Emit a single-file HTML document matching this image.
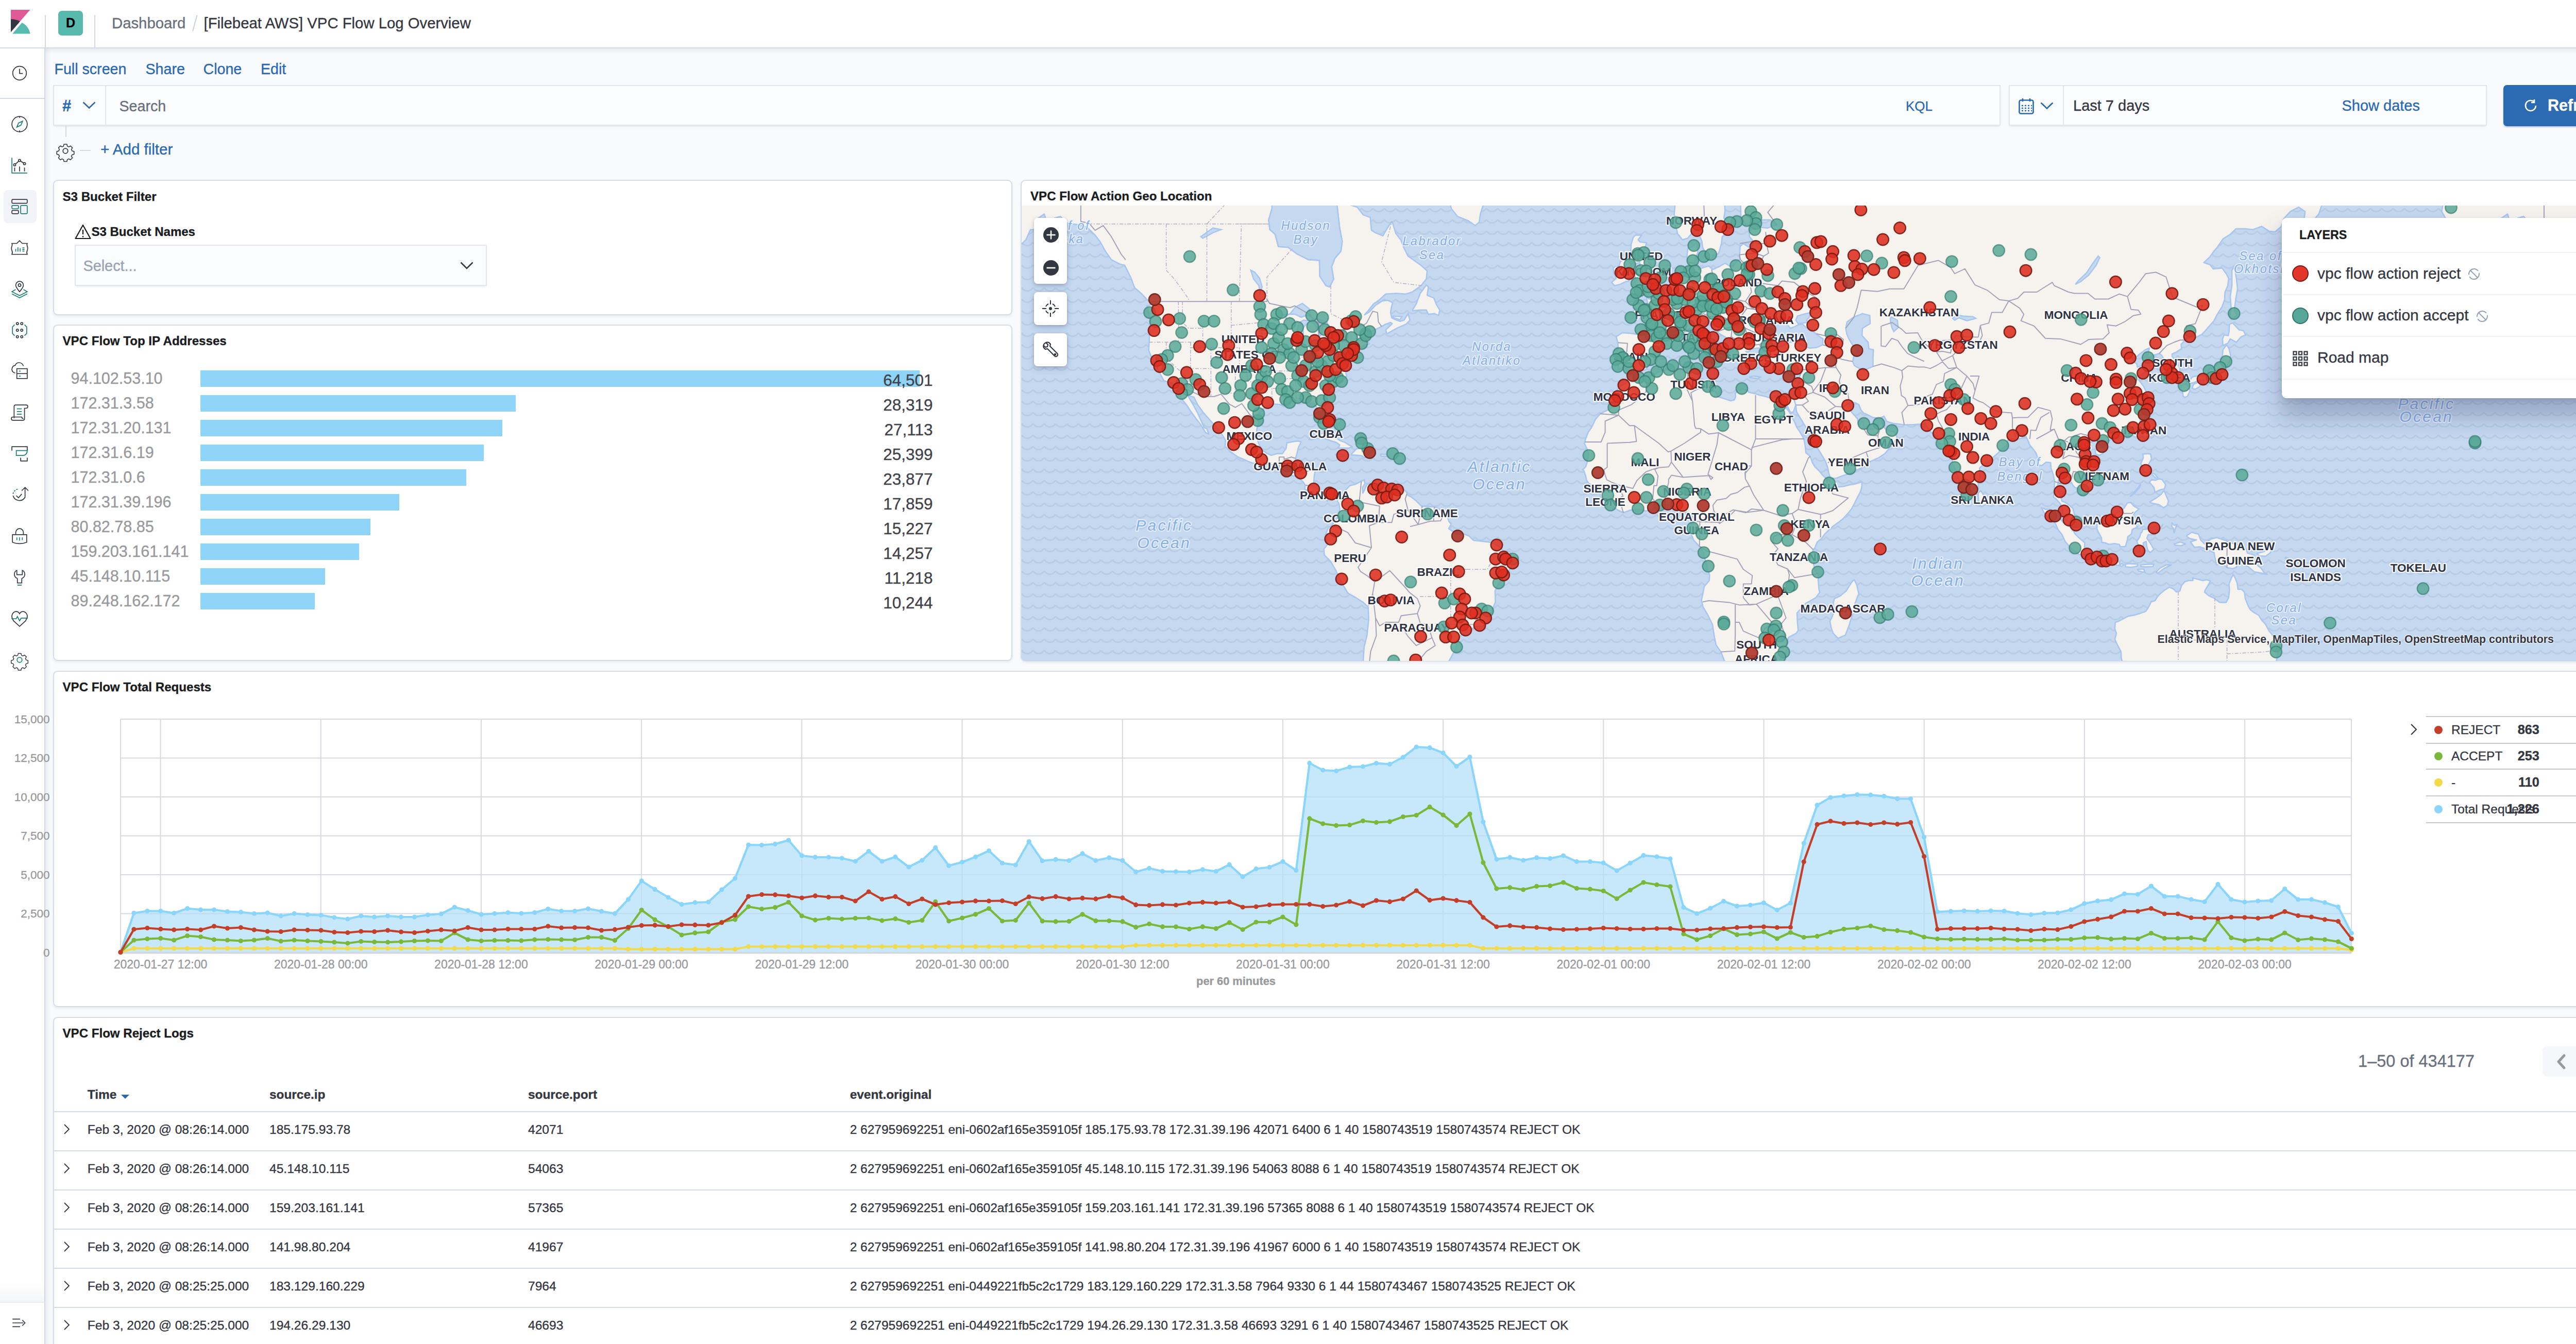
<!DOCTYPE html>
<html><head><meta charset="utf-8"><title>Kibana</title><style>
*{margin:0;padding:0;box-sizing:border-box}
html,body{width:5111px;height:2609px;overflow:hidden;background:#f9fafc;font-family:"Liberation Sans",sans-serif}
.t{position:absolute;line-height:1;white-space:nowrap;-webkit-text-stroke:0.35px currentColor}
.a{position:absolute}
svg{position:absolute;overflow:visible}
</style></head>
<body>
<div class="a" style="left:0px;top:0px;width:5111px;height:93px;background:#fff;"></div>
<div class="a" style="left:0px;top:92px;width:5111px;height:2px;background:#d3dae6;"></div>
<div class="a" style="left:0px;top:94px;width:5111px;height:10px;background:linear-gradient(rgba(152,162,179,.18),rgba(152,162,179,0));"></div>
<svg style="left:15px;top:19px" width="48" height="48" viewBox="0 0 32 32"><path fill="#e05a97" d="M4 0v28.789L28.935.017z"/><path fill="#343741" d="M4 12v16.789l11.906-13.738A24.721 24.721 0 004 12"/><path fill="#58bbb2" d="M18.479 16.664L6.268 30.754l-.267.306H29.14c-1.223-6.288-5.025-11.636-10.661-14.396"/></svg>
<div class="a" style="left:87px;top:29px;width:2px;height:64px;background:#d3dae6;"></div>
<div class="a" style="left:183px;top:29px;width:2px;height:64px;background:#d3dae6;"></div>
<div class="a" style="left:5015px;top:29px;width:2px;height:64px;background:#d3dae6;"></div>
<div class="a" style="left:113px;top:21px;width:48px;height:48px;background:#58b9ad;border-radius:7px;"></div>
<div class="t" style="left:137.0px;transform:translateX(-50%);top:32.3px;font-size:25px;color:#000;font-weight:bold;">D</div>
<div class="t" style="left:217.0px;top:30.2px;font-size:29.3px;color:#69707d;">Dashboard</div>
<svg style="left:370px;top:28px" width="16" height="34" viewBox="0 0 16 34"><path d="M12.5 1.5L4 32.5" stroke="#c9d0dc" stroke-width="2"/></svg>
<div class="t" style="left:395.5px;top:30.2px;font-size:29.3px;color:#343741;">[Filebeat AWS] VPC Flow Log Overview</div>
<svg style="left:5045px;top:27px" width="36" height="36" viewBox="0 0 36 36"><circle cx="18" cy="18" r="15.2" fill="none" stroke="#343741" stroke-width="2.3"/><circle cx="18" cy="18" r="8.8" fill="none" stroke="#343741" stroke-width="2.3"/><path d="M7.5 7.5L12 12M28.5 7.5L24 12M7.5 28.5L12 24M28.5 28.5L24 24" stroke="#343741" stroke-width="4.2"/></svg>
<div class="a" style="left:0px;top:94px;width:87px;height:2515px;background:#fff;"></div>
<div class="a" style="left:86px;top:94px;width:2px;height:2515px;background:#d3dae6;"></div>
<div class="a" style="left:88px;top:94px;width:10px;height:2515px;background:linear-gradient(90deg,rgba(152,162,179,.15),rgba(152,162,179,0));"></div>
<div class="a" style="left:0px;top:190px;width:87px;height:2px;background:#d3dae6;"></div>
<div class="a" style="left:7px;top:369px;width:64px;height:64px;background:#f1f3f8;border-radius:8px;"></div>
<svg style="left:21.0px;top:125.0px" width="34" height="34" viewBox="0 0 32 32" fill="none" stroke-width="1.6"><circle cx="16" cy="16" r="12.5" stroke="#343741"/><path d="M16 8v8.5h6" stroke="#343741"/></svg>
<svg style="left:21.0px;top:224.0px" width="34" height="34" viewBox="0 0 32 32" fill="none" stroke-width="1.6"><circle cx="16" cy="16" r="14" stroke="#343741"/><path d="M16 1.5v3M16 27.5v3" stroke="#343741"/><path d="M21.5 10.5l-3 7.5-7.5 3.5 3-7.5z" stroke="#1c7f74"/></svg>
<svg style="left:21.0px;top:304.0px" width="34" height="34" viewBox="0 0 32 32" fill="none" stroke-width="1.6"><path d="M2 2v28h28" stroke="#1c7f74"/><path d="M7 27v-7M16 27v-9M25 27v-7" stroke="#343741"/><path d="M7 15l9-8 9 6" stroke="#343741"/><circle cx="7" cy="15" r="2" stroke="#343741" fill="#fff"/><circle cx="16" cy="7" r="2" stroke="#343741" fill="#fff"/><circle cx="25" cy="13" r="2" stroke="#343741" fill="#fff"/></svg>
<svg style="left:21.0px;top:384.0px" width="34" height="34" viewBox="0 0 32 32" fill="none" stroke-width="1.6"><rect x="2" y="3" width="28" height="7" rx="1.5" stroke="#343741"/><rect x="2" y="14" width="12" height="6" rx="1.5" stroke="#1c7f74"/><rect x="2" y="23" width="12" height="6" rx="1.5" stroke="#343741"/><rect x="18" y="14" width="12" height="15" rx="1.5" stroke="#1c7f74"/></svg>
<svg style="left:21.0px;top:464.0px" width="34" height="34" viewBox="0 0 32 32" fill="none" stroke-width="1.6"><path d="M2 8h9l5-5 5 5h9c-1 2-1 3 0 5s1 6 0 8-1 5 0 7H2c1-2 1-5 0-7s-1-6 0-8 1-3 0-5z" stroke="#343741"/><path d="M9 23v-5M13 23v-8M17 23v-6M21 16h4M21 19h4M21 22h4" stroke="#1c7f74"/></svg>
<svg style="left:21.0px;top:544.0px" width="34" height="34" viewBox="0 0 32 32" fill="none" stroke-width="1.6"><path d="M16 21c-4-5-7-8-7-12a7 7 0 0114 0c0 4-3 7-7 12z" stroke="#343741"/><circle cx="16" cy="9" r="2.5" stroke="#343741"/><path d="M9 17l-7 4 14 7 14-7-7-4" stroke="#1c7f74"/><path d="M2 25l14 7 14-7" stroke="#1c7f74"/></svg>
<svg style="left:21.0px;top:624.0px" width="34" height="34" viewBox="0 0 32 32" fill="none" stroke-width="1.6"><circle cx="12" cy="4" r="2" stroke="#343741"/><circle cx="20" cy="4" r="2" stroke="#343741"/><circle cx="12" cy="16" r="2" stroke="#343741"/><circle cx="20" cy="16" r="2" stroke="#343741"/><circle cx="12" cy="28" r="2" stroke="#343741"/><circle cx="20" cy="28" r="2" stroke="#343741"/><path d="M7 6l-4 4v12l4 4M25 6l4 4v12l-4 4" stroke="#1c7f74"/></svg>
<svg style="left:21.0px;top:704.0px" width="34" height="34" viewBox="0 0 32 32" fill="none" stroke-width="1.6"><path d="M8 19c-4-1-6-3-6-7 0-4 3-7 6-7 1-3 4-5 7-5 4 0 7 3 8 6" stroke="#343741"/><rect x="11" y="11" width="19" height="18" stroke="#343741"/><path d="M11 20h19" stroke="#343741"/><path d="M15 15.5h3M15 24.5h3" stroke="#1c7f74"/></svg>
<svg style="left:21.0px;top:784.0px" width="34" height="34" viewBox="0 0 32 32" fill="none" stroke-width="1.6"><path d="M6 26V5a3 3 0 013-3h19a3 3 0 010 6h-3v19a3 3 0 01-3 3H4a3 3 0 010-6h16a3 3 0 003 3" stroke="#343741"/><path d="M11 9h9M11 14h9M11 19h9" stroke="#1c7f74"/></svg>
<svg style="left:21.0px;top:864.0px" width="34" height="34" viewBox="0 0 32 32" fill="none" stroke-width="1.6"><path d="M2 10V3h28v7" stroke="#343741"/><path d="M10 10h20c0 6-4 9-8 9h-12z" stroke="#1c7f74"/><path d="M18 23v6h12v-6" stroke="#343741"/></svg>
<svg style="left:21.0px;top:944.0px" width="34" height="34" viewBox="0 0 32 32" fill="none" stroke-width="1.6"><path d="M4 14a11 11 0 0110-9" stroke="#1c7f74" stroke-dasharray="3 2"/><path d="M4 17a12 12 0 0022 3v-18M20 8l6-6 6 6" stroke="#343741"/><path d="M10 17l4 4 6-7" stroke="#343741"/></svg>
<svg style="left:21.0px;top:1024.0px" width="34" height="34" viewBox="0 0 32 32" fill="none" stroke-width="1.6"><path d="M9 13V9a7 7 0 0114 0v4" stroke="#343741"/><path d="M3 13h26v14c-8 3-18 3-26 0z" stroke="#343741"/><path d="M11 18v5M16 18v6M21 18v5" stroke="#1c7f74"/></svg>
<svg style="left:21.0px;top:1104.0px" width="34" height="34" viewBox="0 0 32 32" fill="none" stroke-width="1.6"><path d="M11 3c-5 2-6 9-2 13l3 2v8h8v-8l3-2c4-4 3-11-2-13v8h-10z" stroke="#343741"/><path d="M12 30h8" stroke="#1c7f74"/></svg>
<svg style="left:21.0px;top:1184.0px" width="34" height="34" viewBox="0 0 32 32" fill="none" stroke-width="1.6"><path d="M5 20l-2-4c-3-6 1-13 7-13 3 0 5 2 6 4 1-2 3-4 6-4 6 0 10 7 7 13l-2 4-11 10z" stroke="#343741"/><path d="M1 16h9l2-4 4 8 3-5h12" stroke="#1c7f74" fill="#fff"/></svg>
<svg style="left:21.0px;top:1264.0px" width="34" height="34" viewBox="0 0 32 32" fill="none" stroke-width="1.6"><path d="M13 2h6l1 4 3 1.5 3.5-2 4 4-2 3.5 1.5 3 4 1v6l-4 1-1.5 3 2 3.5-4 4-3.5-2-3 1.5-1 4h-6l-1-4-3-1.5-3.5 2-4-4 2-3.5-1.5-3-4-1v-6l4-1 1.5-3-2-3.5 4-4 3.5 2 3-1.5z" stroke="#343741" transform="translate(2.5 2.5) scale(.85)"/><circle cx="16" cy="16" r="4.5" stroke="#1c7f74"/></svg>
<div class="a" style="left:0px;top:2490px;width:87px;height:37px;background:linear-gradient(rgba(152,162,179,0),rgba(152,162,179,.10));"></div>
<div class="a" style="left:0px;top:2527px;width:87px;height:2px;background:#e6e9f0;"></div>
<svg style="left:21.0px;top:2551.0px" width="34" height="34" viewBox="0 0 32 32" fill="none" stroke-width="1.6"><path d="M3 9h14M3 16h20M3 23h14" stroke="#343741"/><path d="M21 11l5 5-5 5" stroke="#343741"/></svg>
<div class="t" style="left:105.5px;top:119.8px;font-size:28.6px;color:#2a69b0;">Full screen</div>
<div class="t" style="left:282.5px;top:119.8px;font-size:28.6px;color:#2a69b0;">Share</div>
<div class="t" style="left:394.5px;top:119.8px;font-size:28.6px;color:#2a69b0;">Clone</div>
<div class="t" style="left:506.0px;top:119.8px;font-size:28.6px;color:#2a69b0;">Edit</div>
<div class="a" style="left:103px;top:165px;width:3780px;height:79px;background:#fbfcfd;border:2px solid #e3e6eb;box-shadow:0 3px 4px -2px rgba(152,162,179,.35);"></div>
<div class="a" style="left:204px;top:167px;width:2px;height:75px;background:#e3e6eb;"></div>
<div class="t" style="left:121.0px;top:189.8px;font-size:31px;color:#2a69b0;font-weight:600;">#</div>
<svg style="left:160px;top:197px" width="26" height="14" viewBox="0 0 26 14"><path d="M1.5 1.5l11.5 11 11.5-11" fill="none" stroke="#2a69b0" stroke-width="2.6"/></svg>
<div class="t" style="left:231.5px;top:191.8px;font-size:28.6px;color:#69707d;">Search</div>
<div class="t" style="right:1249.0px;top:193.0px;font-size:26px;color:#2a69b0;">KQL</div>
<div class="a" style="left:3899px;top:165px;width:928px;height:79px;background:#fbfcfd;border:2px solid #e3e6eb;box-shadow:0 3px 4px -2px rgba(152,162,179,.35);"></div>
<div class="a" style="left:4004px;top:167px;width:2px;height:75px;background:#e3e6eb;"></div>
<svg style="left:3918px;top:190px" width="30" height="32" viewBox="0 0 30 32" fill="none" stroke="#2a69b0"><rect x="1.5" y="4.5" width="27" height="26" rx="3" stroke-width="2.6"/><path d="M8 1v6M22 1v6" stroke-width="2.6"/><path d="M6 15h3M12 15h3M18 15h3M24 15h2M6 20h3M12 20h3M18 20h3M24 20h2M6 25h3M12 25h3M18 25h3M24 25h2" stroke-width="2.4"/></svg>
<svg style="left:3960px;top:198px" width="26" height="14" viewBox="0 0 26 14"><path d="M1.5 1.5l11.5 11 11.5-11" fill="none" stroke="#2a69b0" stroke-width="2.6"/></svg>
<div class="t" style="left:4024.0px;top:190.5px;font-size:29px;color:#343741;">Last 7 days</div>
<div class="t" style="right:303.0px;top:190.5px;font-size:29px;color:#2a69b0;">Show dates</div>
<div class="a" style="left:4859px;top:165px;width:236px;height:80px;background:#2c6bb1;border-radius:7px;box-shadow:0 2px 3px rgba(0,50,120,.25);"></div>
<svg style="left:4898px;top:191px" width="28" height="28" viewBox="0 0 28 28" fill="none" stroke="#fff" stroke-width="2.6"><path d="M24 14a10 10 0 1 1-4-8"/><path d="M21 2v6h-6"/></svg>
<div class="t" style="left:4945.0px;top:189.2px;font-size:30.5px;color:#fff;font-weight:bold;">Refresh</div>
<div class="a" style="left:127px;top:244px;width:2px;height:22px;background:#d3dae6;"></div>
<svg style="left:110px;top:276px" width="34" height="34" viewBox="0 0 32 32" fill="none" stroke="#343741" stroke-width="1.7"><path d="M13 2h6l1 4 3 1.5 3.5-2 4 4-2 3.5 1.5 3 4 1v6l-4 1-1.5 3 2 3.5-4 4-3.5-2-3 1.5-1 4h-6l-1-4-3-1.5-3.5 2-4-4 2-3.5-1.5-3-4-1v-6l4-1 1.5-3-2-3.5 4-4 3.5 2 3-1.5z" transform="translate(2 2) scale(.875)"/><circle cx="16" cy="16" r="4.5"/></svg>
<div class="a" style="left:155px;top:291px;width:21px;height:2px;background:#d3dae6;"></div>
<div class="t" style="left:195.0px;top:275.0px;font-size:29.5px;color:#2a69b0;">+ Add filter</div>
<div class="a" style="left:103px;top:349px;width:1862px;height:263px;background:#fff;border:2px solid #d6dce7;border-radius:9px;box-shadow:0 3px 5px -1px rgba(152,162,179,.22);"></div>
<div class="a" style="left:103px;top:630px;width:1862px;height:653px;background:#fff;border:2px solid #d6dce7;border-radius:9px;box-shadow:0 3px 5px -1px rgba(152,162,179,.22);"></div>
<div class="a" style="left:1981px;top:349px;width:3114px;height:935px;background:#fff;border:2px solid #d6dce7;border-radius:9px;box-shadow:0 3px 5px -1px rgba(152,162,179,.22);"></div>
<div class="a" style="left:103px;top:1302px;width:4992px;height:653px;background:#fff;border:2px solid #d6dce7;border-radius:9px;box-shadow:0 3px 5px -1px rgba(152,162,179,.22);"></div>
<div class="a" style="left:103px;top:1974px;width:4992px;height:726px;background:#fff;border:2px solid #d6dce7;border-radius:9px;box-shadow:0 3px 5px -1px rgba(152,162,179,.22);"></div>
<div class="t" style="left:121.5px;top:369.6px;font-size:24.1px;color:#1a1c21;font-weight:bold;">S3 Bucket Filter</div>
<div class="t" style="left:121.5px;top:649.6px;font-size:24.1px;color:#1a1c21;font-weight:bold;">VPC Flow Top IP Addresses</div>
<div class="t" style="left:2000.0px;top:368.6px;font-size:24.1px;color:#1a1c21;font-weight:bold;">VPC Flow Action Geo Location</div>
<div class="t" style="left:121.5px;top:1322.1px;font-size:24.1px;color:#1a1c21;font-weight:bold;">VPC Flow Total Requests</div>
<div class="t" style="left:121.5px;top:1993.6px;font-size:24.1px;color:#1a1c21;font-weight:bold;">VPC Flow Reject Logs</div>
<svg style="left:145px;top:435px" width="32" height="30" viewBox="0 0 32 30" fill="none" stroke="#1a1c21" stroke-width="2.2"><path d="M16 2L1.5 28h29z" stroke-linejoin="round"/><path d="M16 11v9M16 23v2.5"/></svg>
<div class="t" style="left:177.5px;top:437.7px;font-size:24px;color:#1a1c21;font-weight:bold;">S3 Bucket Names</div>
<div class="a" style="left:145px;top:475px;width:800px;height:80px;background:#fbfcfd;border:2px solid #e3e6eb;box-shadow:0 3px 4px -2px rgba(152,162,179,.3);"></div>
<div class="t" style="left:161.5px;top:501.6px;font-size:28.8px;color:#98a2b3;">Select...</div>
<svg style="left:893px;top:508px" width="26" height="15" viewBox="0 0 26 15"><path d="M1.5 1.5l11.5 11.5 11.5-11.5" fill="none" stroke="#343741" stroke-width="2.6"/></svg>
<div class="a" style="left:389px;top:719px;width:1396px;height:32px;background:#8ed4f8;"></div>
<div class="t" style="left:137.5px;top:719.2px;font-size:30.5px;color:#98999c;">94.102.53.10</div>
<div class="t" style="right:3189.5px;top:723.3px;font-size:31.5px;color:#3f4249;">64,501</div>
<div class="a" style="left:389px;top:767px;width:612px;height:32px;background:#8ed4f8;"></div>
<div class="t" style="left:137.5px;top:767.2px;font-size:30.5px;color:#98999c;">172.31.3.58</div>
<div class="t" style="right:3189.5px;top:771.3px;font-size:31.5px;color:#3f4249;">28,319</div>
<div class="a" style="left:389px;top:815px;width:586px;height:32px;background:#8ed4f8;"></div>
<div class="t" style="left:137.5px;top:815.2px;font-size:30.5px;color:#98999c;">172.31.20.131</div>
<div class="t" style="right:3189.5px;top:819.3px;font-size:31.5px;color:#3f4249;">27,113</div>
<div class="a" style="left:389px;top:863px;width:550px;height:32px;background:#8ed4f8;"></div>
<div class="t" style="left:137.5px;top:863.2px;font-size:30.5px;color:#98999c;">172.31.6.19</div>
<div class="t" style="right:3189.5px;top:867.3px;font-size:31.5px;color:#3f4249;">25,399</div>
<div class="a" style="left:389px;top:911px;width:516px;height:32px;background:#8ed4f8;"></div>
<div class="t" style="left:137.5px;top:911.2px;font-size:30.5px;color:#98999c;">172.31.0.6</div>
<div class="t" style="right:3189.5px;top:915.3px;font-size:31.5px;color:#3f4249;">23,877</div>
<div class="a" style="left:389px;top:959px;width:386px;height:32px;background:#8ed4f8;"></div>
<div class="t" style="left:137.5px;top:959.2px;font-size:30.5px;color:#98999c;">172.31.39.196</div>
<div class="t" style="right:3189.5px;top:963.3px;font-size:31.5px;color:#3f4249;">17,859</div>
<div class="a" style="left:389px;top:1007px;width:330px;height:32px;background:#8ed4f8;"></div>
<div class="t" style="left:137.5px;top:1007.2px;font-size:30.5px;color:#98999c;">80.82.78.85</div>
<div class="t" style="right:3189.5px;top:1011.3px;font-size:31.5px;color:#3f4249;">15,227</div>
<div class="a" style="left:389px;top:1055px;width:308px;height:32px;background:#8ed4f8;"></div>
<div class="t" style="left:137.5px;top:1055.2px;font-size:30.5px;color:#98999c;">159.203.161.141</div>
<div class="t" style="right:3189.5px;top:1059.3px;font-size:31.5px;color:#3f4249;">14,257</div>
<div class="a" style="left:389px;top:1103px;width:242px;height:32px;background:#8ed4f8;"></div>
<div class="t" style="left:137.5px;top:1103.2px;font-size:30.5px;color:#98999c;">45.148.10.115</div>
<div class="t" style="right:3189.5px;top:1107.3px;font-size:31.5px;color:#3f4249;">11,218</div>
<div class="a" style="left:389px;top:1151px;width:222px;height:32px;background:#8ed4f8;"></div>
<div class="t" style="left:137.5px;top:1151.2px;font-size:30.5px;color:#98999c;">89.248.162.172</div>
<div class="t" style="right:3189.5px;top:1155.3px;font-size:31.5px;color:#3f4249;">10,244</div>
<svg style="left:0;top:0" width="5111" height="2609" viewBox="0 0 5111 2609"><path d="M234 1396.0H4564M234 1471.5H4564M234 1547.0H4564M234 1622.5H4564M234 1698.0H4564M234 1773.5H4564M234 1849.0H4564M311.5 1396V1849M622.7 1396V1849M933.9 1396V1849M1245.1 1396V1849M1556.3 1396V1849M1867.5 1396V1849M2178.7 1396V1849M2489.9 1396V1849M2801.1 1396V1849M3112.3 1396V1849M3423.5 1396V1849M3734.7 1396V1849M4045.9 1396V1849M4357.1 1396V1849M234 1396V1849M4564 1396V1849" stroke="#e3e4e8" stroke-width="2" fill="none"/><polygon points="234,1849 234.0,1848.5 259.9,1772.5 285.9,1768.5 311.8,1768.5 337.7,1772.5 363.6,1763.5 389.6,1766.0 415.5,1766.0 441.4,1769.5 467.4,1770.5 493.3,1773.5 519.2,1772.0 545.2,1778.0 571.1,1773.5 597.0,1775.5 623.0,1776.5 648.9,1781.0 674.8,1784.0 700.7,1778.0 726.7,1780.0 752.6,1778.0 778.5,1780.0 804.5,1780.0 830.4,1776.0 856.3,1774.0 882.2,1761.0 908.2,1767.5 934.1,1775.0 960.0,1773.5 986.0,1771.5 1011.9,1773.0 1037.8,1771.5 1063.8,1764.5 1089.7,1768.5 1115.6,1768.5 1141.5,1764.0 1167.5,1769.0 1193.4,1773.5 1219.3,1746.0 1245.3,1710.0 1271.2,1726.5 1297.1,1742.0 1323.1,1755.5 1349.0,1752.0 1374.9,1751.0 1400.8,1727.0 1426.8,1705.0 1452.7,1640.0 1478.6,1640.5 1504.6,1638.5 1530.5,1631.0 1556.4,1661.0 1582.4,1664.0 1608.3,1664.0 1634.2,1666.0 1660.2,1672.0 1686.1,1652.5 1712.0,1672.0 1737.9,1663.5 1763.9,1683.0 1789.8,1670.0 1815.7,1645.5 1841.7,1680.5 1867.6,1673.5 1893.5,1663.5 1919.5,1651.5 1945.4,1675.5 1971.3,1679.0 1997.2,1633.5 2023.2,1671.0 2049.1,1668.5 2075.0,1670.5 2101.0,1657.0 2126.9,1670.5 2152.8,1665.0 2178.8,1670.5 2204.7,1692.5 2230.6,1685.5 2256.5,1691.5 2282.5,1692.0 2308.4,1692.5 2334.3,1688.0 2360.3,1691.5 2386.2,1678.5 2412.1,1702.0 2438.1,1686.5 2464.0,1683.5 2489.9,1672.5 2515.8,1689.5 2541.8,1481.5 2567.7,1495.0 2593.6,1496.5 2619.6,1489.0 2645.5,1488.0 2671.4,1481.5 2697.3,1483.5 2723.3,1470.0 2749.2,1450.0 2775.1,1451.5 2801.1,1461.5 2827.0,1487.5 2852.9,1469.5 2878.9,1595.5 2904.8,1668.0 2930.7,1664.5 2956.7,1670.0 2982.6,1665.0 3008.5,1666.5 3034.4,1661.0 3060.4,1672.5 3086.3,1672.5 3112.2,1675.0 3138.2,1690.0 3164.1,1675.5 3190.0,1660.5 3215.9,1663.0 3241.9,1667.0 3267.8,1761.5 3293.7,1773.5 3319.7,1763.0 3345.6,1749.5 3371.5,1759.0 3397.5,1757.0 3423.4,1752.5 3449.3,1766.5 3475.2,1753.0 3501.2,1637.0 3527.1,1563.0 3553.0,1548.0 3579.0,1545.0 3604.9,1542.5 3630.8,1543.0 3656.8,1545.5 3682.7,1550.5 3708.6,1550.5 3734.6,1625.0 3760.5,1770.0 3786.4,1769.0 3812.3,1768.0 3838.3,1769.0 3864.2,1768.0 3890.1,1768.5 3916.1,1773.0 3942.0,1775.5 3967.9,1772.5 3993.8,1772.0 4019.8,1766.0 4045.7,1754.0 4071.6,1749.0 4097.6,1746.5 4123.5,1735.0 4149.4,1736.0 4175.4,1720.0 4201.3,1740.0 4227.2,1740.0 4253.1,1746.0 4279.1,1750.5 4305.0,1716.5 4330.9,1746.0 4356.9,1751.0 4382.8,1749.0 4408.7,1748.0 4434.7,1725.5 4460.6,1746.0 4486.5,1746.0 4512.4,1752.0 4538.4,1760.5 4564.3,1811.5 4564.3,1849" fill="#c6e8fa"/><path d="M234 1396.0H4564M234 1471.5H4564M234 1547.0H4564M234 1622.5H4564M234 1698.0H4564M234 1773.5H4564M234 1849.0H4564M311.5 1396V1849M622.7 1396V1849M933.9 1396V1849M1245.1 1396V1849M1556.3 1396V1849M1867.5 1396V1849M2178.7 1396V1849M2489.9 1396V1849M2801.1 1396V1849M3112.3 1396V1849M3423.5 1396V1849M3734.7 1396V1849M4045.9 1396V1849M4357.1 1396V1849M234 1396V1849M4564 1396V1849" stroke="rgba(160,170,190,.18)" stroke-width="2" fill="none"/><path d="M232 1850H4564" stroke="#d6d7da" stroke-width="3"/><polyline points="234.0,1848.5 259.9,1772.5 285.9,1768.5 311.8,1768.5 337.7,1772.5 363.6,1763.5 389.6,1766.0 415.5,1766.0 441.4,1769.5 467.4,1770.5 493.3,1773.5 519.2,1772.0 545.2,1778.0 571.1,1773.5 597.0,1775.5 623.0,1776.5 648.9,1781.0 674.8,1784.0 700.7,1778.0 726.7,1780.0 752.6,1778.0 778.5,1780.0 804.5,1780.0 830.4,1776.0 856.3,1774.0 882.2,1761.0 908.2,1767.5 934.1,1775.0 960.0,1773.5 986.0,1771.5 1011.9,1773.0 1037.8,1771.5 1063.8,1764.5 1089.7,1768.5 1115.6,1768.5 1141.5,1764.0 1167.5,1769.0 1193.4,1773.5 1219.3,1746.0 1245.3,1710.0 1271.2,1726.5 1297.1,1742.0 1323.1,1755.5 1349.0,1752.0 1374.9,1751.0 1400.8,1727.0 1426.8,1705.0 1452.7,1640.0 1478.6,1640.5 1504.6,1638.5 1530.5,1631.0 1556.4,1661.0 1582.4,1664.0 1608.3,1664.0 1634.2,1666.0 1660.2,1672.0 1686.1,1652.5 1712.0,1672.0 1737.9,1663.5 1763.9,1683.0 1789.8,1670.0 1815.7,1645.5 1841.7,1680.5 1867.6,1673.5 1893.5,1663.5 1919.5,1651.5 1945.4,1675.5 1971.3,1679.0 1997.2,1633.5 2023.2,1671.0 2049.1,1668.5 2075.0,1670.5 2101.0,1657.0 2126.9,1670.5 2152.8,1665.0 2178.8,1670.5 2204.7,1692.5 2230.6,1685.5 2256.5,1691.5 2282.5,1692.0 2308.4,1692.5 2334.3,1688.0 2360.3,1691.5 2386.2,1678.5 2412.1,1702.0 2438.1,1686.5 2464.0,1683.5 2489.9,1672.5 2515.8,1689.5 2541.8,1481.5 2567.7,1495.0 2593.6,1496.5 2619.6,1489.0 2645.5,1488.0 2671.4,1481.5 2697.3,1483.5 2723.3,1470.0 2749.2,1450.0 2775.1,1451.5 2801.1,1461.5 2827.0,1487.5 2852.9,1469.5 2878.9,1595.5 2904.8,1668.0 2930.7,1664.5 2956.7,1670.0 2982.6,1665.0 3008.5,1666.5 3034.4,1661.0 3060.4,1672.5 3086.3,1672.5 3112.2,1675.0 3138.2,1690.0 3164.1,1675.5 3190.0,1660.5 3215.9,1663.0 3241.9,1667.0 3267.8,1761.5 3293.7,1773.5 3319.7,1763.0 3345.6,1749.5 3371.5,1759.0 3397.5,1757.0 3423.4,1752.5 3449.3,1766.5 3475.2,1753.0 3501.2,1637.0 3527.1,1563.0 3553.0,1548.0 3579.0,1545.0 3604.9,1542.5 3630.8,1543.0 3656.8,1545.5 3682.7,1550.5 3708.6,1550.5 3734.6,1625.0 3760.5,1770.0 3786.4,1769.0 3812.3,1768.0 3838.3,1769.0 3864.2,1768.0 3890.1,1768.5 3916.1,1773.0 3942.0,1775.5 3967.9,1772.5 3993.8,1772.0 4019.8,1766.0 4045.7,1754.0 4071.6,1749.0 4097.6,1746.5 4123.5,1735.0 4149.4,1736.0 4175.4,1720.0 4201.3,1740.0 4227.2,1740.0 4253.1,1746.0 4279.1,1750.5 4305.0,1716.5 4330.9,1746.0 4356.9,1751.0 4382.8,1749.0 4408.7,1748.0 4434.7,1725.5 4460.6,1746.0 4486.5,1746.0 4512.4,1752.0 4538.4,1760.5 4564.3,1811.5" fill="none" stroke="#8ad5fb" stroke-width="4.2" stroke-linejoin="round"/><path d="M229.4 1848.5a4.6 4.6 0 1 0 9.2 0a4.6 4.6 0 1 0 -9.2 0M255.3 1772.5a4.6 4.6 0 1 0 9.2 0a4.6 4.6 0 1 0 -9.2 0M281.3 1768.5a4.6 4.6 0 1 0 9.2 0a4.6 4.6 0 1 0 -9.2 0M307.2 1768.5a4.6 4.6 0 1 0 9.2 0a4.6 4.6 0 1 0 -9.2 0M333.1 1772.5a4.6 4.6 0 1 0 9.2 0a4.6 4.6 0 1 0 -9.2 0M359.0 1763.5a4.6 4.6 0 1 0 9.2 0a4.6 4.6 0 1 0 -9.2 0M385.0 1766.0a4.6 4.6 0 1 0 9.2 0a4.6 4.6 0 1 0 -9.2 0M410.9 1766.0a4.6 4.6 0 1 0 9.2 0a4.6 4.6 0 1 0 -9.2 0M436.8 1769.5a4.6 4.6 0 1 0 9.2 0a4.6 4.6 0 1 0 -9.2 0M462.8 1770.5a4.6 4.6 0 1 0 9.2 0a4.6 4.6 0 1 0 -9.2 0M488.7 1773.5a4.6 4.6 0 1 0 9.2 0a4.6 4.6 0 1 0 -9.2 0M514.6 1772.0a4.6 4.6 0 1 0 9.2 0a4.6 4.6 0 1 0 -9.2 0M540.6 1778.0a4.6 4.6 0 1 0 9.2 0a4.6 4.6 0 1 0 -9.2 0M566.5 1773.5a4.6 4.6 0 1 0 9.2 0a4.6 4.6 0 1 0 -9.2 0M592.4 1775.5a4.6 4.6 0 1 0 9.2 0a4.6 4.6 0 1 0 -9.2 0M618.4 1776.5a4.6 4.6 0 1 0 9.2 0a4.6 4.6 0 1 0 -9.2 0M644.3 1781.0a4.6 4.6 0 1 0 9.2 0a4.6 4.6 0 1 0 -9.2 0M670.2 1784.0a4.6 4.6 0 1 0 9.2 0a4.6 4.6 0 1 0 -9.2 0M696.1 1778.0a4.6 4.6 0 1 0 9.2 0a4.6 4.6 0 1 0 -9.2 0M722.1 1780.0a4.6 4.6 0 1 0 9.2 0a4.6 4.6 0 1 0 -9.2 0M748.0 1778.0a4.6 4.6 0 1 0 9.2 0a4.6 4.6 0 1 0 -9.2 0M773.9 1780.0a4.6 4.6 0 1 0 9.2 0a4.6 4.6 0 1 0 -9.2 0M799.9 1780.0a4.6 4.6 0 1 0 9.2 0a4.6 4.6 0 1 0 -9.2 0M825.8 1776.0a4.6 4.6 0 1 0 9.2 0a4.6 4.6 0 1 0 -9.2 0M851.7 1774.0a4.6 4.6 0 1 0 9.2 0a4.6 4.6 0 1 0 -9.2 0M877.6 1761.0a4.6 4.6 0 1 0 9.2 0a4.6 4.6 0 1 0 -9.2 0M903.6 1767.5a4.6 4.6 0 1 0 9.2 0a4.6 4.6 0 1 0 -9.2 0M929.5 1775.0a4.6 4.6 0 1 0 9.2 0a4.6 4.6 0 1 0 -9.2 0M955.4 1773.5a4.6 4.6 0 1 0 9.2 0a4.6 4.6 0 1 0 -9.2 0M981.4 1771.5a4.6 4.6 0 1 0 9.2 0a4.6 4.6 0 1 0 -9.2 0M1007.3 1773.0a4.6 4.6 0 1 0 9.2 0a4.6 4.6 0 1 0 -9.2 0M1033.2 1771.5a4.6 4.6 0 1 0 9.2 0a4.6 4.6 0 1 0 -9.2 0M1059.2 1764.5a4.6 4.6 0 1 0 9.2 0a4.6 4.6 0 1 0 -9.2 0M1085.1 1768.5a4.6 4.6 0 1 0 9.2 0a4.6 4.6 0 1 0 -9.2 0M1111.0 1768.5a4.6 4.6 0 1 0 9.2 0a4.6 4.6 0 1 0 -9.2 0M1137.0 1764.0a4.6 4.6 0 1 0 9.2 0a4.6 4.6 0 1 0 -9.2 0M1162.9 1769.0a4.6 4.6 0 1 0 9.2 0a4.6 4.6 0 1 0 -9.2 0M1188.8 1773.5a4.6 4.6 0 1 0 9.2 0a4.6 4.6 0 1 0 -9.2 0M1214.7 1746.0a4.6 4.6 0 1 0 9.2 0a4.6 4.6 0 1 0 -9.2 0M1240.7 1710.0a4.6 4.6 0 1 0 9.2 0a4.6 4.6 0 1 0 -9.2 0M1266.6 1726.5a4.6 4.6 0 1 0 9.2 0a4.6 4.6 0 1 0 -9.2 0M1292.5 1742.0a4.6 4.6 0 1 0 9.2 0a4.6 4.6 0 1 0 -9.2 0M1318.5 1755.5a4.6 4.6 0 1 0 9.2 0a4.6 4.6 0 1 0 -9.2 0M1344.4 1752.0a4.6 4.6 0 1 0 9.2 0a4.6 4.6 0 1 0 -9.2 0M1370.3 1751.0a4.6 4.6 0 1 0 9.2 0a4.6 4.6 0 1 0 -9.2 0M1396.2 1727.0a4.6 4.6 0 1 0 9.2 0a4.6 4.6 0 1 0 -9.2 0M1422.2 1705.0a4.6 4.6 0 1 0 9.2 0a4.6 4.6 0 1 0 -9.2 0M1448.1 1640.0a4.6 4.6 0 1 0 9.2 0a4.6 4.6 0 1 0 -9.2 0M1474.0 1640.5a4.6 4.6 0 1 0 9.2 0a4.6 4.6 0 1 0 -9.2 0M1500.0 1638.5a4.6 4.6 0 1 0 9.2 0a4.6 4.6 0 1 0 -9.2 0M1525.9 1631.0a4.6 4.6 0 1 0 9.2 0a4.6 4.6 0 1 0 -9.2 0M1551.8 1661.0a4.6 4.6 0 1 0 9.2 0a4.6 4.6 0 1 0 -9.2 0M1577.8 1664.0a4.6 4.6 0 1 0 9.2 0a4.6 4.6 0 1 0 -9.2 0M1603.7 1664.0a4.6 4.6 0 1 0 9.2 0a4.6 4.6 0 1 0 -9.2 0M1629.6 1666.0a4.6 4.6 0 1 0 9.2 0a4.6 4.6 0 1 0 -9.2 0M1655.6 1672.0a4.6 4.6 0 1 0 9.2 0a4.6 4.6 0 1 0 -9.2 0M1681.5 1652.5a4.6 4.6 0 1 0 9.2 0a4.6 4.6 0 1 0 -9.2 0M1707.4 1672.0a4.6 4.6 0 1 0 9.2 0a4.6 4.6 0 1 0 -9.2 0M1733.3 1663.5a4.6 4.6 0 1 0 9.2 0a4.6 4.6 0 1 0 -9.2 0M1759.3 1683.0a4.6 4.6 0 1 0 9.2 0a4.6 4.6 0 1 0 -9.2 0M1785.2 1670.0a4.6 4.6 0 1 0 9.2 0a4.6 4.6 0 1 0 -9.2 0M1811.1 1645.5a4.6 4.6 0 1 0 9.2 0a4.6 4.6 0 1 0 -9.2 0M1837.1 1680.5a4.6 4.6 0 1 0 9.2 0a4.6 4.6 0 1 0 -9.2 0M1863.0 1673.5a4.6 4.6 0 1 0 9.2 0a4.6 4.6 0 1 0 -9.2 0M1888.9 1663.5a4.6 4.6 0 1 0 9.2 0a4.6 4.6 0 1 0 -9.2 0M1914.9 1651.5a4.6 4.6 0 1 0 9.2 0a4.6 4.6 0 1 0 -9.2 0M1940.8 1675.5a4.6 4.6 0 1 0 9.2 0a4.6 4.6 0 1 0 -9.2 0M1966.7 1679.0a4.6 4.6 0 1 0 9.2 0a4.6 4.6 0 1 0 -9.2 0M1992.6 1633.5a4.6 4.6 0 1 0 9.2 0a4.6 4.6 0 1 0 -9.2 0M2018.6 1671.0a4.6 4.6 0 1 0 9.2 0a4.6 4.6 0 1 0 -9.2 0M2044.5 1668.5a4.6 4.6 0 1 0 9.2 0a4.6 4.6 0 1 0 -9.2 0M2070.4 1670.5a4.6 4.6 0 1 0 9.2 0a4.6 4.6 0 1 0 -9.2 0M2096.4 1657.0a4.6 4.6 0 1 0 9.2 0a4.6 4.6 0 1 0 -9.2 0M2122.3 1670.5a4.6 4.6 0 1 0 9.2 0a4.6 4.6 0 1 0 -9.2 0M2148.2 1665.0a4.6 4.6 0 1 0 9.2 0a4.6 4.6 0 1 0 -9.2 0M2174.2 1670.5a4.6 4.6 0 1 0 9.2 0a4.6 4.6 0 1 0 -9.2 0M2200.1 1692.5a4.6 4.6 0 1 0 9.2 0a4.6 4.6 0 1 0 -9.2 0M2226.0 1685.5a4.6 4.6 0 1 0 9.2 0a4.6 4.6 0 1 0 -9.2 0M2251.9 1691.5a4.6 4.6 0 1 0 9.2 0a4.6 4.6 0 1 0 -9.2 0M2277.9 1692.0a4.6 4.6 0 1 0 9.2 0a4.6 4.6 0 1 0 -9.2 0M2303.8 1692.5a4.6 4.6 0 1 0 9.2 0a4.6 4.6 0 1 0 -9.2 0M2329.7 1688.0a4.6 4.6 0 1 0 9.2 0a4.6 4.6 0 1 0 -9.2 0M2355.7 1691.5a4.6 4.6 0 1 0 9.2 0a4.6 4.6 0 1 0 -9.2 0M2381.6 1678.5a4.6 4.6 0 1 0 9.2 0a4.6 4.6 0 1 0 -9.2 0M2407.5 1702.0a4.6 4.6 0 1 0 9.2 0a4.6 4.6 0 1 0 -9.2 0M2433.5 1686.5a4.6 4.6 0 1 0 9.2 0a4.6 4.6 0 1 0 -9.2 0M2459.4 1683.5a4.6 4.6 0 1 0 9.2 0a4.6 4.6 0 1 0 -9.2 0M2485.3 1672.5a4.6 4.6 0 1 0 9.2 0a4.6 4.6 0 1 0 -9.2 0M2511.2 1689.5a4.6 4.6 0 1 0 9.2 0a4.6 4.6 0 1 0 -9.2 0M2537.2 1481.5a4.6 4.6 0 1 0 9.2 0a4.6 4.6 0 1 0 -9.2 0M2563.1 1495.0a4.6 4.6 0 1 0 9.2 0a4.6 4.6 0 1 0 -9.2 0M2589.0 1496.5a4.6 4.6 0 1 0 9.2 0a4.6 4.6 0 1 0 -9.2 0M2615.0 1489.0a4.6 4.6 0 1 0 9.2 0a4.6 4.6 0 1 0 -9.2 0M2640.9 1488.0a4.6 4.6 0 1 0 9.2 0a4.6 4.6 0 1 0 -9.2 0M2666.8 1481.5a4.6 4.6 0 1 0 9.2 0a4.6 4.6 0 1 0 -9.2 0M2692.8 1483.5a4.6 4.6 0 1 0 9.2 0a4.6 4.6 0 1 0 -9.2 0M2718.7 1470.0a4.6 4.6 0 1 0 9.2 0a4.6 4.6 0 1 0 -9.2 0M2744.6 1450.0a4.6 4.6 0 1 0 9.2 0a4.6 4.6 0 1 0 -9.2 0M2770.5 1451.5a4.6 4.6 0 1 0 9.2 0a4.6 4.6 0 1 0 -9.2 0M2796.5 1461.5a4.6 4.6 0 1 0 9.2 0a4.6 4.6 0 1 0 -9.2 0M2822.4 1487.5a4.6 4.6 0 1 0 9.2 0a4.6 4.6 0 1 0 -9.2 0M2848.3 1469.5a4.6 4.6 0 1 0 9.2 0a4.6 4.6 0 1 0 -9.2 0M2874.3 1595.5a4.6 4.6 0 1 0 9.2 0a4.6 4.6 0 1 0 -9.2 0M2900.2 1668.0a4.6 4.6 0 1 0 9.2 0a4.6 4.6 0 1 0 -9.2 0M2926.1 1664.5a4.6 4.6 0 1 0 9.2 0a4.6 4.6 0 1 0 -9.2 0M2952.1 1670.0a4.6 4.6 0 1 0 9.2 0a4.6 4.6 0 1 0 -9.2 0M2978.0 1665.0a4.6 4.6 0 1 0 9.2 0a4.6 4.6 0 1 0 -9.2 0M3003.9 1666.5a4.6 4.6 0 1 0 9.2 0a4.6 4.6 0 1 0 -9.2 0M3029.8 1661.0a4.6 4.6 0 1 0 9.2 0a4.6 4.6 0 1 0 -9.2 0M3055.8 1672.5a4.6 4.6 0 1 0 9.2 0a4.6 4.6 0 1 0 -9.2 0M3081.7 1672.5a4.6 4.6 0 1 0 9.2 0a4.6 4.6 0 1 0 -9.2 0M3107.6 1675.0a4.6 4.6 0 1 0 9.2 0a4.6 4.6 0 1 0 -9.2 0M3133.6 1690.0a4.6 4.6 0 1 0 9.2 0a4.6 4.6 0 1 0 -9.2 0M3159.5 1675.5a4.6 4.6 0 1 0 9.2 0a4.6 4.6 0 1 0 -9.2 0M3185.4 1660.5a4.6 4.6 0 1 0 9.2 0a4.6 4.6 0 1 0 -9.2 0M3211.3 1663.0a4.6 4.6 0 1 0 9.2 0a4.6 4.6 0 1 0 -9.2 0M3237.3 1667.0a4.6 4.6 0 1 0 9.2 0a4.6 4.6 0 1 0 -9.2 0M3263.2 1761.5a4.6 4.6 0 1 0 9.2 0a4.6 4.6 0 1 0 -9.2 0M3289.1 1773.5a4.6 4.6 0 1 0 9.2 0a4.6 4.6 0 1 0 -9.2 0M3315.1 1763.0a4.6 4.6 0 1 0 9.2 0a4.6 4.6 0 1 0 -9.2 0M3341.0 1749.5a4.6 4.6 0 1 0 9.2 0a4.6 4.6 0 1 0 -9.2 0M3366.9 1759.0a4.6 4.6 0 1 0 9.2 0a4.6 4.6 0 1 0 -9.2 0M3392.9 1757.0a4.6 4.6 0 1 0 9.2 0a4.6 4.6 0 1 0 -9.2 0M3418.8 1752.5a4.6 4.6 0 1 0 9.2 0a4.6 4.6 0 1 0 -9.2 0M3444.7 1766.5a4.6 4.6 0 1 0 9.2 0a4.6 4.6 0 1 0 -9.2 0M3470.7 1753.0a4.6 4.6 0 1 0 9.2 0a4.6 4.6 0 1 0 -9.2 0M3496.6 1637.0a4.6 4.6 0 1 0 9.2 0a4.6 4.6 0 1 0 -9.2 0M3522.5 1563.0a4.6 4.6 0 1 0 9.2 0a4.6 4.6 0 1 0 -9.2 0M3548.4 1548.0a4.6 4.6 0 1 0 9.2 0a4.6 4.6 0 1 0 -9.2 0M3574.4 1545.0a4.6 4.6 0 1 0 9.2 0a4.6 4.6 0 1 0 -9.2 0M3600.3 1542.5a4.6 4.6 0 1 0 9.2 0a4.6 4.6 0 1 0 -9.2 0M3626.2 1543.0a4.6 4.6 0 1 0 9.2 0a4.6 4.6 0 1 0 -9.2 0M3652.2 1545.5a4.6 4.6 0 1 0 9.2 0a4.6 4.6 0 1 0 -9.2 0M3678.1 1550.5a4.6 4.6 0 1 0 9.2 0a4.6 4.6 0 1 0 -9.2 0M3704.0 1550.5a4.6 4.6 0 1 0 9.2 0a4.6 4.6 0 1 0 -9.2 0M3730.0 1625.0a4.6 4.6 0 1 0 9.2 0a4.6 4.6 0 1 0 -9.2 0M3755.9 1770.0a4.6 4.6 0 1 0 9.2 0a4.6 4.6 0 1 0 -9.2 0M3781.8 1769.0a4.6 4.6 0 1 0 9.2 0a4.6 4.6 0 1 0 -9.2 0M3807.7 1768.0a4.6 4.6 0 1 0 9.2 0a4.6 4.6 0 1 0 -9.2 0M3833.7 1769.0a4.6 4.6 0 1 0 9.2 0a4.6 4.6 0 1 0 -9.2 0M3859.6 1768.0a4.6 4.6 0 1 0 9.2 0a4.6 4.6 0 1 0 -9.2 0M3885.5 1768.5a4.6 4.6 0 1 0 9.2 0a4.6 4.6 0 1 0 -9.2 0M3911.5 1773.0a4.6 4.6 0 1 0 9.2 0a4.6 4.6 0 1 0 -9.2 0M3937.4 1775.5a4.6 4.6 0 1 0 9.2 0a4.6 4.6 0 1 0 -9.2 0M3963.3 1772.5a4.6 4.6 0 1 0 9.2 0a4.6 4.6 0 1 0 -9.2 0M3989.2 1772.0a4.6 4.6 0 1 0 9.2 0a4.6 4.6 0 1 0 -9.2 0M4015.2 1766.0a4.6 4.6 0 1 0 9.2 0a4.6 4.6 0 1 0 -9.2 0M4041.1 1754.0a4.6 4.6 0 1 0 9.2 0a4.6 4.6 0 1 0 -9.2 0M4067.0 1749.0a4.6 4.6 0 1 0 9.2 0a4.6 4.6 0 1 0 -9.2 0M4093.0 1746.5a4.6 4.6 0 1 0 9.2 0a4.6 4.6 0 1 0 -9.2 0M4118.9 1735.0a4.6 4.6 0 1 0 9.2 0a4.6 4.6 0 1 0 -9.2 0M4144.8 1736.0a4.6 4.6 0 1 0 9.2 0a4.6 4.6 0 1 0 -9.2 0M4170.8 1720.0a4.6 4.6 0 1 0 9.2 0a4.6 4.6 0 1 0 -9.2 0M4196.7 1740.0a4.6 4.6 0 1 0 9.2 0a4.6 4.6 0 1 0 -9.2 0M4222.6 1740.0a4.6 4.6 0 1 0 9.2 0a4.6 4.6 0 1 0 -9.2 0M4248.5 1746.0a4.6 4.6 0 1 0 9.2 0a4.6 4.6 0 1 0 -9.2 0M4274.5 1750.5a4.6 4.6 0 1 0 9.2 0a4.6 4.6 0 1 0 -9.2 0M4300.4 1716.5a4.6 4.6 0 1 0 9.2 0a4.6 4.6 0 1 0 -9.2 0M4326.3 1746.0a4.6 4.6 0 1 0 9.2 0a4.6 4.6 0 1 0 -9.2 0M4352.3 1751.0a4.6 4.6 0 1 0 9.2 0a4.6 4.6 0 1 0 -9.2 0M4378.2 1749.0a4.6 4.6 0 1 0 9.2 0a4.6 4.6 0 1 0 -9.2 0M4404.1 1748.0a4.6 4.6 0 1 0 9.2 0a4.6 4.6 0 1 0 -9.2 0M4430.1 1725.5a4.6 4.6 0 1 0 9.2 0a4.6 4.6 0 1 0 -9.2 0M4456.0 1746.0a4.6 4.6 0 1 0 9.2 0a4.6 4.6 0 1 0 -9.2 0M4481.9 1746.0a4.6 4.6 0 1 0 9.2 0a4.6 4.6 0 1 0 -9.2 0M4507.8 1752.0a4.6 4.6 0 1 0 9.2 0a4.6 4.6 0 1 0 -9.2 0M4533.8 1760.5a4.6 4.6 0 1 0 9.2 0a4.6 4.6 0 1 0 -9.2 0M4559.7 1811.5a4.6 4.6 0 1 0 9.2 0a4.6 4.6 0 1 0 -9.2 0" fill="#8ad5fb"/><polyline points="234.0,1848.5 259.9,1841.0 285.9,1841.0 311.8,1841.0 337.7,1841.0 363.6,1841.0 389.6,1841.0 415.5,1841.0 441.4,1841.0 467.4,1841.0 493.3,1841.0 519.2,1841.0 545.2,1841.0 571.1,1841.0 597.0,1841.0 623.0,1841.0 648.9,1841.0 674.8,1841.0 700.7,1841.0 726.7,1841.0 752.6,1841.0 778.5,1841.0 804.5,1841.0 830.4,1841.0 856.3,1841.0 882.2,1841.0 908.2,1841.0 934.1,1841.0 960.0,1841.0 986.0,1841.0 1011.9,1841.0 1037.8,1841.0 1063.8,1841.0 1089.7,1841.0 1115.6,1841.0 1141.5,1841.0 1167.5,1841.0 1193.4,1841.0 1219.3,1842.5 1245.3,1842.5 1271.2,1842.5 1297.1,1842.5 1323.1,1842.5 1349.0,1842.5 1374.9,1842.5 1400.8,1842.5 1426.8,1842.5 1452.7,1837.5 1478.6,1837.5 1504.6,1837.5 1530.5,1837.5 1556.4,1837.5 1582.4,1837.5 1608.3,1837.5 1634.2,1837.5 1660.2,1837.5 1686.1,1837.5 1712.0,1837.5 1737.9,1837.5 1763.9,1837.5 1789.8,1837.5 1815.7,1837.5 1841.7,1837.5 1867.6,1837.5 1893.5,1837.5 1919.5,1837.5 1945.4,1837.5 1971.3,1837.5 1997.2,1837.5 2023.2,1837.5 2049.1,1837.5 2075.0,1837.5 2101.0,1837.5 2126.9,1837.5 2152.8,1837.5 2178.8,1837.5 2204.7,1835.0 2230.6,1835.0 2256.5,1835.0 2282.5,1835.0 2308.4,1835.0 2334.3,1835.0 2360.3,1835.0 2386.2,1835.0 2412.1,1835.0 2438.1,1835.0 2464.0,1835.0 2489.9,1835.0 2515.8,1835.0 2541.8,1835.0 2567.7,1835.0 2593.6,1835.0 2619.6,1835.0 2645.5,1835.0 2671.4,1835.0 2697.3,1835.0 2723.3,1835.0 2749.2,1835.0 2775.1,1835.0 2801.1,1835.0 2827.0,1835.0 2852.9,1835.0 2878.9,1841.0 2904.8,1841.0 2930.7,1841.0 2956.7,1841.0 2982.6,1841.0 3008.5,1841.0 3034.4,1841.0 3060.4,1841.0 3086.3,1841.0 3112.2,1841.0 3138.2,1841.0 3164.1,1841.0 3190.0,1841.0 3215.9,1841.0 3241.9,1841.0 3267.8,1841.0 3293.7,1841.0 3319.7,1841.0 3345.6,1841.0 3371.5,1841.0 3397.5,1841.0 3423.4,1841.0 3449.3,1841.0 3475.2,1841.0 3501.2,1841.0 3527.1,1841.0 3553.0,1841.0 3579.0,1841.0 3604.9,1841.0 3630.8,1841.0 3656.8,1841.0 3682.7,1841.0 3708.6,1841.0 3734.6,1841.0 3760.5,1841.0 3786.4,1841.0 3812.3,1841.0 3838.3,1841.0 3864.2,1841.0 3890.1,1841.0 3916.1,1841.0 3942.0,1841.0 3967.9,1841.0 3993.8,1841.0 4019.8,1841.0 4045.7,1841.0 4071.6,1841.0 4097.6,1841.0 4123.5,1841.0 4149.4,1841.0 4175.4,1841.0 4201.3,1841.0 4227.2,1841.0 4253.1,1841.0 4279.1,1841.0 4305.0,1841.0 4330.9,1841.0 4356.9,1841.0 4382.8,1841.0 4408.7,1841.0 4434.7,1841.0 4460.6,1841.0 4486.5,1841.0 4512.4,1841.0 4538.4,1841.0 4564.3,1844.0" fill="none" stroke="#f2da4b" stroke-width="4.2" stroke-linejoin="round"/><path d="M229.4 1848.5a4.6 4.6 0 1 0 9.2 0a4.6 4.6 0 1 0 -9.2 0M255.3 1841.0a4.6 4.6 0 1 0 9.2 0a4.6 4.6 0 1 0 -9.2 0M281.3 1841.0a4.6 4.6 0 1 0 9.2 0a4.6 4.6 0 1 0 -9.2 0M307.2 1841.0a4.6 4.6 0 1 0 9.2 0a4.6 4.6 0 1 0 -9.2 0M333.1 1841.0a4.6 4.6 0 1 0 9.2 0a4.6 4.6 0 1 0 -9.2 0M359.0 1841.0a4.6 4.6 0 1 0 9.2 0a4.6 4.6 0 1 0 -9.2 0M385.0 1841.0a4.6 4.6 0 1 0 9.2 0a4.6 4.6 0 1 0 -9.2 0M410.9 1841.0a4.6 4.6 0 1 0 9.2 0a4.6 4.6 0 1 0 -9.2 0M436.8 1841.0a4.6 4.6 0 1 0 9.2 0a4.6 4.6 0 1 0 -9.2 0M462.8 1841.0a4.6 4.6 0 1 0 9.2 0a4.6 4.6 0 1 0 -9.2 0M488.7 1841.0a4.6 4.6 0 1 0 9.2 0a4.6 4.6 0 1 0 -9.2 0M514.6 1841.0a4.6 4.6 0 1 0 9.2 0a4.6 4.6 0 1 0 -9.2 0M540.6 1841.0a4.6 4.6 0 1 0 9.2 0a4.6 4.6 0 1 0 -9.2 0M566.5 1841.0a4.6 4.6 0 1 0 9.2 0a4.6 4.6 0 1 0 -9.2 0M592.4 1841.0a4.6 4.6 0 1 0 9.2 0a4.6 4.6 0 1 0 -9.2 0M618.4 1841.0a4.6 4.6 0 1 0 9.2 0a4.6 4.6 0 1 0 -9.2 0M644.3 1841.0a4.6 4.6 0 1 0 9.2 0a4.6 4.6 0 1 0 -9.2 0M670.2 1841.0a4.6 4.6 0 1 0 9.2 0a4.6 4.6 0 1 0 -9.2 0M696.1 1841.0a4.6 4.6 0 1 0 9.2 0a4.6 4.6 0 1 0 -9.2 0M722.1 1841.0a4.6 4.6 0 1 0 9.2 0a4.6 4.6 0 1 0 -9.2 0M748.0 1841.0a4.6 4.6 0 1 0 9.2 0a4.6 4.6 0 1 0 -9.2 0M773.9 1841.0a4.6 4.6 0 1 0 9.2 0a4.6 4.6 0 1 0 -9.2 0M799.9 1841.0a4.6 4.6 0 1 0 9.2 0a4.6 4.6 0 1 0 -9.2 0M825.8 1841.0a4.6 4.6 0 1 0 9.2 0a4.6 4.6 0 1 0 -9.2 0M851.7 1841.0a4.6 4.6 0 1 0 9.2 0a4.6 4.6 0 1 0 -9.2 0M877.6 1841.0a4.6 4.6 0 1 0 9.2 0a4.6 4.6 0 1 0 -9.2 0M903.6 1841.0a4.6 4.6 0 1 0 9.2 0a4.6 4.6 0 1 0 -9.2 0M929.5 1841.0a4.6 4.6 0 1 0 9.2 0a4.6 4.6 0 1 0 -9.2 0M955.4 1841.0a4.6 4.6 0 1 0 9.2 0a4.6 4.6 0 1 0 -9.2 0M981.4 1841.0a4.6 4.6 0 1 0 9.2 0a4.6 4.6 0 1 0 -9.2 0M1007.3 1841.0a4.6 4.6 0 1 0 9.2 0a4.6 4.6 0 1 0 -9.2 0M1033.2 1841.0a4.6 4.6 0 1 0 9.2 0a4.6 4.6 0 1 0 -9.2 0M1059.2 1841.0a4.6 4.6 0 1 0 9.2 0a4.6 4.6 0 1 0 -9.2 0M1085.1 1841.0a4.6 4.6 0 1 0 9.2 0a4.6 4.6 0 1 0 -9.2 0M1111.0 1841.0a4.6 4.6 0 1 0 9.2 0a4.6 4.6 0 1 0 -9.2 0M1137.0 1841.0a4.6 4.6 0 1 0 9.2 0a4.6 4.6 0 1 0 -9.2 0M1162.9 1841.0a4.6 4.6 0 1 0 9.2 0a4.6 4.6 0 1 0 -9.2 0M1188.8 1841.0a4.6 4.6 0 1 0 9.2 0a4.6 4.6 0 1 0 -9.2 0M1214.7 1842.5a4.6 4.6 0 1 0 9.2 0a4.6 4.6 0 1 0 -9.2 0M1240.7 1842.5a4.6 4.6 0 1 0 9.2 0a4.6 4.6 0 1 0 -9.2 0M1266.6 1842.5a4.6 4.6 0 1 0 9.2 0a4.6 4.6 0 1 0 -9.2 0M1292.5 1842.5a4.6 4.6 0 1 0 9.2 0a4.6 4.6 0 1 0 -9.2 0M1318.5 1842.5a4.6 4.6 0 1 0 9.2 0a4.6 4.6 0 1 0 -9.2 0M1344.4 1842.5a4.6 4.6 0 1 0 9.2 0a4.6 4.6 0 1 0 -9.2 0M1370.3 1842.5a4.6 4.6 0 1 0 9.2 0a4.6 4.6 0 1 0 -9.2 0M1396.2 1842.5a4.6 4.6 0 1 0 9.2 0a4.6 4.6 0 1 0 -9.2 0M1422.2 1842.5a4.6 4.6 0 1 0 9.2 0a4.6 4.6 0 1 0 -9.2 0M1448.1 1837.5a4.6 4.6 0 1 0 9.2 0a4.6 4.6 0 1 0 -9.2 0M1474.0 1837.5a4.6 4.6 0 1 0 9.2 0a4.6 4.6 0 1 0 -9.2 0M1500.0 1837.5a4.6 4.6 0 1 0 9.2 0a4.6 4.6 0 1 0 -9.2 0M1525.9 1837.5a4.6 4.6 0 1 0 9.2 0a4.6 4.6 0 1 0 -9.2 0M1551.8 1837.5a4.6 4.6 0 1 0 9.2 0a4.6 4.6 0 1 0 -9.2 0M1577.8 1837.5a4.6 4.6 0 1 0 9.2 0a4.6 4.6 0 1 0 -9.2 0M1603.7 1837.5a4.6 4.6 0 1 0 9.2 0a4.6 4.6 0 1 0 -9.2 0M1629.6 1837.5a4.6 4.6 0 1 0 9.2 0a4.6 4.6 0 1 0 -9.2 0M1655.6 1837.5a4.6 4.6 0 1 0 9.2 0a4.6 4.6 0 1 0 -9.2 0M1681.5 1837.5a4.6 4.6 0 1 0 9.2 0a4.6 4.6 0 1 0 -9.2 0M1707.4 1837.5a4.6 4.6 0 1 0 9.2 0a4.6 4.6 0 1 0 -9.2 0M1733.3 1837.5a4.6 4.6 0 1 0 9.2 0a4.6 4.6 0 1 0 -9.2 0M1759.3 1837.5a4.6 4.6 0 1 0 9.2 0a4.6 4.6 0 1 0 -9.2 0M1785.2 1837.5a4.6 4.6 0 1 0 9.2 0a4.6 4.6 0 1 0 -9.2 0M1811.1 1837.5a4.6 4.6 0 1 0 9.2 0a4.6 4.6 0 1 0 -9.2 0M1837.1 1837.5a4.6 4.6 0 1 0 9.2 0a4.6 4.6 0 1 0 -9.2 0M1863.0 1837.5a4.6 4.6 0 1 0 9.2 0a4.6 4.6 0 1 0 -9.2 0M1888.9 1837.5a4.6 4.6 0 1 0 9.2 0a4.6 4.6 0 1 0 -9.2 0M1914.9 1837.5a4.6 4.6 0 1 0 9.2 0a4.6 4.6 0 1 0 -9.2 0M1940.8 1837.5a4.6 4.6 0 1 0 9.2 0a4.6 4.6 0 1 0 -9.2 0M1966.7 1837.5a4.6 4.6 0 1 0 9.2 0a4.6 4.6 0 1 0 -9.2 0M1992.6 1837.5a4.6 4.6 0 1 0 9.2 0a4.6 4.6 0 1 0 -9.2 0M2018.6 1837.5a4.6 4.6 0 1 0 9.2 0a4.6 4.6 0 1 0 -9.2 0M2044.5 1837.5a4.6 4.6 0 1 0 9.2 0a4.6 4.6 0 1 0 -9.2 0M2070.4 1837.5a4.6 4.6 0 1 0 9.2 0a4.6 4.6 0 1 0 -9.2 0M2096.4 1837.5a4.6 4.6 0 1 0 9.2 0a4.6 4.6 0 1 0 -9.2 0M2122.3 1837.5a4.6 4.6 0 1 0 9.2 0a4.6 4.6 0 1 0 -9.2 0M2148.2 1837.5a4.6 4.6 0 1 0 9.2 0a4.6 4.6 0 1 0 -9.2 0M2174.2 1837.5a4.6 4.6 0 1 0 9.2 0a4.6 4.6 0 1 0 -9.2 0M2200.1 1835.0a4.6 4.6 0 1 0 9.2 0a4.6 4.6 0 1 0 -9.2 0M2226.0 1835.0a4.6 4.6 0 1 0 9.2 0a4.6 4.6 0 1 0 -9.2 0M2251.9 1835.0a4.6 4.6 0 1 0 9.2 0a4.6 4.6 0 1 0 -9.2 0M2277.9 1835.0a4.6 4.6 0 1 0 9.2 0a4.6 4.6 0 1 0 -9.2 0M2303.8 1835.0a4.6 4.6 0 1 0 9.2 0a4.6 4.6 0 1 0 -9.2 0M2329.7 1835.0a4.6 4.6 0 1 0 9.2 0a4.6 4.6 0 1 0 -9.2 0M2355.7 1835.0a4.6 4.6 0 1 0 9.2 0a4.6 4.6 0 1 0 -9.2 0M2381.6 1835.0a4.6 4.6 0 1 0 9.2 0a4.6 4.6 0 1 0 -9.2 0M2407.5 1835.0a4.6 4.6 0 1 0 9.2 0a4.6 4.6 0 1 0 -9.2 0M2433.5 1835.0a4.6 4.6 0 1 0 9.2 0a4.6 4.6 0 1 0 -9.2 0M2459.4 1835.0a4.6 4.6 0 1 0 9.2 0a4.6 4.6 0 1 0 -9.2 0M2485.3 1835.0a4.6 4.6 0 1 0 9.2 0a4.6 4.6 0 1 0 -9.2 0M2511.2 1835.0a4.6 4.6 0 1 0 9.2 0a4.6 4.6 0 1 0 -9.2 0M2537.2 1835.0a4.6 4.6 0 1 0 9.2 0a4.6 4.6 0 1 0 -9.2 0M2563.1 1835.0a4.6 4.6 0 1 0 9.2 0a4.6 4.6 0 1 0 -9.2 0M2589.0 1835.0a4.6 4.6 0 1 0 9.2 0a4.6 4.6 0 1 0 -9.2 0M2615.0 1835.0a4.6 4.6 0 1 0 9.2 0a4.6 4.6 0 1 0 -9.2 0M2640.9 1835.0a4.6 4.6 0 1 0 9.2 0a4.6 4.6 0 1 0 -9.2 0M2666.8 1835.0a4.6 4.6 0 1 0 9.2 0a4.6 4.6 0 1 0 -9.2 0M2692.8 1835.0a4.6 4.6 0 1 0 9.2 0a4.6 4.6 0 1 0 -9.2 0M2718.7 1835.0a4.6 4.6 0 1 0 9.2 0a4.6 4.6 0 1 0 -9.2 0M2744.6 1835.0a4.6 4.6 0 1 0 9.2 0a4.6 4.6 0 1 0 -9.2 0M2770.5 1835.0a4.6 4.6 0 1 0 9.2 0a4.6 4.6 0 1 0 -9.2 0M2796.5 1835.0a4.6 4.6 0 1 0 9.2 0a4.6 4.6 0 1 0 -9.2 0M2822.4 1835.0a4.6 4.6 0 1 0 9.2 0a4.6 4.6 0 1 0 -9.2 0M2848.3 1835.0a4.6 4.6 0 1 0 9.2 0a4.6 4.6 0 1 0 -9.2 0M2874.3 1841.0a4.6 4.6 0 1 0 9.2 0a4.6 4.6 0 1 0 -9.2 0M2900.2 1841.0a4.6 4.6 0 1 0 9.2 0a4.6 4.6 0 1 0 -9.2 0M2926.1 1841.0a4.6 4.6 0 1 0 9.2 0a4.6 4.6 0 1 0 -9.2 0M2952.1 1841.0a4.6 4.6 0 1 0 9.2 0a4.6 4.6 0 1 0 -9.2 0M2978.0 1841.0a4.6 4.6 0 1 0 9.2 0a4.6 4.6 0 1 0 -9.2 0M3003.9 1841.0a4.6 4.6 0 1 0 9.2 0a4.6 4.6 0 1 0 -9.2 0M3029.8 1841.0a4.6 4.6 0 1 0 9.2 0a4.6 4.6 0 1 0 -9.2 0M3055.8 1841.0a4.6 4.6 0 1 0 9.2 0a4.6 4.6 0 1 0 -9.2 0M3081.7 1841.0a4.6 4.6 0 1 0 9.2 0a4.6 4.6 0 1 0 -9.2 0M3107.6 1841.0a4.6 4.6 0 1 0 9.2 0a4.6 4.6 0 1 0 -9.2 0M3133.6 1841.0a4.6 4.6 0 1 0 9.2 0a4.6 4.6 0 1 0 -9.2 0M3159.5 1841.0a4.6 4.6 0 1 0 9.2 0a4.6 4.6 0 1 0 -9.2 0M3185.4 1841.0a4.6 4.6 0 1 0 9.2 0a4.6 4.6 0 1 0 -9.2 0M3211.3 1841.0a4.6 4.6 0 1 0 9.2 0a4.6 4.6 0 1 0 -9.2 0M3237.3 1841.0a4.6 4.6 0 1 0 9.2 0a4.6 4.6 0 1 0 -9.2 0M3263.2 1841.0a4.6 4.6 0 1 0 9.2 0a4.6 4.6 0 1 0 -9.2 0M3289.1 1841.0a4.6 4.6 0 1 0 9.2 0a4.6 4.6 0 1 0 -9.2 0M3315.1 1841.0a4.6 4.6 0 1 0 9.2 0a4.6 4.6 0 1 0 -9.2 0M3341.0 1841.0a4.6 4.6 0 1 0 9.2 0a4.6 4.6 0 1 0 -9.2 0M3366.9 1841.0a4.6 4.6 0 1 0 9.2 0a4.6 4.6 0 1 0 -9.2 0M3392.9 1841.0a4.6 4.6 0 1 0 9.2 0a4.6 4.6 0 1 0 -9.2 0M3418.8 1841.0a4.6 4.6 0 1 0 9.2 0a4.6 4.6 0 1 0 -9.2 0M3444.7 1841.0a4.6 4.6 0 1 0 9.2 0a4.6 4.6 0 1 0 -9.2 0M3470.7 1841.0a4.6 4.6 0 1 0 9.2 0a4.6 4.6 0 1 0 -9.2 0M3496.6 1841.0a4.6 4.6 0 1 0 9.2 0a4.6 4.6 0 1 0 -9.2 0M3522.5 1841.0a4.6 4.6 0 1 0 9.2 0a4.6 4.6 0 1 0 -9.2 0M3548.4 1841.0a4.6 4.6 0 1 0 9.2 0a4.6 4.6 0 1 0 -9.2 0M3574.4 1841.0a4.6 4.6 0 1 0 9.2 0a4.6 4.6 0 1 0 -9.2 0M3600.3 1841.0a4.6 4.6 0 1 0 9.2 0a4.6 4.6 0 1 0 -9.2 0M3626.2 1841.0a4.6 4.6 0 1 0 9.2 0a4.6 4.6 0 1 0 -9.2 0M3652.2 1841.0a4.6 4.6 0 1 0 9.2 0a4.6 4.6 0 1 0 -9.2 0M3678.1 1841.0a4.6 4.6 0 1 0 9.2 0a4.6 4.6 0 1 0 -9.2 0M3704.0 1841.0a4.6 4.6 0 1 0 9.2 0a4.6 4.6 0 1 0 -9.2 0M3730.0 1841.0a4.6 4.6 0 1 0 9.2 0a4.6 4.6 0 1 0 -9.2 0M3755.9 1841.0a4.6 4.6 0 1 0 9.2 0a4.6 4.6 0 1 0 -9.2 0M3781.8 1841.0a4.6 4.6 0 1 0 9.2 0a4.6 4.6 0 1 0 -9.2 0M3807.7 1841.0a4.6 4.6 0 1 0 9.2 0a4.6 4.6 0 1 0 -9.2 0M3833.7 1841.0a4.6 4.6 0 1 0 9.2 0a4.6 4.6 0 1 0 -9.2 0M3859.6 1841.0a4.6 4.6 0 1 0 9.2 0a4.6 4.6 0 1 0 -9.2 0M3885.5 1841.0a4.6 4.6 0 1 0 9.2 0a4.6 4.6 0 1 0 -9.2 0M3911.5 1841.0a4.6 4.6 0 1 0 9.2 0a4.6 4.6 0 1 0 -9.2 0M3937.4 1841.0a4.6 4.6 0 1 0 9.2 0a4.6 4.6 0 1 0 -9.2 0M3963.3 1841.0a4.6 4.6 0 1 0 9.2 0a4.6 4.6 0 1 0 -9.2 0M3989.2 1841.0a4.6 4.6 0 1 0 9.2 0a4.6 4.6 0 1 0 -9.2 0M4015.2 1841.0a4.6 4.6 0 1 0 9.2 0a4.6 4.6 0 1 0 -9.2 0M4041.1 1841.0a4.6 4.6 0 1 0 9.2 0a4.6 4.6 0 1 0 -9.2 0M4067.0 1841.0a4.6 4.6 0 1 0 9.2 0a4.6 4.6 0 1 0 -9.2 0M4093.0 1841.0a4.6 4.6 0 1 0 9.2 0a4.6 4.6 0 1 0 -9.2 0M4118.9 1841.0a4.6 4.6 0 1 0 9.2 0a4.6 4.6 0 1 0 -9.2 0M4144.8 1841.0a4.6 4.6 0 1 0 9.2 0a4.6 4.6 0 1 0 -9.2 0M4170.8 1841.0a4.6 4.6 0 1 0 9.2 0a4.6 4.6 0 1 0 -9.2 0M4196.7 1841.0a4.6 4.6 0 1 0 9.2 0a4.6 4.6 0 1 0 -9.2 0M4222.6 1841.0a4.6 4.6 0 1 0 9.2 0a4.6 4.6 0 1 0 -9.2 0M4248.5 1841.0a4.6 4.6 0 1 0 9.2 0a4.6 4.6 0 1 0 -9.2 0M4274.5 1841.0a4.6 4.6 0 1 0 9.2 0a4.6 4.6 0 1 0 -9.2 0M4300.4 1841.0a4.6 4.6 0 1 0 9.2 0a4.6 4.6 0 1 0 -9.2 0M4326.3 1841.0a4.6 4.6 0 1 0 9.2 0a4.6 4.6 0 1 0 -9.2 0M4352.3 1841.0a4.6 4.6 0 1 0 9.2 0a4.6 4.6 0 1 0 -9.2 0M4378.2 1841.0a4.6 4.6 0 1 0 9.2 0a4.6 4.6 0 1 0 -9.2 0M4404.1 1841.0a4.6 4.6 0 1 0 9.2 0a4.6 4.6 0 1 0 -9.2 0M4430.1 1841.0a4.6 4.6 0 1 0 9.2 0a4.6 4.6 0 1 0 -9.2 0M4456.0 1841.0a4.6 4.6 0 1 0 9.2 0a4.6 4.6 0 1 0 -9.2 0M4481.9 1841.0a4.6 4.6 0 1 0 9.2 0a4.6 4.6 0 1 0 -9.2 0M4507.8 1841.0a4.6 4.6 0 1 0 9.2 0a4.6 4.6 0 1 0 -9.2 0M4533.8 1841.0a4.6 4.6 0 1 0 9.2 0a4.6 4.6 0 1 0 -9.2 0M4559.7 1844.0a4.6 4.6 0 1 0 9.2 0a4.6 4.6 0 1 0 -9.2 0" fill="#f2da4b"/><polyline points="234.0,1848.5 259.9,1825.0 285.9,1822.5 311.8,1821.5 337.7,1825.0 363.6,1816.5 389.6,1818.5 415.5,1824.0 441.4,1825.0 467.4,1826.5 493.3,1825.0 519.2,1821.5 545.2,1827.0 571.1,1825.0 597.0,1826.5 623.0,1827.5 648.9,1829.0 674.8,1831.0 700.7,1827.5 726.7,1828.5 752.6,1829.0 778.5,1828.0 804.5,1826.5 830.4,1826.0 856.3,1826.5 882.2,1811.0 908.2,1824.0 934.1,1826.5 960.0,1825.5 986.0,1825.5 1011.9,1826.0 1037.8,1824.0 1063.8,1823.5 1089.7,1824.0 1115.6,1824.5 1141.5,1819.5 1167.5,1819.5 1193.4,1825.5 1219.3,1802.5 1245.3,1766.5 1271.2,1785.5 1297.1,1799.0 1323.1,1815.0 1349.0,1811.0 1374.9,1809.0 1400.8,1790.0 1426.8,1785.0 1452.7,1760.0 1478.6,1764.5 1504.6,1761.5 1530.5,1751.5 1556.4,1778.0 1582.4,1786.0 1608.3,1782.5 1634.2,1784.0 1660.2,1782.5 1686.1,1782.0 1712.0,1787.0 1737.9,1783.5 1763.9,1790.5 1789.8,1786.5 1815.7,1750.5 1841.7,1788.0 1867.6,1782.0 1893.5,1775.0 1919.5,1763.5 1945.4,1788.0 1971.3,1786.5 1997.2,1753.0 2023.2,1788.0 2049.1,1789.0 2075.0,1788.5 2101.0,1775.0 2126.9,1787.5 2152.8,1787.5 2178.8,1789.0 2204.7,1800.0 2230.6,1793.5 2256.5,1799.0 2282.5,1799.0 2308.4,1803.5 2334.3,1799.0 2360.3,1802.5 2386.2,1791.0 2412.1,1804.5 2438.1,1790.0 2464.0,1790.0 2489.9,1780.0 2515.8,1795.0 2541.8,1589.0 2567.7,1599.0 2593.6,1602.5 2619.6,1601.5 2645.5,1593.5 2671.4,1596.5 2697.3,1595.0 2723.3,1585.5 2749.2,1582.5 2775.1,1566.5 2801.1,1582.0 2827.0,1602.5 2852.9,1580.0 2878.9,1674.5 2904.8,1725.0 2930.7,1723.0 2956.7,1727.0 2982.6,1720.5 3008.5,1719.5 3034.4,1713.0 3060.4,1724.5 3086.3,1726.0 3112.2,1729.5 3138.2,1744.5 3164.1,1728.0 3190.0,1713.0 3215.9,1717.5 3241.9,1721.0 3267.8,1813.0 3293.7,1824.0 3319.7,1816.5 3345.6,1803.0 3371.5,1814.5 3397.5,1813.0 3423.4,1809.0 3449.3,1822.0 3475.2,1810.0 3501.2,1819.5 3527.1,1817.5 3553.0,1809.5 3579.0,1803.5 3604.9,1801.5 3630.8,1797.5 3656.8,1804.5 3682.7,1806.5 3708.6,1810.0 3734.6,1819.0 3760.5,1822.5 3786.4,1823.5 3812.3,1823.0 3838.3,1823.5 3864.2,1823.5 3890.1,1822.5 3916.1,1825.0 3942.0,1825.0 3967.9,1825.0 3993.8,1823.5 4019.8,1823.5 4045.7,1820.5 4071.6,1820.0 4097.6,1823.0 4123.5,1821.5 4149.4,1822.5 4175.4,1811.5 4201.3,1821.5 4227.2,1821.5 4253.1,1820.5 4279.1,1824.0 4305.0,1789.0 4330.9,1820.5 4356.9,1826.0 4382.8,1823.0 4408.7,1824.0 4434.7,1811.0 4460.6,1824.5 4486.5,1822.0 4512.4,1824.0 4538.4,1828.0 4564.3,1841.0" fill="none" stroke="#7bb738" stroke-width="4.2" stroke-linejoin="round"/><path d="M229.4 1848.5a4.6 4.6 0 1 0 9.2 0a4.6 4.6 0 1 0 -9.2 0M255.3 1825.0a4.6 4.6 0 1 0 9.2 0a4.6 4.6 0 1 0 -9.2 0M281.3 1822.5a4.6 4.6 0 1 0 9.2 0a4.6 4.6 0 1 0 -9.2 0M307.2 1821.5a4.6 4.6 0 1 0 9.2 0a4.6 4.6 0 1 0 -9.2 0M333.1 1825.0a4.6 4.6 0 1 0 9.2 0a4.6 4.6 0 1 0 -9.2 0M359.0 1816.5a4.6 4.6 0 1 0 9.2 0a4.6 4.6 0 1 0 -9.2 0M385.0 1818.5a4.6 4.6 0 1 0 9.2 0a4.6 4.6 0 1 0 -9.2 0M410.9 1824.0a4.6 4.6 0 1 0 9.2 0a4.6 4.6 0 1 0 -9.2 0M436.8 1825.0a4.6 4.6 0 1 0 9.2 0a4.6 4.6 0 1 0 -9.2 0M462.8 1826.5a4.6 4.6 0 1 0 9.2 0a4.6 4.6 0 1 0 -9.2 0M488.7 1825.0a4.6 4.6 0 1 0 9.2 0a4.6 4.6 0 1 0 -9.2 0M514.6 1821.5a4.6 4.6 0 1 0 9.2 0a4.6 4.6 0 1 0 -9.2 0M540.6 1827.0a4.6 4.6 0 1 0 9.2 0a4.6 4.6 0 1 0 -9.2 0M566.5 1825.0a4.6 4.6 0 1 0 9.2 0a4.6 4.6 0 1 0 -9.2 0M592.4 1826.5a4.6 4.6 0 1 0 9.2 0a4.6 4.6 0 1 0 -9.2 0M618.4 1827.5a4.6 4.6 0 1 0 9.2 0a4.6 4.6 0 1 0 -9.2 0M644.3 1829.0a4.6 4.6 0 1 0 9.2 0a4.6 4.6 0 1 0 -9.2 0M670.2 1831.0a4.6 4.6 0 1 0 9.2 0a4.6 4.6 0 1 0 -9.2 0M696.1 1827.5a4.6 4.6 0 1 0 9.2 0a4.6 4.6 0 1 0 -9.2 0M722.1 1828.5a4.6 4.6 0 1 0 9.2 0a4.6 4.6 0 1 0 -9.2 0M748.0 1829.0a4.6 4.6 0 1 0 9.2 0a4.6 4.6 0 1 0 -9.2 0M773.9 1828.0a4.6 4.6 0 1 0 9.2 0a4.6 4.6 0 1 0 -9.2 0M799.9 1826.5a4.6 4.6 0 1 0 9.2 0a4.6 4.6 0 1 0 -9.2 0M825.8 1826.0a4.6 4.6 0 1 0 9.2 0a4.6 4.6 0 1 0 -9.2 0M851.7 1826.5a4.6 4.6 0 1 0 9.2 0a4.6 4.6 0 1 0 -9.2 0M877.6 1811.0a4.6 4.6 0 1 0 9.2 0a4.6 4.6 0 1 0 -9.2 0M903.6 1824.0a4.6 4.6 0 1 0 9.2 0a4.6 4.6 0 1 0 -9.2 0M929.5 1826.5a4.6 4.6 0 1 0 9.2 0a4.6 4.6 0 1 0 -9.2 0M955.4 1825.5a4.6 4.6 0 1 0 9.2 0a4.6 4.6 0 1 0 -9.2 0M981.4 1825.5a4.6 4.6 0 1 0 9.2 0a4.6 4.6 0 1 0 -9.2 0M1007.3 1826.0a4.6 4.6 0 1 0 9.2 0a4.6 4.6 0 1 0 -9.2 0M1033.2 1824.0a4.6 4.6 0 1 0 9.2 0a4.6 4.6 0 1 0 -9.2 0M1059.2 1823.5a4.6 4.6 0 1 0 9.2 0a4.6 4.6 0 1 0 -9.2 0M1085.1 1824.0a4.6 4.6 0 1 0 9.2 0a4.6 4.6 0 1 0 -9.2 0M1111.0 1824.5a4.6 4.6 0 1 0 9.2 0a4.6 4.6 0 1 0 -9.2 0M1137.0 1819.5a4.6 4.6 0 1 0 9.2 0a4.6 4.6 0 1 0 -9.2 0M1162.9 1819.5a4.6 4.6 0 1 0 9.2 0a4.6 4.6 0 1 0 -9.2 0M1188.8 1825.5a4.6 4.6 0 1 0 9.2 0a4.6 4.6 0 1 0 -9.2 0M1214.7 1802.5a4.6 4.6 0 1 0 9.2 0a4.6 4.6 0 1 0 -9.2 0M1240.7 1766.5a4.6 4.6 0 1 0 9.2 0a4.6 4.6 0 1 0 -9.2 0M1266.6 1785.5a4.6 4.6 0 1 0 9.2 0a4.6 4.6 0 1 0 -9.2 0M1292.5 1799.0a4.6 4.6 0 1 0 9.2 0a4.6 4.6 0 1 0 -9.2 0M1318.5 1815.0a4.6 4.6 0 1 0 9.2 0a4.6 4.6 0 1 0 -9.2 0M1344.4 1811.0a4.6 4.6 0 1 0 9.2 0a4.6 4.6 0 1 0 -9.2 0M1370.3 1809.0a4.6 4.6 0 1 0 9.2 0a4.6 4.6 0 1 0 -9.2 0M1396.2 1790.0a4.6 4.6 0 1 0 9.2 0a4.6 4.6 0 1 0 -9.2 0M1422.2 1785.0a4.6 4.6 0 1 0 9.2 0a4.6 4.6 0 1 0 -9.2 0M1448.1 1760.0a4.6 4.6 0 1 0 9.2 0a4.6 4.6 0 1 0 -9.2 0M1474.0 1764.5a4.6 4.6 0 1 0 9.2 0a4.6 4.6 0 1 0 -9.2 0M1500.0 1761.5a4.6 4.6 0 1 0 9.2 0a4.6 4.6 0 1 0 -9.2 0M1525.9 1751.5a4.6 4.6 0 1 0 9.2 0a4.6 4.6 0 1 0 -9.2 0M1551.8 1778.0a4.6 4.6 0 1 0 9.2 0a4.6 4.6 0 1 0 -9.2 0M1577.8 1786.0a4.6 4.6 0 1 0 9.2 0a4.6 4.6 0 1 0 -9.2 0M1603.7 1782.5a4.6 4.6 0 1 0 9.2 0a4.6 4.6 0 1 0 -9.2 0M1629.6 1784.0a4.6 4.6 0 1 0 9.2 0a4.6 4.6 0 1 0 -9.2 0M1655.6 1782.5a4.6 4.6 0 1 0 9.2 0a4.6 4.6 0 1 0 -9.2 0M1681.5 1782.0a4.6 4.6 0 1 0 9.2 0a4.6 4.6 0 1 0 -9.2 0M1707.4 1787.0a4.6 4.6 0 1 0 9.2 0a4.6 4.6 0 1 0 -9.2 0M1733.3 1783.5a4.6 4.6 0 1 0 9.2 0a4.6 4.6 0 1 0 -9.2 0M1759.3 1790.5a4.6 4.6 0 1 0 9.2 0a4.6 4.6 0 1 0 -9.2 0M1785.2 1786.5a4.6 4.6 0 1 0 9.2 0a4.6 4.6 0 1 0 -9.2 0M1811.1 1750.5a4.6 4.6 0 1 0 9.2 0a4.6 4.6 0 1 0 -9.2 0M1837.1 1788.0a4.6 4.6 0 1 0 9.2 0a4.6 4.6 0 1 0 -9.2 0M1863.0 1782.0a4.6 4.6 0 1 0 9.2 0a4.6 4.6 0 1 0 -9.2 0M1888.9 1775.0a4.6 4.6 0 1 0 9.2 0a4.6 4.6 0 1 0 -9.2 0M1914.9 1763.5a4.6 4.6 0 1 0 9.2 0a4.6 4.6 0 1 0 -9.2 0M1940.8 1788.0a4.6 4.6 0 1 0 9.2 0a4.6 4.6 0 1 0 -9.2 0M1966.7 1786.5a4.6 4.6 0 1 0 9.2 0a4.6 4.6 0 1 0 -9.2 0M1992.6 1753.0a4.6 4.6 0 1 0 9.2 0a4.6 4.6 0 1 0 -9.2 0M2018.6 1788.0a4.6 4.6 0 1 0 9.2 0a4.6 4.6 0 1 0 -9.2 0M2044.5 1789.0a4.6 4.6 0 1 0 9.2 0a4.6 4.6 0 1 0 -9.2 0M2070.4 1788.5a4.6 4.6 0 1 0 9.2 0a4.6 4.6 0 1 0 -9.2 0M2096.4 1775.0a4.6 4.6 0 1 0 9.2 0a4.6 4.6 0 1 0 -9.2 0M2122.3 1787.5a4.6 4.6 0 1 0 9.2 0a4.6 4.6 0 1 0 -9.2 0M2148.2 1787.5a4.6 4.6 0 1 0 9.2 0a4.6 4.6 0 1 0 -9.2 0M2174.2 1789.0a4.6 4.6 0 1 0 9.2 0a4.6 4.6 0 1 0 -9.2 0M2200.1 1800.0a4.6 4.6 0 1 0 9.2 0a4.6 4.6 0 1 0 -9.2 0M2226.0 1793.5a4.6 4.6 0 1 0 9.2 0a4.6 4.6 0 1 0 -9.2 0M2251.9 1799.0a4.6 4.6 0 1 0 9.2 0a4.6 4.6 0 1 0 -9.2 0M2277.9 1799.0a4.6 4.6 0 1 0 9.2 0a4.6 4.6 0 1 0 -9.2 0M2303.8 1803.5a4.6 4.6 0 1 0 9.2 0a4.6 4.6 0 1 0 -9.2 0M2329.7 1799.0a4.6 4.6 0 1 0 9.2 0a4.6 4.6 0 1 0 -9.2 0M2355.7 1802.5a4.6 4.6 0 1 0 9.2 0a4.6 4.6 0 1 0 -9.2 0M2381.6 1791.0a4.6 4.6 0 1 0 9.2 0a4.6 4.6 0 1 0 -9.2 0M2407.5 1804.5a4.6 4.6 0 1 0 9.2 0a4.6 4.6 0 1 0 -9.2 0M2433.5 1790.0a4.6 4.6 0 1 0 9.2 0a4.6 4.6 0 1 0 -9.2 0M2459.4 1790.0a4.6 4.6 0 1 0 9.2 0a4.6 4.6 0 1 0 -9.2 0M2485.3 1780.0a4.6 4.6 0 1 0 9.2 0a4.6 4.6 0 1 0 -9.2 0M2511.2 1795.0a4.6 4.6 0 1 0 9.2 0a4.6 4.6 0 1 0 -9.2 0M2537.2 1589.0a4.6 4.6 0 1 0 9.2 0a4.6 4.6 0 1 0 -9.2 0M2563.1 1599.0a4.6 4.6 0 1 0 9.2 0a4.6 4.6 0 1 0 -9.2 0M2589.0 1602.5a4.6 4.6 0 1 0 9.2 0a4.6 4.6 0 1 0 -9.2 0M2615.0 1601.5a4.6 4.6 0 1 0 9.2 0a4.6 4.6 0 1 0 -9.2 0M2640.9 1593.5a4.6 4.6 0 1 0 9.2 0a4.6 4.6 0 1 0 -9.2 0M2666.8 1596.5a4.6 4.6 0 1 0 9.2 0a4.6 4.6 0 1 0 -9.2 0M2692.8 1595.0a4.6 4.6 0 1 0 9.2 0a4.6 4.6 0 1 0 -9.2 0M2718.7 1585.5a4.6 4.6 0 1 0 9.2 0a4.6 4.6 0 1 0 -9.2 0M2744.6 1582.5a4.6 4.6 0 1 0 9.2 0a4.6 4.6 0 1 0 -9.2 0M2770.5 1566.5a4.6 4.6 0 1 0 9.2 0a4.6 4.6 0 1 0 -9.2 0M2796.5 1582.0a4.6 4.6 0 1 0 9.2 0a4.6 4.6 0 1 0 -9.2 0M2822.4 1602.5a4.6 4.6 0 1 0 9.2 0a4.6 4.6 0 1 0 -9.2 0M2848.3 1580.0a4.6 4.6 0 1 0 9.2 0a4.6 4.6 0 1 0 -9.2 0M2874.3 1674.5a4.6 4.6 0 1 0 9.2 0a4.6 4.6 0 1 0 -9.2 0M2900.2 1725.0a4.6 4.6 0 1 0 9.2 0a4.6 4.6 0 1 0 -9.2 0M2926.1 1723.0a4.6 4.6 0 1 0 9.2 0a4.6 4.6 0 1 0 -9.2 0M2952.1 1727.0a4.6 4.6 0 1 0 9.2 0a4.6 4.6 0 1 0 -9.2 0M2978.0 1720.5a4.6 4.6 0 1 0 9.2 0a4.6 4.6 0 1 0 -9.2 0M3003.9 1719.5a4.6 4.6 0 1 0 9.2 0a4.6 4.6 0 1 0 -9.2 0M3029.8 1713.0a4.6 4.6 0 1 0 9.2 0a4.6 4.6 0 1 0 -9.2 0M3055.8 1724.5a4.6 4.6 0 1 0 9.2 0a4.6 4.6 0 1 0 -9.2 0M3081.7 1726.0a4.6 4.6 0 1 0 9.2 0a4.6 4.6 0 1 0 -9.2 0M3107.6 1729.5a4.6 4.6 0 1 0 9.2 0a4.6 4.6 0 1 0 -9.2 0M3133.6 1744.5a4.6 4.6 0 1 0 9.2 0a4.6 4.6 0 1 0 -9.2 0M3159.5 1728.0a4.6 4.6 0 1 0 9.2 0a4.6 4.6 0 1 0 -9.2 0M3185.4 1713.0a4.6 4.6 0 1 0 9.2 0a4.6 4.6 0 1 0 -9.2 0M3211.3 1717.5a4.6 4.6 0 1 0 9.2 0a4.6 4.6 0 1 0 -9.2 0M3237.3 1721.0a4.6 4.6 0 1 0 9.2 0a4.6 4.6 0 1 0 -9.2 0M3263.2 1813.0a4.6 4.6 0 1 0 9.2 0a4.6 4.6 0 1 0 -9.2 0M3289.1 1824.0a4.6 4.6 0 1 0 9.2 0a4.6 4.6 0 1 0 -9.2 0M3315.1 1816.5a4.6 4.6 0 1 0 9.2 0a4.6 4.6 0 1 0 -9.2 0M3341.0 1803.0a4.6 4.6 0 1 0 9.2 0a4.6 4.6 0 1 0 -9.2 0M3366.9 1814.5a4.6 4.6 0 1 0 9.2 0a4.6 4.6 0 1 0 -9.2 0M3392.9 1813.0a4.6 4.6 0 1 0 9.2 0a4.6 4.6 0 1 0 -9.2 0M3418.8 1809.0a4.6 4.6 0 1 0 9.2 0a4.6 4.6 0 1 0 -9.2 0M3444.7 1822.0a4.6 4.6 0 1 0 9.2 0a4.6 4.6 0 1 0 -9.2 0M3470.7 1810.0a4.6 4.6 0 1 0 9.2 0a4.6 4.6 0 1 0 -9.2 0M3496.6 1819.5a4.6 4.6 0 1 0 9.2 0a4.6 4.6 0 1 0 -9.2 0M3522.5 1817.5a4.6 4.6 0 1 0 9.2 0a4.6 4.6 0 1 0 -9.2 0M3548.4 1809.5a4.6 4.6 0 1 0 9.2 0a4.6 4.6 0 1 0 -9.2 0M3574.4 1803.5a4.6 4.6 0 1 0 9.2 0a4.6 4.6 0 1 0 -9.2 0M3600.3 1801.5a4.6 4.6 0 1 0 9.2 0a4.6 4.6 0 1 0 -9.2 0M3626.2 1797.5a4.6 4.6 0 1 0 9.2 0a4.6 4.6 0 1 0 -9.2 0M3652.2 1804.5a4.6 4.6 0 1 0 9.2 0a4.6 4.6 0 1 0 -9.2 0M3678.1 1806.5a4.6 4.6 0 1 0 9.2 0a4.6 4.6 0 1 0 -9.2 0M3704.0 1810.0a4.6 4.6 0 1 0 9.2 0a4.6 4.6 0 1 0 -9.2 0M3730.0 1819.0a4.6 4.6 0 1 0 9.2 0a4.6 4.6 0 1 0 -9.2 0M3755.9 1822.5a4.6 4.6 0 1 0 9.2 0a4.6 4.6 0 1 0 -9.2 0M3781.8 1823.5a4.6 4.6 0 1 0 9.2 0a4.6 4.6 0 1 0 -9.2 0M3807.7 1823.0a4.6 4.6 0 1 0 9.2 0a4.6 4.6 0 1 0 -9.2 0M3833.7 1823.5a4.6 4.6 0 1 0 9.2 0a4.6 4.6 0 1 0 -9.2 0M3859.6 1823.5a4.6 4.6 0 1 0 9.2 0a4.6 4.6 0 1 0 -9.2 0M3885.5 1822.5a4.6 4.6 0 1 0 9.2 0a4.6 4.6 0 1 0 -9.2 0M3911.5 1825.0a4.6 4.6 0 1 0 9.2 0a4.6 4.6 0 1 0 -9.2 0M3937.4 1825.0a4.6 4.6 0 1 0 9.2 0a4.6 4.6 0 1 0 -9.2 0M3963.3 1825.0a4.6 4.6 0 1 0 9.2 0a4.6 4.6 0 1 0 -9.2 0M3989.2 1823.5a4.6 4.6 0 1 0 9.2 0a4.6 4.6 0 1 0 -9.2 0M4015.2 1823.5a4.6 4.6 0 1 0 9.2 0a4.6 4.6 0 1 0 -9.2 0M4041.1 1820.5a4.6 4.6 0 1 0 9.2 0a4.6 4.6 0 1 0 -9.2 0M4067.0 1820.0a4.6 4.6 0 1 0 9.2 0a4.6 4.6 0 1 0 -9.2 0M4093.0 1823.0a4.6 4.6 0 1 0 9.2 0a4.6 4.6 0 1 0 -9.2 0M4118.9 1821.5a4.6 4.6 0 1 0 9.2 0a4.6 4.6 0 1 0 -9.2 0M4144.8 1822.5a4.6 4.6 0 1 0 9.2 0a4.6 4.6 0 1 0 -9.2 0M4170.8 1811.5a4.6 4.6 0 1 0 9.2 0a4.6 4.6 0 1 0 -9.2 0M4196.7 1821.5a4.6 4.6 0 1 0 9.2 0a4.6 4.6 0 1 0 -9.2 0M4222.6 1821.5a4.6 4.6 0 1 0 9.2 0a4.6 4.6 0 1 0 -9.2 0M4248.5 1820.5a4.6 4.6 0 1 0 9.2 0a4.6 4.6 0 1 0 -9.2 0M4274.5 1824.0a4.6 4.6 0 1 0 9.2 0a4.6 4.6 0 1 0 -9.2 0M4300.4 1789.0a4.6 4.6 0 1 0 9.2 0a4.6 4.6 0 1 0 -9.2 0M4326.3 1820.5a4.6 4.6 0 1 0 9.2 0a4.6 4.6 0 1 0 -9.2 0M4352.3 1826.0a4.6 4.6 0 1 0 9.2 0a4.6 4.6 0 1 0 -9.2 0M4378.2 1823.0a4.6 4.6 0 1 0 9.2 0a4.6 4.6 0 1 0 -9.2 0M4404.1 1824.0a4.6 4.6 0 1 0 9.2 0a4.6 4.6 0 1 0 -9.2 0M4430.1 1811.0a4.6 4.6 0 1 0 9.2 0a4.6 4.6 0 1 0 -9.2 0M4456.0 1824.5a4.6 4.6 0 1 0 9.2 0a4.6 4.6 0 1 0 -9.2 0M4481.9 1822.0a4.6 4.6 0 1 0 9.2 0a4.6 4.6 0 1 0 -9.2 0M4507.8 1824.0a4.6 4.6 0 1 0 9.2 0a4.6 4.6 0 1 0 -9.2 0M4533.8 1828.0a4.6 4.6 0 1 0 9.2 0a4.6 4.6 0 1 0 -9.2 0M4559.7 1841.0a4.6 4.6 0 1 0 9.2 0a4.6 4.6 0 1 0 -9.2 0" fill="#7bb738"/><polyline points="234.0,1848.5 259.9,1804.0 285.9,1801.5 311.8,1803.5 337.7,1805.0 363.6,1803.5 389.6,1805.0 415.5,1798.0 441.4,1802.0 467.4,1800.5 493.3,1805.0 519.2,1808.0 545.2,1808.5 571.1,1805.0 597.0,1805.5 623.0,1806.0 648.9,1809.5 674.8,1810.5 700.7,1808.0 726.7,1808.5 752.6,1806.0 778.5,1809.0 804.5,1810.5 830.4,1807.5 856.3,1805.0 882.2,1807.0 908.2,1800.5 934.1,1805.0 960.0,1805.0 986.0,1803.5 1011.9,1803.5 1037.8,1803.5 1063.8,1798.0 1089.7,1801.0 1115.6,1800.5 1141.5,1801.0 1167.5,1806.0 1193.4,1804.5 1219.3,1800.0 1245.3,1796.5 1271.2,1796.0 1297.1,1798.5 1323.1,1795.0 1349.0,1795.5 1374.9,1796.0 1400.8,1791.0 1426.8,1776.5 1452.7,1740.0 1478.6,1736.5 1504.6,1737.0 1530.5,1739.0 1556.4,1743.0 1582.4,1739.0 1608.3,1741.5 1634.2,1741.5 1660.2,1749.0 1686.1,1731.0 1712.0,1745.5 1737.9,1740.5 1763.9,1754.5 1789.8,1745.0 1815.7,1756.0 1841.7,1752.5 1867.6,1751.0 1893.5,1749.0 1919.5,1749.0 1945.4,1748.5 1971.3,1754.5 1997.2,1741.0 2023.2,1744.5 2049.1,1740.5 2075.0,1745.0 2101.0,1743.5 2126.9,1745.0 2152.8,1739.5 2178.8,1743.0 2204.7,1756.5 2230.6,1757.5 2256.5,1756.0 2282.5,1757.0 2308.4,1753.0 2334.3,1751.5 2360.3,1753.0 2386.2,1751.0 2412.1,1761.0 2438.1,1760.0 2464.0,1756.5 2489.9,1755.5 2515.8,1755.5 2541.8,1755.5 2567.7,1759.5 2593.6,1757.0 2619.6,1750.0 2645.5,1758.0 2671.4,1748.0 2697.3,1750.5 2723.3,1745.0 2749.2,1729.0 2775.1,1747.5 2801.1,1744.0 2827.0,1748.0 2852.9,1751.5 2878.9,1781.0 2904.8,1799.0 2930.7,1797.0 2956.7,1799.5 2982.6,1800.5 3008.5,1803.0 3034.4,1804.5 3060.4,1804.0 3086.3,1803.0 3112.2,1801.5 3138.2,1802.5 3164.1,1803.5 3190.0,1803.5 3215.9,1802.5 3241.9,1802.5 3267.8,1805.5 3293.7,1805.5 3319.7,1803.0 3345.6,1802.5 3371.5,1800.5 3397.5,1799.5 3423.4,1799.0 3449.3,1800.5 3475.2,1800.0 3501.2,1673.0 3527.1,1600.5 3553.0,1594.0 3579.0,1598.5 3604.9,1597.0 3630.8,1600.5 3656.8,1597.0 3682.7,1600.0 3708.6,1596.5 3734.6,1662.5 3760.5,1804.0 3786.4,1802.5 3812.3,1802.5 3838.3,1802.5 3864.2,1801.5 3890.1,1803.5 3916.1,1804.0 3942.0,1806.5 3967.9,1803.5 3993.8,1804.5 4019.8,1798.5 4045.7,1789.0 4071.6,1784.5 4097.6,1780.0 4123.5,1769.0 4149.4,1769.0 4175.4,1763.5 4201.3,1774.0 4227.2,1774.0 4253.1,1781.5 4279.1,1782.0 4305.0,1783.0 4330.9,1780.5 4356.9,1781.0 4382.8,1782.5 4408.7,1780.0 4434.7,1769.5 4460.6,1777.5 4486.5,1780.0 4512.4,1785.0 4538.4,1788.5 4564.3,1822.5" fill="none" stroke="#c43f2a" stroke-width="4.2" stroke-linejoin="round"/><path d="M229.4 1848.5a4.6 4.6 0 1 0 9.2 0a4.6 4.6 0 1 0 -9.2 0M255.3 1804.0a4.6 4.6 0 1 0 9.2 0a4.6 4.6 0 1 0 -9.2 0M281.3 1801.5a4.6 4.6 0 1 0 9.2 0a4.6 4.6 0 1 0 -9.2 0M307.2 1803.5a4.6 4.6 0 1 0 9.2 0a4.6 4.6 0 1 0 -9.2 0M333.1 1805.0a4.6 4.6 0 1 0 9.2 0a4.6 4.6 0 1 0 -9.2 0M359.0 1803.5a4.6 4.6 0 1 0 9.2 0a4.6 4.6 0 1 0 -9.2 0M385.0 1805.0a4.6 4.6 0 1 0 9.2 0a4.6 4.6 0 1 0 -9.2 0M410.9 1798.0a4.6 4.6 0 1 0 9.2 0a4.6 4.6 0 1 0 -9.2 0M436.8 1802.0a4.6 4.6 0 1 0 9.2 0a4.6 4.6 0 1 0 -9.2 0M462.8 1800.5a4.6 4.6 0 1 0 9.2 0a4.6 4.6 0 1 0 -9.2 0M488.7 1805.0a4.6 4.6 0 1 0 9.2 0a4.6 4.6 0 1 0 -9.2 0M514.6 1808.0a4.6 4.6 0 1 0 9.2 0a4.6 4.6 0 1 0 -9.2 0M540.6 1808.5a4.6 4.6 0 1 0 9.2 0a4.6 4.6 0 1 0 -9.2 0M566.5 1805.0a4.6 4.6 0 1 0 9.2 0a4.6 4.6 0 1 0 -9.2 0M592.4 1805.5a4.6 4.6 0 1 0 9.2 0a4.6 4.6 0 1 0 -9.2 0M618.4 1806.0a4.6 4.6 0 1 0 9.2 0a4.6 4.6 0 1 0 -9.2 0M644.3 1809.5a4.6 4.6 0 1 0 9.2 0a4.6 4.6 0 1 0 -9.2 0M670.2 1810.5a4.6 4.6 0 1 0 9.2 0a4.6 4.6 0 1 0 -9.2 0M696.1 1808.0a4.6 4.6 0 1 0 9.2 0a4.6 4.6 0 1 0 -9.2 0M722.1 1808.5a4.6 4.6 0 1 0 9.2 0a4.6 4.6 0 1 0 -9.2 0M748.0 1806.0a4.6 4.6 0 1 0 9.2 0a4.6 4.6 0 1 0 -9.2 0M773.9 1809.0a4.6 4.6 0 1 0 9.2 0a4.6 4.6 0 1 0 -9.2 0M799.9 1810.5a4.6 4.6 0 1 0 9.2 0a4.6 4.6 0 1 0 -9.2 0M825.8 1807.5a4.6 4.6 0 1 0 9.2 0a4.6 4.6 0 1 0 -9.2 0M851.7 1805.0a4.6 4.6 0 1 0 9.2 0a4.6 4.6 0 1 0 -9.2 0M877.6 1807.0a4.6 4.6 0 1 0 9.2 0a4.6 4.6 0 1 0 -9.2 0M903.6 1800.5a4.6 4.6 0 1 0 9.2 0a4.6 4.6 0 1 0 -9.2 0M929.5 1805.0a4.6 4.6 0 1 0 9.2 0a4.6 4.6 0 1 0 -9.2 0M955.4 1805.0a4.6 4.6 0 1 0 9.2 0a4.6 4.6 0 1 0 -9.2 0M981.4 1803.5a4.6 4.6 0 1 0 9.2 0a4.6 4.6 0 1 0 -9.2 0M1007.3 1803.5a4.6 4.6 0 1 0 9.2 0a4.6 4.6 0 1 0 -9.2 0M1033.2 1803.5a4.6 4.6 0 1 0 9.2 0a4.6 4.6 0 1 0 -9.2 0M1059.2 1798.0a4.6 4.6 0 1 0 9.2 0a4.6 4.6 0 1 0 -9.2 0M1085.1 1801.0a4.6 4.6 0 1 0 9.2 0a4.6 4.6 0 1 0 -9.2 0M1111.0 1800.5a4.6 4.6 0 1 0 9.2 0a4.6 4.6 0 1 0 -9.2 0M1137.0 1801.0a4.6 4.6 0 1 0 9.2 0a4.6 4.6 0 1 0 -9.2 0M1162.9 1806.0a4.6 4.6 0 1 0 9.2 0a4.6 4.6 0 1 0 -9.2 0M1188.8 1804.5a4.6 4.6 0 1 0 9.2 0a4.6 4.6 0 1 0 -9.2 0M1214.7 1800.0a4.6 4.6 0 1 0 9.2 0a4.6 4.6 0 1 0 -9.2 0M1240.7 1796.5a4.6 4.6 0 1 0 9.2 0a4.6 4.6 0 1 0 -9.2 0M1266.6 1796.0a4.6 4.6 0 1 0 9.2 0a4.6 4.6 0 1 0 -9.2 0M1292.5 1798.5a4.6 4.6 0 1 0 9.2 0a4.6 4.6 0 1 0 -9.2 0M1318.5 1795.0a4.6 4.6 0 1 0 9.2 0a4.6 4.6 0 1 0 -9.2 0M1344.4 1795.5a4.6 4.6 0 1 0 9.2 0a4.6 4.6 0 1 0 -9.2 0M1370.3 1796.0a4.6 4.6 0 1 0 9.2 0a4.6 4.6 0 1 0 -9.2 0M1396.2 1791.0a4.6 4.6 0 1 0 9.2 0a4.6 4.6 0 1 0 -9.2 0M1422.2 1776.5a4.6 4.6 0 1 0 9.2 0a4.6 4.6 0 1 0 -9.2 0M1448.1 1740.0a4.6 4.6 0 1 0 9.2 0a4.6 4.6 0 1 0 -9.2 0M1474.0 1736.5a4.6 4.6 0 1 0 9.2 0a4.6 4.6 0 1 0 -9.2 0M1500.0 1737.0a4.6 4.6 0 1 0 9.2 0a4.6 4.6 0 1 0 -9.2 0M1525.9 1739.0a4.6 4.6 0 1 0 9.2 0a4.6 4.6 0 1 0 -9.2 0M1551.8 1743.0a4.6 4.6 0 1 0 9.2 0a4.6 4.6 0 1 0 -9.2 0M1577.8 1739.0a4.6 4.6 0 1 0 9.2 0a4.6 4.6 0 1 0 -9.2 0M1603.7 1741.5a4.6 4.6 0 1 0 9.2 0a4.6 4.6 0 1 0 -9.2 0M1629.6 1741.5a4.6 4.6 0 1 0 9.2 0a4.6 4.6 0 1 0 -9.2 0M1655.6 1749.0a4.6 4.6 0 1 0 9.2 0a4.6 4.6 0 1 0 -9.2 0M1681.5 1731.0a4.6 4.6 0 1 0 9.2 0a4.6 4.6 0 1 0 -9.2 0M1707.4 1745.5a4.6 4.6 0 1 0 9.2 0a4.6 4.6 0 1 0 -9.2 0M1733.3 1740.5a4.6 4.6 0 1 0 9.2 0a4.6 4.6 0 1 0 -9.2 0M1759.3 1754.5a4.6 4.6 0 1 0 9.2 0a4.6 4.6 0 1 0 -9.2 0M1785.2 1745.0a4.6 4.6 0 1 0 9.2 0a4.6 4.6 0 1 0 -9.2 0M1811.1 1756.0a4.6 4.6 0 1 0 9.2 0a4.6 4.6 0 1 0 -9.2 0M1837.1 1752.5a4.6 4.6 0 1 0 9.2 0a4.6 4.6 0 1 0 -9.2 0M1863.0 1751.0a4.6 4.6 0 1 0 9.2 0a4.6 4.6 0 1 0 -9.2 0M1888.9 1749.0a4.6 4.6 0 1 0 9.2 0a4.6 4.6 0 1 0 -9.2 0M1914.9 1749.0a4.6 4.6 0 1 0 9.2 0a4.6 4.6 0 1 0 -9.2 0M1940.8 1748.5a4.6 4.6 0 1 0 9.2 0a4.6 4.6 0 1 0 -9.2 0M1966.7 1754.5a4.6 4.6 0 1 0 9.2 0a4.6 4.6 0 1 0 -9.2 0M1992.6 1741.0a4.6 4.6 0 1 0 9.2 0a4.6 4.6 0 1 0 -9.2 0M2018.6 1744.5a4.6 4.6 0 1 0 9.2 0a4.6 4.6 0 1 0 -9.2 0M2044.5 1740.5a4.6 4.6 0 1 0 9.2 0a4.6 4.6 0 1 0 -9.2 0M2070.4 1745.0a4.6 4.6 0 1 0 9.2 0a4.6 4.6 0 1 0 -9.2 0M2096.4 1743.5a4.6 4.6 0 1 0 9.2 0a4.6 4.6 0 1 0 -9.2 0M2122.3 1745.0a4.6 4.6 0 1 0 9.2 0a4.6 4.6 0 1 0 -9.2 0M2148.2 1739.5a4.6 4.6 0 1 0 9.2 0a4.6 4.6 0 1 0 -9.2 0M2174.2 1743.0a4.6 4.6 0 1 0 9.2 0a4.6 4.6 0 1 0 -9.2 0M2200.1 1756.5a4.6 4.6 0 1 0 9.2 0a4.6 4.6 0 1 0 -9.2 0M2226.0 1757.5a4.6 4.6 0 1 0 9.2 0a4.6 4.6 0 1 0 -9.2 0M2251.9 1756.0a4.6 4.6 0 1 0 9.2 0a4.6 4.6 0 1 0 -9.2 0M2277.9 1757.0a4.6 4.6 0 1 0 9.2 0a4.6 4.6 0 1 0 -9.2 0M2303.8 1753.0a4.6 4.6 0 1 0 9.2 0a4.6 4.6 0 1 0 -9.2 0M2329.7 1751.5a4.6 4.6 0 1 0 9.2 0a4.6 4.6 0 1 0 -9.2 0M2355.7 1753.0a4.6 4.6 0 1 0 9.2 0a4.6 4.6 0 1 0 -9.2 0M2381.6 1751.0a4.6 4.6 0 1 0 9.2 0a4.6 4.6 0 1 0 -9.2 0M2407.5 1761.0a4.6 4.6 0 1 0 9.2 0a4.6 4.6 0 1 0 -9.2 0M2433.5 1760.0a4.6 4.6 0 1 0 9.2 0a4.6 4.6 0 1 0 -9.2 0M2459.4 1756.5a4.6 4.6 0 1 0 9.2 0a4.6 4.6 0 1 0 -9.2 0M2485.3 1755.5a4.6 4.6 0 1 0 9.2 0a4.6 4.6 0 1 0 -9.2 0M2511.2 1755.5a4.6 4.6 0 1 0 9.2 0a4.6 4.6 0 1 0 -9.2 0M2537.2 1755.5a4.6 4.6 0 1 0 9.2 0a4.6 4.6 0 1 0 -9.2 0M2563.1 1759.5a4.6 4.6 0 1 0 9.2 0a4.6 4.6 0 1 0 -9.2 0M2589.0 1757.0a4.6 4.6 0 1 0 9.2 0a4.6 4.6 0 1 0 -9.2 0M2615.0 1750.0a4.6 4.6 0 1 0 9.2 0a4.6 4.6 0 1 0 -9.2 0M2640.9 1758.0a4.6 4.6 0 1 0 9.2 0a4.6 4.6 0 1 0 -9.2 0M2666.8 1748.0a4.6 4.6 0 1 0 9.2 0a4.6 4.6 0 1 0 -9.2 0M2692.8 1750.5a4.6 4.6 0 1 0 9.2 0a4.6 4.6 0 1 0 -9.2 0M2718.7 1745.0a4.6 4.6 0 1 0 9.2 0a4.6 4.6 0 1 0 -9.2 0M2744.6 1729.0a4.6 4.6 0 1 0 9.2 0a4.6 4.6 0 1 0 -9.2 0M2770.5 1747.5a4.6 4.6 0 1 0 9.2 0a4.6 4.6 0 1 0 -9.2 0M2796.5 1744.0a4.6 4.6 0 1 0 9.2 0a4.6 4.6 0 1 0 -9.2 0M2822.4 1748.0a4.6 4.6 0 1 0 9.2 0a4.6 4.6 0 1 0 -9.2 0M2848.3 1751.5a4.6 4.6 0 1 0 9.2 0a4.6 4.6 0 1 0 -9.2 0M2874.3 1781.0a4.6 4.6 0 1 0 9.2 0a4.6 4.6 0 1 0 -9.2 0M2900.2 1799.0a4.6 4.6 0 1 0 9.2 0a4.6 4.6 0 1 0 -9.2 0M2926.1 1797.0a4.6 4.6 0 1 0 9.2 0a4.6 4.6 0 1 0 -9.2 0M2952.1 1799.5a4.6 4.6 0 1 0 9.2 0a4.6 4.6 0 1 0 -9.2 0M2978.0 1800.5a4.6 4.6 0 1 0 9.2 0a4.6 4.6 0 1 0 -9.2 0M3003.9 1803.0a4.6 4.6 0 1 0 9.2 0a4.6 4.6 0 1 0 -9.2 0M3029.8 1804.5a4.6 4.6 0 1 0 9.2 0a4.6 4.6 0 1 0 -9.2 0M3055.8 1804.0a4.6 4.6 0 1 0 9.2 0a4.6 4.6 0 1 0 -9.2 0M3081.7 1803.0a4.6 4.6 0 1 0 9.2 0a4.6 4.6 0 1 0 -9.2 0M3107.6 1801.5a4.6 4.6 0 1 0 9.2 0a4.6 4.6 0 1 0 -9.2 0M3133.6 1802.5a4.6 4.6 0 1 0 9.2 0a4.6 4.6 0 1 0 -9.2 0M3159.5 1803.5a4.6 4.6 0 1 0 9.2 0a4.6 4.6 0 1 0 -9.2 0M3185.4 1803.5a4.6 4.6 0 1 0 9.2 0a4.6 4.6 0 1 0 -9.2 0M3211.3 1802.5a4.6 4.6 0 1 0 9.2 0a4.6 4.6 0 1 0 -9.2 0M3237.3 1802.5a4.6 4.6 0 1 0 9.2 0a4.6 4.6 0 1 0 -9.2 0M3263.2 1805.5a4.6 4.6 0 1 0 9.2 0a4.6 4.6 0 1 0 -9.2 0M3289.1 1805.5a4.6 4.6 0 1 0 9.2 0a4.6 4.6 0 1 0 -9.2 0M3315.1 1803.0a4.6 4.6 0 1 0 9.2 0a4.6 4.6 0 1 0 -9.2 0M3341.0 1802.5a4.6 4.6 0 1 0 9.2 0a4.6 4.6 0 1 0 -9.2 0M3366.9 1800.5a4.6 4.6 0 1 0 9.2 0a4.6 4.6 0 1 0 -9.2 0M3392.9 1799.5a4.6 4.6 0 1 0 9.2 0a4.6 4.6 0 1 0 -9.2 0M3418.8 1799.0a4.6 4.6 0 1 0 9.2 0a4.6 4.6 0 1 0 -9.2 0M3444.7 1800.5a4.6 4.6 0 1 0 9.2 0a4.6 4.6 0 1 0 -9.2 0M3470.7 1800.0a4.6 4.6 0 1 0 9.2 0a4.6 4.6 0 1 0 -9.2 0M3496.6 1673.0a4.6 4.6 0 1 0 9.2 0a4.6 4.6 0 1 0 -9.2 0M3522.5 1600.5a4.6 4.6 0 1 0 9.2 0a4.6 4.6 0 1 0 -9.2 0M3548.4 1594.0a4.6 4.6 0 1 0 9.2 0a4.6 4.6 0 1 0 -9.2 0M3574.4 1598.5a4.6 4.6 0 1 0 9.2 0a4.6 4.6 0 1 0 -9.2 0M3600.3 1597.0a4.6 4.6 0 1 0 9.2 0a4.6 4.6 0 1 0 -9.2 0M3626.2 1600.5a4.6 4.6 0 1 0 9.2 0a4.6 4.6 0 1 0 -9.2 0M3652.2 1597.0a4.6 4.6 0 1 0 9.2 0a4.6 4.6 0 1 0 -9.2 0M3678.1 1600.0a4.6 4.6 0 1 0 9.2 0a4.6 4.6 0 1 0 -9.2 0M3704.0 1596.5a4.6 4.6 0 1 0 9.2 0a4.6 4.6 0 1 0 -9.2 0M3730.0 1662.5a4.6 4.6 0 1 0 9.2 0a4.6 4.6 0 1 0 -9.2 0M3755.9 1804.0a4.6 4.6 0 1 0 9.2 0a4.6 4.6 0 1 0 -9.2 0M3781.8 1802.5a4.6 4.6 0 1 0 9.2 0a4.6 4.6 0 1 0 -9.2 0M3807.7 1802.5a4.6 4.6 0 1 0 9.2 0a4.6 4.6 0 1 0 -9.2 0M3833.7 1802.5a4.6 4.6 0 1 0 9.2 0a4.6 4.6 0 1 0 -9.2 0M3859.6 1801.5a4.6 4.6 0 1 0 9.2 0a4.6 4.6 0 1 0 -9.2 0M3885.5 1803.5a4.6 4.6 0 1 0 9.2 0a4.6 4.6 0 1 0 -9.2 0M3911.5 1804.0a4.6 4.6 0 1 0 9.2 0a4.6 4.6 0 1 0 -9.2 0M3937.4 1806.5a4.6 4.6 0 1 0 9.2 0a4.6 4.6 0 1 0 -9.2 0M3963.3 1803.5a4.6 4.6 0 1 0 9.2 0a4.6 4.6 0 1 0 -9.2 0M3989.2 1804.5a4.6 4.6 0 1 0 9.2 0a4.6 4.6 0 1 0 -9.2 0M4015.2 1798.5a4.6 4.6 0 1 0 9.2 0a4.6 4.6 0 1 0 -9.2 0M4041.1 1789.0a4.6 4.6 0 1 0 9.2 0a4.6 4.6 0 1 0 -9.2 0M4067.0 1784.5a4.6 4.6 0 1 0 9.2 0a4.6 4.6 0 1 0 -9.2 0M4093.0 1780.0a4.6 4.6 0 1 0 9.2 0a4.6 4.6 0 1 0 -9.2 0M4118.9 1769.0a4.6 4.6 0 1 0 9.2 0a4.6 4.6 0 1 0 -9.2 0M4144.8 1769.0a4.6 4.6 0 1 0 9.2 0a4.6 4.6 0 1 0 -9.2 0M4170.8 1763.5a4.6 4.6 0 1 0 9.2 0a4.6 4.6 0 1 0 -9.2 0M4196.7 1774.0a4.6 4.6 0 1 0 9.2 0a4.6 4.6 0 1 0 -9.2 0M4222.6 1774.0a4.6 4.6 0 1 0 9.2 0a4.6 4.6 0 1 0 -9.2 0M4248.5 1781.5a4.6 4.6 0 1 0 9.2 0a4.6 4.6 0 1 0 -9.2 0M4274.5 1782.0a4.6 4.6 0 1 0 9.2 0a4.6 4.6 0 1 0 -9.2 0M4300.4 1783.0a4.6 4.6 0 1 0 9.2 0a4.6 4.6 0 1 0 -9.2 0M4326.3 1780.5a4.6 4.6 0 1 0 9.2 0a4.6 4.6 0 1 0 -9.2 0M4352.3 1781.0a4.6 4.6 0 1 0 9.2 0a4.6 4.6 0 1 0 -9.2 0M4378.2 1782.5a4.6 4.6 0 1 0 9.2 0a4.6 4.6 0 1 0 -9.2 0M4404.1 1780.0a4.6 4.6 0 1 0 9.2 0a4.6 4.6 0 1 0 -9.2 0M4430.1 1769.5a4.6 4.6 0 1 0 9.2 0a4.6 4.6 0 1 0 -9.2 0M4456.0 1777.5a4.6 4.6 0 1 0 9.2 0a4.6 4.6 0 1 0 -9.2 0M4481.9 1780.0a4.6 4.6 0 1 0 9.2 0a4.6 4.6 0 1 0 -9.2 0M4507.8 1785.0a4.6 4.6 0 1 0 9.2 0a4.6 4.6 0 1 0 -9.2 0M4533.8 1788.5a4.6 4.6 0 1 0 9.2 0a4.6 4.6 0 1 0 -9.2 0M4559.7 1822.5a4.6 4.6 0 1 0 9.2 0a4.6 4.6 0 1 0 -9.2 0" fill="#c43f2a"/></svg>
<div class="t" style="right:4903.5px;top:1385.5px;font-size:22.5px;color:#98999c;">15,000</div>
<div class="t" style="right:4903.5px;top:1461.0px;font-size:22.5px;color:#98999c;">12,500</div>
<div class="t" style="right:4903.5px;top:1536.5px;font-size:22.5px;color:#98999c;">10,000</div>
<div class="t" style="right:4903.5px;top:1612.0px;font-size:22.5px;color:#98999c;">7,500</div>
<div class="t" style="right:4903.5px;top:1687.5px;font-size:22.5px;color:#98999c;">5,000</div>
<div class="t" style="right:4903.5px;top:1763.0px;font-size:22.5px;color:#98999c;">2,500</div>
<div class="t" style="right:4903.5px;top:1838.5px;font-size:22.5px;color:#98999c;">0</div>
<div class="t" style="left:311.5px;transform:translateX(-50%);top:1860.5px;font-size:23px;color:#98999c;">2020-01-27 12:00</div>
<div class="t" style="left:622.7px;transform:translateX(-50%);top:1860.5px;font-size:23px;color:#98999c;">2020-01-28 00:00</div>
<div class="t" style="left:933.9px;transform:translateX(-50%);top:1860.5px;font-size:23px;color:#98999c;">2020-01-28 12:00</div>
<div class="t" style="left:1245.1px;transform:translateX(-50%);top:1860.5px;font-size:23px;color:#98999c;">2020-01-29 00:00</div>
<div class="t" style="left:1556.3px;transform:translateX(-50%);top:1860.5px;font-size:23px;color:#98999c;">2020-01-29 12:00</div>
<div class="t" style="left:1867.5px;transform:translateX(-50%);top:1860.5px;font-size:23px;color:#98999c;">2020-01-30 00:00</div>
<div class="t" style="left:2178.7px;transform:translateX(-50%);top:1860.5px;font-size:23px;color:#98999c;">2020-01-30 12:00</div>
<div class="t" style="left:2489.9px;transform:translateX(-50%);top:1860.5px;font-size:23px;color:#98999c;">2020-01-31 00:00</div>
<div class="t" style="left:2801.1px;transform:translateX(-50%);top:1860.5px;font-size:23px;color:#98999c;">2020-01-31 12:00</div>
<div class="t" style="left:3112.3px;transform:translateX(-50%);top:1860.5px;font-size:23px;color:#98999c;">2020-02-01 00:00</div>
<div class="t" style="left:3423.5px;transform:translateX(-50%);top:1860.5px;font-size:23px;color:#98999c;">2020-02-01 12:00</div>
<div class="t" style="left:3734.7px;transform:translateX(-50%);top:1860.5px;font-size:23px;color:#98999c;">2020-02-02 00:00</div>
<div class="t" style="left:4045.9px;transform:translateX(-50%);top:1860.5px;font-size:23px;color:#98999c;">2020-02-02 12:00</div>
<div class="t" style="left:4357.1px;transform:translateX(-50%);top:1860.5px;font-size:23px;color:#98999c;">2020-02-03 00:00</div>
<div class="t" style="left:2399.0px;transform:translateX(-50%);top:1893.5px;font-size:21.8px;color:#999a9d;font-weight:bold;">per 60 minutes</div>
<svg style="left:4678px;top:1404px" width="14" height="24" viewBox="0 0 14 24"><path d="M2 2l10 10-10 10" fill="none" stroke="#343741" stroke-width="2.2"/></svg>
<div class="a" style="left:4709px;top:1390px;width:340px;height:2px;background:#c8c9cc;"></div>
<div class="a" style="left:4709px;top:1442px;width:340px;height:2px;background:#c8c9cc;"></div>
<div class="a" style="left:4709px;top:1492px;width:340px;height:2px;background:#c8c9cc;"></div>
<div class="a" style="left:4709px;top:1544px;width:340px;height:2px;background:#c8c9cc;"></div>
<div class="a" style="left:4709px;top:1596px;width:340px;height:2px;background:#c8c9cc;"></div>
<div class="a" style="left:4725px;top:1409px;width:16px;height:16px;background:#c43f2a;border-radius:50%;"></div>
<div class="t" style="left:4758.0px;top:1404.8px;font-size:24.5px;color:#343741;">REJECT</div>
<div class="t" style="right:71.0px;top:1404.0px;font-size:25.4px;color:#343741;font-weight:bold;">863</div>
<div class="a" style="left:4725px;top:1460px;width:16px;height:16px;background:#7bb738;border-radius:50%;"></div>
<div class="t" style="left:4758.0px;top:1455.8px;font-size:24.5px;color:#343741;">ACCEPT</div>
<div class="t" style="right:71.0px;top:1455.0px;font-size:25.4px;color:#343741;font-weight:bold;">253</div>
<div class="a" style="left:4725px;top:1511px;width:16px;height:16px;background:#f2da4b;border-radius:50%;"></div>
<div class="t" style="left:4758.0px;top:1506.8px;font-size:24.5px;color:#343741;">-</div>
<div class="t" style="right:71.0px;top:1506.0px;font-size:25.4px;color:#343741;font-weight:bold;">110</div>
<div class="a" style="left:4725px;top:1563px;width:16px;height:16px;background:#8ad5fb;border-radius:50%;"></div>
<div class="t" style="left:4758.0px;top:1558.8px;font-size:24.5px;color:#343741;">Total Requests</div>
<div class="t" style="right:71.0px;top:1558.0px;font-size:25.4px;color:#343741;font-weight:bold;">1,226</div>
<div class="t" style="right:197.0px;top:2043.5px;font-size:32.5px;color:#69707d;">1–50 of 434177</div>
<div class="a" style="left:4935px;top:2031px;width:72px;height:59px;background:#f5f7fa;border-radius:9px;"></div>
<div class="a" style="left:5015px;top:2031px;width:70px;height:59px;background:#f5f7fa;border-radius:9px;"></div>
<svg style="left:4960px;top:2046px" width="22" height="30" viewBox="0 0 22 30"><path d="M17 3L6 15l11 12" fill="none" stroke="#98999c" stroke-width="5" stroke-linecap="round" stroke-linejoin="round"/></svg>
<svg style="left:5038px;top:2046px" width="22" height="30" viewBox="0 0 22 30"><path d="M5 3l11 12L5 27" fill="none" stroke="#343741" stroke-width="5" stroke-linecap="round" stroke-linejoin="round"/></svg>
<div class="t" style="left:169.8px;top:2113.3px;font-size:24.4px;color:#343741;font-weight:bold;">Time</div>
<svg style="left:234px;top:2124px" width="18" height="10" viewBox="0 0 18 10"><path d="M1 1h16L9 9z" fill="#2a69b0"/></svg>
<div class="t" style="left:523.0px;top:2113.3px;font-size:24.4px;color:#343741;font-weight:bold;">source.ip</div>
<div class="t" style="left:1025.0px;top:2113.3px;font-size:24.4px;color:#343741;font-weight:bold;">source.port</div>
<div class="t" style="left:1649.7px;top:2113.3px;font-size:24.4px;color:#343741;font-weight:bold;">event.original</div>
<div class="a" style="left:105px;top:2157px;width:4988px;height:2px;background:#d3dae6;"></div>
<svg style="left:123px;top:2181px" width="14" height="22" viewBox="0 0 14 22"><path d="M2 2l9 9-9 9" fill="none" stroke="#343741" stroke-width="1.8"/></svg>
<div class="t" style="left:169.8px;top:2181.2px;font-size:24.6px;color:#343741;">Feb 3, 2020 @ 08:26:14.000</div>
<div class="t" style="left:523.0px;top:2181.2px;font-size:24.6px;color:#343741;">185.175.93.78</div>
<div class="t" style="left:1025.0px;top:2181.2px;font-size:24.6px;color:#343741;">42071</div>
<div class="t" style="left:1649.7px;top:2181.3px;font-size:24.5px;color:#343741;">2 627959692251 eni-0602af165e359105f 185.175.93.78 172.31.39.196 42071 6400 6 1 40 1580743519 1580743574 REJECT OK</div>
<div class="a" style="left:105px;top:2233px;width:4988px;height:2px;background:#d3dae6;"></div>
<svg style="left:123px;top:2257px" width="14" height="22" viewBox="0 0 14 22"><path d="M2 2l9 9-9 9" fill="none" stroke="#343741" stroke-width="1.8"/></svg>
<div class="t" style="left:169.8px;top:2257.2px;font-size:24.6px;color:#343741;">Feb 3, 2020 @ 08:26:14.000</div>
<div class="t" style="left:523.0px;top:2257.2px;font-size:24.6px;color:#343741;">45.148.10.115</div>
<div class="t" style="left:1025.0px;top:2257.2px;font-size:24.6px;color:#343741;">54063</div>
<div class="t" style="left:1649.7px;top:2257.3px;font-size:24.5px;color:#343741;">2 627959692251 eni-0602af165e359105f 45.148.10.115 172.31.39.196 54063 8088 6 1 40 1580743519 1580743574 REJECT OK</div>
<div class="a" style="left:105px;top:2309px;width:4988px;height:2px;background:#d3dae6;"></div>
<svg style="left:123px;top:2333px" width="14" height="22" viewBox="0 0 14 22"><path d="M2 2l9 9-9 9" fill="none" stroke="#343741" stroke-width="1.8"/></svg>
<div class="t" style="left:169.8px;top:2333.2px;font-size:24.6px;color:#343741;">Feb 3, 2020 @ 08:26:14.000</div>
<div class="t" style="left:523.0px;top:2333.2px;font-size:24.6px;color:#343741;">159.203.161.141</div>
<div class="t" style="left:1025.0px;top:2333.2px;font-size:24.6px;color:#343741;">57365</div>
<div class="t" style="left:1649.7px;top:2333.3px;font-size:24.5px;color:#343741;">2 627959692251 eni-0602af165e359105f 159.203.161.141 172.31.39.196 57365 8088 6 1 40 1580743519 1580743574 REJECT OK</div>
<div class="a" style="left:105px;top:2385px;width:4988px;height:2px;background:#d3dae6;"></div>
<svg style="left:123px;top:2409px" width="14" height="22" viewBox="0 0 14 22"><path d="M2 2l9 9-9 9" fill="none" stroke="#343741" stroke-width="1.8"/></svg>
<div class="t" style="left:169.8px;top:2409.2px;font-size:24.6px;color:#343741;">Feb 3, 2020 @ 08:26:14.000</div>
<div class="t" style="left:523.0px;top:2409.2px;font-size:24.6px;color:#343741;">141.98.80.204</div>
<div class="t" style="left:1025.0px;top:2409.2px;font-size:24.6px;color:#343741;">41967</div>
<div class="t" style="left:1649.7px;top:2409.3px;font-size:24.5px;color:#343741;">2 627959692251 eni-0602af165e359105f 141.98.80.204 172.31.39.196 41967 6000 6 1 40 1580743519 1580743574 REJECT OK</div>
<div class="a" style="left:105px;top:2461px;width:4988px;height:2px;background:#d3dae6;"></div>
<svg style="left:123px;top:2485px" width="14" height="22" viewBox="0 0 14 22"><path d="M2 2l9 9-9 9" fill="none" stroke="#343741" stroke-width="1.8"/></svg>
<div class="t" style="left:169.8px;top:2485.2px;font-size:24.6px;color:#343741;">Feb 3, 2020 @ 08:25:25.000</div>
<div class="t" style="left:523.0px;top:2485.2px;font-size:24.6px;color:#343741;">183.129.160.229</div>
<div class="t" style="left:1025.0px;top:2485.2px;font-size:24.6px;color:#343741;">7964</div>
<div class="t" style="left:1649.7px;top:2485.3px;font-size:24.5px;color:#343741;">2 627959692251 eni-0449221fb5c2c1729 183.129.160.229 172.31.3.58 7964 9330 6 1 44 1580743467 1580743525 REJECT OK</div>
<div class="a" style="left:105px;top:2537px;width:4988px;height:2px;background:#d3dae6;"></div>
<svg style="left:123px;top:2561px" width="14" height="22" viewBox="0 0 14 22"><path d="M2 2l9 9-9 9" fill="none" stroke="#343741" stroke-width="1.8"/></svg>
<div class="t" style="left:169.8px;top:2561.2px;font-size:24.6px;color:#343741;">Feb 3, 2020 @ 08:25:25.000</div>
<div class="t" style="left:523.0px;top:2561.2px;font-size:24.6px;color:#343741;">194.26.29.130</div>
<div class="t" style="left:1025.0px;top:2561.2px;font-size:24.6px;color:#343741;">46693</div>
<div class="t" style="left:1649.7px;top:2561.3px;font-size:24.5px;color:#343741;">2 627959692251 eni-0449221fb5c2c1729 194.26.29.130 172.31.3.58 46693 3291 6 1 40 1580743467 1580743525 REJECT OK</div>
<svg style="left:1983px;top:399px" width="3110" height="884" viewBox="1983 399 3110 884" font-family="Liberation Sans, sans-serif"><defs><clipPath id="mc"><path d="M1983 399H5093V1276a7 7 0 0 1-7 7H1990a7 7 0 0 1-7-7z"/></clipPath><pattern id="wv" width="22" height="22" patternUnits="userSpaceOnUse" x="14" y="8"><path d="M-11 0a12.5 12.5 0 0 0 22 0a12.5 12.5 0 0 0 22 0a12.5 12.5 0 0 0 22 0" fill="none" stroke="#b9cce6" stroke-width="3"/></pattern><filter id="sh" x="-20%" y="-20%" width="140%" height="160%"><feGaussianBlur stdDeviation="22"/></filter></defs><g clip-path="url(#mc)"><rect x="1983" y="399" width="3110" height="884" fill="#c4d8f0"/><rect x="1983" y="399" width="3110" height="884" fill="url(#wv)"/><path d="M1884.9 -71.2L1884.9 330.1L1912.5 381.6L1902.3 393.7L1899.1 410.5L1908.6 426.8L1928.3 436.3L1932.3 454.9L1955.9 457.9L1970.1 453.3L1967.8 475.7L1952.0 491.5L1936.2 497.2L1910.2 515.1L1928.3 506.9L1952.0 500.0L1971.7 484.4L1991.4 465.4L2000.1 445.7L2013.5 445.7L2015.1 423.6L2026.9 415.4L2032.4 433.2L2046.6 423.6L2058.5 420.3L2070.3 433.2L2094.0 436.3L2109.8 441.0L2125.5 456.4L2135.8 469.8L2145.3 487.3L2157.1 504.1L2172.9 512.4L2183.1 515.1L2195.0 539.1L2202.1 558.3L2216.3 570.7L2226.5 581.7L2238.4 590.1L2226.5 593.7L2232.0 616.9L2231.3 648.1L2229.7 680.0L2233.6 690.3L2243.1 707.5L2248.6 719.4L2258.9 738.8L2275.4 744.5L2285.7 756.8L2290.4 767.0L2295.9 777.1L2304.6 788.1L2310.9 798.0L2321.2 812.2L2330.7 824.5L2340.1 840.0L2346.4 842.6L2342.5 832.3L2337.0 829.7L2331.4 816.6L2323.6 799.8L2315.7 785.3L2305.4 767.9L2317.2 770.7L2325.1 786.3L2335.4 800.6L2346.4 813.1L2356.7 824.5L2369.3 839.2L2378.8 854.6L2378.0 866.4L2387.5 876.4L2401.7 886.4L2422.2 895.5L2441.1 902.9L2450.6 904.6L2462.4 899.6L2476.6 905.4L2487.6 916.8L2502.6 922.5L2517.6 924.9L2522.4 929.8L2529.5 935.4L2533.4 941.9L2532.6 949.9L2538.1 952.3L2542.9 955.5L2550.8 963.5L2561.0 965.9L2570.5 968.3L2576.0 972.3L2579.2 969.9L2576.0 964.3L2583.1 959.5L2591.0 961.9L2596.5 970.7L2600.5 966.7L2601.2 961.1L2593.4 956.3L2583.1 953.9L2573.6 959.5L2566.5 958.7L2561.0 954.7L2553.1 946.7L2550.0 938.7L2550.8 924.9L2553.1 911.1L2543.7 902.9L2531.8 902.1L2519.2 902.9L2513.7 899.6L2515.3 887.3L2517.6 879.8L2520.0 868.9L2525.5 858.0L2520.0 856.3L2510.5 857.1L2497.9 859.6L2496.3 870.6L2489.2 880.6L2479.0 880.6L2467.1 883.9L2458.5 879.8L2449.8 873.1L2443.5 862.2L2438.7 848.6L2439.5 833.1L2443.5 818.3L2441.9 804.2L2448.2 796.2L2460.8 788.1L2471.9 784.4L2484.5 785.3L2492.4 789.0L2503.4 788.1L2505.0 780.8L2514.5 778.1L2527.9 778.1L2538.1 784.4L2547.6 781.7L2555.5 789.9L2557.9 799.8L2561.8 811.3L2565.7 818.3L2572.1 824.5L2576.0 823.6L2578.4 812.2L2574.4 797.1L2568.9 782.6L2568.1 770.7L2572.8 761.4L2585.5 751.1L2595.7 744.5L2606.8 737.8L2613.9 730.1L2610.7 716.4L2612.3 707.5L2617.8 699.4L2619.4 693.4L2626.5 686.2L2626.5 679.0L2634.4 676.9L2643.1 672.7L2651.7 669.5L2658.0 667.4L2652.5 660.0L2651.7 652.5L2658.0 644.9L2669.9 639.4L2681.7 633.8L2688.8 629.4L2699.1 626.0L2702.2 628.3L2689.6 640.5L2692.0 648.1L2701.4 642.7L2713.3 636.1L2729.0 629.4L2736.9 621.5L2733.0 608.9L2725.1 621.5L2717.2 623.8L2707.7 620.4L2701.4 616.9L2699.1 606.6L2700.6 597.2L2703.0 587.7L2693.5 582.9L2683.3 584.1L2669.9 592.5L2658.0 605.4L2648.6 611.2L2655.7 603.1L2665.9 590.1L2677.8 581.7L2689.6 570.7L2709.3 569.5L2729.0 570.7L2740.9 567.0L2758.2 554.5L2768.5 541.6L2770.1 525.9L2758.2 515.1L2744.8 505.5L2733.0 497.2L2725.1 481.5L2718.8 465.4L2709.3 453.3L2702.2 430.0L2695.9 437.9L2684.1 457.9L2669.9 451.8L2662.0 447.2L2659.6 422.0L2646.2 417.1L2634.4 402.2L2618.6 397.1L2594.9 395.4L2598.1 423.6L2600.5 444.1L2605.2 468.3L2602.8 487.3L2591.0 501.4L2584.7 517.8L2588.6 541.6L2580.7 557.0L2573.6 554.5L2561.8 536.4L2561.0 505.5L2539.7 504.1L2517.6 492.9L2500.3 480.1L2481.3 478.6L2475.0 454.9L2464.8 445.7L2462.4 426.8L2468.7 405.5L2480.5 393.7L2500.3 367.4L2721.2 -71.2ZM4725.0 -71.2L4725.0 330.1L4752.6 381.6L4742.3 393.7L4739.2 410.5L4748.6 426.8L4768.4 436.3L4772.3 454.9L4796.0 457.9L4810.2 453.3L4807.8 475.7L4792.0 491.5L4776.2 497.2L4750.2 515.1L4768.4 506.9L4792.0 500.0L4811.7 484.4L4831.5 465.4L4840.1 445.7L4853.6 445.7L4855.1 423.6L4867.0 415.4L4872.5 433.2L4886.7 423.6L4898.5 420.3L4910.4 433.2L4934.0 436.3L4949.8 441.0L4965.6 456.4L4975.8 469.8L4985.3 487.3L4997.1 504.1L5012.9 512.4L5023.2 515.1L5035.0 539.1L5042.1 558.3L5056.3 570.7L5066.6 581.7L5078.4 590.1L5066.6 593.7L5072.1 616.9L5071.3 648.1L5069.7 680.0L5073.7 690.3L5083.1 707.5L5088.6 719.4L5098.9 738.8L5115.5 744.5L5125.7 756.8L5130.5 767.0L5136.0 777.1L5144.7 788.1L5151.0 798.0L5161.2 812.2L5170.7 824.5L5180.2 840.0L5186.5 842.6L5182.5 832.3L5177.0 829.7L5171.5 816.6L5163.6 799.8L5155.7 785.3L5145.4 767.9L5157.3 770.7L5165.2 786.3L5175.4 800.6L5186.5 813.1L5196.7 824.5L5209.3 839.2L5218.8 854.6L5218.0 866.4L5227.5 876.4L5241.7 886.4L5262.2 895.5L5281.1 902.9L5290.6 904.6L5302.4 899.6L5316.6 905.4L5327.7 916.8L5342.7 922.5L5357.7 924.9L5362.4 929.8L5369.5 935.4L5373.4 941.9L5372.6 949.9L5378.2 952.3L5382.9 955.5L5390.8 963.5L5401.1 965.9L5410.5 968.3L5416.0 972.3L5419.2 969.9L5416.0 964.3L5423.1 959.5L5431.0 961.9L5436.6 970.7L5440.5 966.7L5441.3 961.1L5433.4 956.3L5423.1 953.9L5413.7 959.5L5406.6 958.7L5401.1 954.7L5393.2 946.7L5390.0 938.7L5390.8 924.9L5393.2 911.1L5383.7 902.9L5371.9 902.1L5359.2 902.9L5353.7 899.6L5355.3 887.3L5357.7 879.8L5360.0 868.9L5365.5 858.0L5360.0 856.3L5350.6 857.1L5337.9 859.6L5336.4 870.6L5329.3 880.6L5319.0 880.6L5307.2 883.9L5298.5 879.8L5289.8 873.1L5283.5 862.2L5278.8 848.6L5279.6 833.1L5283.5 818.3L5281.9 804.2L5288.2 796.2L5300.9 788.1L5311.9 784.4L5324.5 785.3L5332.4 789.0L5343.5 788.1L5345.0 780.8L5354.5 778.1L5367.9 778.1L5378.2 784.4L5387.6 781.7L5395.5 789.9L5397.9 799.8L5401.8 811.3L5405.8 818.3L5412.1 824.5L5416.0 823.6L5418.4 812.2L5414.5 797.1L5408.9 782.6L5408.2 770.7L5412.9 761.4L5425.5 751.1L5435.8 744.5L5446.8 737.8L5453.9 730.1L5450.8 716.4L5452.3 707.5L5457.9 699.4L5459.4 693.4L5466.5 686.2L5466.5 679.0L5474.4 676.9L5483.1 672.7L5491.8 669.5L5498.1 667.4L5492.6 660.0L5491.8 652.5L5498.1 644.9L5509.9 639.4L5521.8 633.8L5528.9 629.4L5539.1 626.0L5542.3 628.3L5529.6 640.5L5532.0 648.1L5541.5 642.7L5553.3 636.1L5569.1 629.4L5577.0 621.5L5573.0 608.9L5565.1 621.5L5557.3 623.8L5547.8 620.4L5541.5 616.9L5539.1 606.6L5540.7 597.2L5543.1 587.7L5533.6 582.9L5523.3 584.1L5509.9 592.5L5498.1 605.4L5488.6 611.2L5495.7 603.1L5506.0 590.1L5517.8 581.7L5529.6 570.7L5549.4 569.5L5569.1 570.7L5580.9 567.0L5598.3 554.5L5608.5 541.6L5610.1 525.9L5598.3 515.1L5584.9 505.5L5573.0 497.2L5565.1 481.5L5558.8 465.4L5549.4 453.3L5542.3 430.0L5536.0 437.9L5524.1 457.9L5509.9 451.8L5502.0 447.2L5499.7 422.0L5486.3 417.1L5474.4 402.2L5458.6 397.1L5435.0 395.4L5438.1 423.6L5440.5 444.1L5445.2 468.3L5442.9 487.3L5431.0 501.4L5424.7 517.8L5428.7 541.6L5420.8 557.0L5413.7 554.5L5401.8 536.4L5401.1 505.5L5379.8 504.1L5357.7 492.9L5340.3 480.1L5321.4 478.6L5315.1 454.9L5304.8 445.7L5302.4 426.8L5308.7 405.5L5320.6 393.7L5340.3 367.4L5561.2 -71.2ZM2768.5 113.5L2792.2 330.1L2807.9 376.3L2817.4 405.5L2829.2 420.3L2849.7 428.4L2863.2 437.9L2871.0 431.6L2873.4 415.4L2882.9 385.1L2894.7 349.1L2926.3 330.1L2973.6 245.6L3052.5 11.7L2768.5 11.7ZM5608.5 113.5L5632.2 330.1L5648.0 376.3L5657.4 405.5L5669.3 420.3L5689.8 428.4L5703.2 437.9L5711.1 431.6L5713.5 415.4L5722.9 385.1L5734.8 349.1L5766.3 330.1L5813.6 245.6L5892.5 11.7L5608.5 11.7ZM2741.7 601.9L2748.8 590.1L2756.7 569.5L2768.5 553.2L2772.4 557.0L2770.1 573.2L2782.7 578.1L2788.2 591.3L2794.5 601.9L2792.2 612.4L2784.3 608.9L2772.4 610.1L2768.5 601.9L2756.7 601.9L2742.5 603.1ZM5581.7 601.9L5588.8 590.1L5596.7 569.5L5608.5 553.2L5612.5 557.0L5610.1 573.2L5622.7 578.1L5628.3 591.3L5634.6 601.9L5632.2 612.4L5624.3 608.9L5612.5 610.1L5608.5 601.9L5596.7 601.9L5582.5 603.1ZM2702.2 613.5L2721.2 614.7L2717.2 620.4L2705.4 616.9ZM5542.3 613.5L5561.2 614.7L5557.3 620.4L5545.4 616.9ZM2540.5 852.9L2545.2 846.9L2555.5 843.5L2567.3 841.8L2579.2 841.8L2591.0 848.6L2601.2 855.4L2610.7 858.8L2617.0 863.0L2624.9 867.2L2618.6 869.8L2606.8 869.8L2597.3 869.8L2600.5 863.9L2593.4 858.8L2583.1 855.4L2572.8 852.0L2563.4 849.5L2553.1 851.2L2546.0 853.7ZM5380.5 852.9L5385.3 846.9L5395.5 843.5L5407.4 841.8L5419.2 841.8L5431.0 848.6L5441.3 855.4L5450.8 858.8L5457.1 863.0L5465.0 867.2L5458.6 869.8L5446.8 869.8L5437.3 869.8L5440.5 863.9L5433.4 858.8L5423.1 855.4L5412.9 852.0L5403.4 849.5L5393.2 851.2L5386.1 853.7ZM2623.3 881.4L2632.8 871.4L2642.3 869.8L2658.0 871.4L2664.4 875.6L2670.7 880.6L2668.3 883.9L2658.0 883.9L2647.8 888.9L2643.8 884.8L2634.4 883.9L2623.3 883.1ZM5463.4 881.4L5472.8 871.4L5482.3 869.8L5498.1 871.4L5504.4 875.6L5510.7 880.6L5508.3 883.9L5498.1 883.9L5487.8 888.9L5483.9 884.8L5474.4 883.9L5463.4 883.1ZM2592.6 882.3L2602.8 881.4L2608.3 884.8L2603.6 886.4L2595.7 885.6ZM5432.6 882.3L5442.9 881.4L5448.4 884.8L5443.7 886.4L5435.8 885.6ZM2680.1 881.4L2692.8 882.3L2691.2 885.6L2680.1 885.6ZM5520.2 881.4L5532.8 882.3L5531.2 885.6L5520.2 885.6ZM2593.4 810.4L2602.8 812.2L2601.2 819.2L2594.9 824.5L2592.6 831.4L2596.5 834.9ZM5433.4 810.4L5442.9 812.2L5441.3 819.2L5435.0 824.5L5432.6 831.4L5436.6 834.9ZM2599.7 961.9L2604.4 963.5L2613.9 949.1L2620.2 942.7L2630.4 940.3L2639.9 935.4L2647.8 931.4L2649.4 938.7L2644.6 945.9L2645.4 957.1L2653.3 940.3L2659.6 938.7L2671.5 945.9L2685.7 945.9L2697.5 949.9L2705.4 945.9L2717.2 945.1L2722.7 949.1L2729.0 953.9L2733.0 961.9L2738.5 964.3L2748.8 972.3L2759.0 982.6L2772.4 983.4L2784.3 984.2L2793.7 988.1L2802.4 996.0L2807.9 1000.0L2812.7 1012.6L2816.6 1017.4L2811.9 1026.1L2827.7 1037.1L2837.9 1035.5L2851.3 1040.3L2860.0 1048.9L2875.0 1050.5L2894.7 1052.9L2907.3 1059.2L2917.6 1068.7L2930.2 1071.1L2934.9 1084.6L2933.4 1101.3L2927.1 1109.3L2917.6 1119.7L2908.9 1132.6L2901.8 1147.3L2902.6 1168.6L2897.9 1180.2L2892.3 1192.8L2886.8 1207.1L2878.1 1215.7L2864.7 1216.5L2851.3 1223.4L2837.1 1232.1L2828.4 1240.8L2826.9 1254.9L2822.1 1265.6L2814.2 1280.1L2806.4 1294.8L2795.3 1310.8L2787.4 1320.3L2776.4 1324.1L2764.5 1323.2L2753.5 1318.4L2748.8 1321.2L2757.4 1335.7L2756.7 1354.5L2740.9 1361.6L2720.4 1364.6L2718.8 1382.1L2697.5 1385.2L2697.5 1406.4L2679.3 1434.0L2689.6 1460.4L2673.8 1486.8L2667.5 1509.3L2662.0 1551.7L2638.3 1538.1L2626.5 1486.8L2616.2 1451.1L2628.9 1411.9L2628.1 1385.2L2630.4 1354.5L2637.5 1329.9L2644.6 1306.0L2646.2 1278.3L2647.8 1255.8L2653.3 1233.8L2656.5 1203.7L2655.7 1178.5L2646.2 1169.4L2630.4 1159.5L2616.2 1151.3L2608.3 1138.3L2601.2 1125.4L2592.6 1106.9L2583.1 1090.1L2570.5 1077.4L2569.7 1065.5L2576.8 1056.8L2574.4 1047.4L2572.8 1037.9L2578.4 1024.5L2584.7 1019.7L2589.4 1013.4L2598.1 1001.6L2600.5 988.1L2598.9 977.8L2595.7 972.3ZM5439.7 961.9L5444.4 963.5L5453.9 949.1L5460.2 942.7L5470.5 940.3L5479.9 935.4L5487.8 931.4L5489.4 938.7L5484.7 945.9L5485.5 957.1L5493.4 940.3L5499.7 938.7L5511.5 945.9L5525.7 945.9L5537.5 949.9L5545.4 945.9L5557.3 945.1L5562.8 949.1L5569.1 953.9L5573.0 961.9L5578.6 964.3L5588.8 972.3L5599.1 982.6L5612.5 983.4L5624.3 984.2L5633.8 988.1L5642.5 996.0L5648.0 1000.0L5652.7 1012.6L5656.7 1017.4L5651.9 1026.1L5667.7 1037.1L5678.0 1035.5L5691.4 1040.3L5700.0 1048.9L5715.0 1050.5L5734.8 1052.9L5747.4 1059.2L5757.6 1068.7L5770.3 1071.1L5775.0 1084.6L5773.4 1101.3L5767.1 1109.3L5757.6 1119.7L5749.0 1132.6L5741.9 1147.3L5742.6 1168.6L5737.9 1180.2L5732.4 1192.8L5726.9 1207.1L5718.2 1215.7L5704.8 1216.5L5691.4 1223.4L5677.2 1232.1L5668.5 1240.8L5666.9 1254.9L5662.2 1265.6L5654.3 1280.1L5646.4 1294.8L5635.4 1310.8L5627.5 1320.3L5616.4 1324.1L5604.6 1323.2L5593.5 1318.4L5588.8 1321.2L5597.5 1335.7L5596.7 1354.5L5580.9 1361.6L5560.4 1364.6L5558.8 1382.1L5537.5 1385.2L5537.5 1406.4L5519.4 1434.0L5529.6 1460.4L5513.9 1486.8L5507.6 1509.3L5502.0 1551.7L5478.4 1538.1L5466.5 1486.8L5456.3 1451.1L5468.9 1411.9L5468.1 1385.2L5470.5 1354.5L5477.6 1329.9L5484.7 1306.0L5486.3 1278.3L5487.8 1255.8L5493.4 1233.8L5496.5 1203.7L5495.7 1178.5L5486.3 1169.4L5470.5 1159.5L5456.3 1151.3L5448.4 1138.3L5441.3 1125.4L5432.6 1106.9L5423.1 1090.1L5410.5 1077.4L5409.7 1065.5L5416.8 1056.8L5414.5 1047.4L5412.9 1037.9L5418.4 1024.5L5424.7 1019.7L5429.5 1013.4L5438.1 1001.6L5440.5 988.1L5438.9 977.8L5435.8 972.3ZM3378.3 -71.2L3378.3 393.7L3379.1 420.3L3387.8 434.7L3395.7 436.3L3411.4 428.4L3423.3 426.8L3435.9 426.8L3448.5 436.3L3431.2 442.6L3411.4 441.0L3395.7 447.2L3395.7 459.4L3402.0 466.9L3402.0 477.2L3394.9 480.1L3383.8 472.8L3377.5 478.6L3376.7 494.4L3376.7 504.1L3368.1 509.7L3364.9 516.5L3357.0 516.5L3348.3 511.0L3338.9 516.5L3324.7 523.2L3316.8 516.5L3306.5 519.2L3297.1 523.2L3296.3 515.1L3289.2 511.0L3291.5 500.0L3295.5 490.1L3293.1 469.8L3285.2 478.6L3275.8 482.9L3274.2 500.0L3278.1 509.7L3280.5 520.5L3273.4 527.2L3265.5 529.9L3255.2 529.9L3248.1 536.4L3244.2 546.8L3238.7 555.7L3230.0 559.5L3222.9 562.0L3222.1 570.7L3211.9 576.8L3200.8 580.5L3195.3 576.8L3198.4 588.9L3185.0 587.7L3173.2 592.5L3176.4 599.6L3189.0 604.3L3193.7 608.9L3200.8 618.1L3200.8 626.0L3200.0 638.3L3197.7 649.2L3190.6 650.3L3178.7 649.2L3164.5 647.0L3148.7 646.0L3136.9 653.6L3140.1 664.3L3140.9 674.8L3139.3 685.2L3135.3 697.4L3140.9 702.5L3140.9 715.4L3151.9 713.4L3159.8 717.4L3166.1 725.2L3174.0 719.4L3184.2 718.4L3193.7 718.4L3199.2 710.5L3204.8 709.5L3211.9 698.4L3207.9 691.3L3214.2 680.0L3219.7 673.7L3235.5 665.3L3235.5 654.6L3241.8 648.1L3252.1 650.3L3262.3 651.4L3269.4 644.9L3278.9 638.3L3287.6 642.7L3293.1 653.6L3298.6 660.0L3307.3 667.4L3319.1 672.7L3326.2 679.0L3333.3 684.1L3334.9 692.3L3334.1 705.5L3337.3 705.5L3341.2 697.4L3345.2 695.4L3346.0 691.3L3340.4 687.2L3343.6 681.0L3351.5 682.1L3356.2 684.1L3353.1 679.0L3344.4 673.7L3335.7 668.5L3337.3 665.3L3326.2 662.1L3319.9 654.6L3316.8 647.0L3307.3 638.3L3307.3 628.3L3313.6 623.8L3319.1 624.9L3317.6 631.6L3323.1 629.4L3327.8 636.1L3332.6 643.8L3339.7 649.2L3349.1 654.6L3357.0 660.0L3363.3 665.3L3364.1 671.6L3363.3 681.0L3368.1 689.3L3372.8 696.4L3376.7 702.5L3380.7 709.5L3382.3 717.4L3387.8 721.3L3392.5 720.3L3390.1 709.5L3397.2 708.5L3399.6 703.5L3391.7 697.4L3390.9 691.3L3394.1 686.2L3388.6 682.1L3394.1 683.1L3399.6 677.9L3409.9 675.8L3417.8 675.8L3417.8 682.1L3420.1 681.0L3427.2 680.0L3438.3 674.8L3439.8 672.7L3431.2 670.6L3439.1 672.7L3427.2 682.1L3420.9 684.1L3417.0 690.3L3422.5 692.3L3419.3 700.4L3424.9 706.5L3425.6 715.4L3431.2 717.4L3435.9 718.4L3444.6 723.3L3451.7 718.4L3461.1 719.4L3469.0 724.2L3478.5 722.3L3484.8 717.4L3494.3 717.4L3495.1 725.2L3492.7 732.0L3493.5 738.8L3488.8 749.2L3485.6 757.7L3482.4 767.0L3480.5 769.8L3485.6 786.3L3487.2 799.8L3495.9 813.9L3505.3 829.7L3513.2 839.2L3519.5 853.7L3525.8 866.4L3534.5 880.6L3543.2 895.5L3547.9 908.7L3549.5 918.4L3553.4 929.0L3564.5 928.2L3577.1 923.3L3592.9 918.4L3604.7 911.9L3620.5 905.4L3626.0 898.0L3647.3 888.1L3658.4 880.6L3665.5 872.3L3671.8 863.9L3678.1 856.3L3682.0 847.8L3675.7 837.5L3669.4 837.5L3659.9 833.1L3655.2 827.1L3654.4 814.8L3650.5 822.7L3644.2 826.2L3636.3 833.1L3625.2 833.1L3617.3 832.3L3616.6 821.0L3614.2 816.6L3611.0 824.5L3609.5 827.9L3606.3 821.0L3605.5 813.1L3599.2 806.0L3593.7 799.8L3592.1 792.6L3588.2 782.6L3593.7 781.7L3600.8 781.7L3607.9 785.3L3611.8 795.3L3616.6 801.5L3625.2 805.1L3634.7 810.4L3648.1 812.2L3656.8 807.8L3662.3 818.3L3674.1 821.8L3696.2 824.5L3711.2 824.5L3723.1 823.6L3735.7 822.7L3742.0 830.5L3745.1 836.6L3751.5 841.8L3760.9 847.8L3755.4 850.3L3764.9 861.3L3772.0 862.2L3783.0 858.0L3785.4 867.2L3784.6 877.3L3788.5 889.7L3790.9 902.1L3796.4 913.6L3800.4 926.6L3805.9 937.9L3812.2 952.3L3817.7 962.7L3822.5 965.9L3828.0 959.5L3835.1 956.3L3839.8 948.3L3839.8 936.2L3843.8 924.1L3842.2 908.7L3849.3 902.1L3859.5 897.2L3867.4 888.9L3876.9 880.6L3884.8 872.3L3895.8 863.0L3896.6 855.4L3904.5 852.0L3912.4 853.7L3924.2 850.3L3932.1 846.9L3937.6 858.0L3939.2 863.0L3944.7 869.8L3951.8 879.0L3955.8 890.6L3954.2 902.1L3962.9 903.7L3971.6 897.2L3980.2 898.0L3981.0 908.7L3985.0 920.1L3988.1 934.6L3987.3 950.7L3985.8 965.1L3990.5 968.3L3999.2 977.8L4002.3 986.5L4005.5 1001.6L4009.4 1007.9L4020.5 1015.0L4026.8 1019.7L4032.3 1019.0L4028.4 1009.5L4026.0 996.8L4023.6 987.3L4016.5 981.0L4009.4 975.4L4002.3 973.0L3998.4 958.7L3992.9 951.5L3993.7 942.7L3996.0 929.8L4000.8 922.5L4006.3 922.5L4006.3 929.8L4015.0 933.0L4020.5 936.2L4022.8 941.1L4027.6 946.7L4034.7 947.5L4037.0 954.7L4038.6 961.9L4048.1 955.5L4052.8 947.5L4061.5 943.5L4068.6 940.3L4071.8 934.6L4072.5 924.9L4071.0 911.9L4066.2 905.4L4059.1 898.0L4052.0 889.7L4044.9 879.0L4044.9 870.6L4052.0 863.9L4061.5 856.3L4070.2 855.4L4076.5 857.1L4079.6 863.9L4082.0 858.8L4092.3 855.4L4103.3 851.2L4111.2 849.5L4121.5 846.0L4130.1 841.8L4139.6 833.1L4146.7 829.7L4153.8 821.0L4154.6 812.2L4160.1 806.0L4165.6 795.3L4171.9 784.4L4168.0 775.3L4171.9 769.8L4164.8 758.6L4160.9 750.2L4151.4 737.8L4153.8 729.1L4161.7 723.3L4170.4 717.4L4176.7 712.4L4168.8 710.5L4159.3 709.5L4148.3 712.4L4147.5 706.5L4141.2 701.5L4138.0 695.4L4145.1 694.4L4153.0 687.2L4164.1 679.0L4171.9 675.8L4169.6 686.2L4166.4 695.4L4172.7 693.4L4180.6 689.3L4190.9 686.2L4195.6 689.3L4199.6 696.4L4196.4 704.5L4201.9 707.5L4209.0 709.5L4207.4 717.4L4208.2 726.2L4206.7 734.9L4209.8 739.7L4216.9 737.8L4224.8 735.9L4230.3 732.0L4231.1 724.2L4231.1 715.4L4227.2 707.5L4222.4 699.4L4216.1 692.3L4216.1 687.2L4224.8 683.1L4234.3 676.9L4233.5 668.5L4240.6 661.1L4245.3 657.9L4254.0 651.4L4261.1 655.7L4273.7 649.2L4280.0 642.7L4289.5 631.6L4297.4 622.6L4303.7 610.1L4313.2 594.9L4317.9 581.7L4318.7 567.0L4324.2 554.5L4325.8 540.4L4321.0 531.2L4313.2 520.5L4295.8 521.9L4289.5 513.8L4277.7 509.7L4289.5 498.6L4297.4 487.3L4303.7 480.1L4314.7 463.9L4328.9 454.9L4340.0 444.1L4358.1 444.1L4373.1 445.7L4389.7 439.4L4403.9 448.7L4415.7 450.3L4428.3 439.4L4432.3 425.2L4445.7 410.5L4461.5 402.2L4474.1 410.5L4472.5 425.2L4486.7 431.6L4500.9 415.4L4508.0 393.7L4630.3 385.1L4630.3 -71.2ZM6218.4 -71.2L6218.4 393.7L6219.1 420.3L6227.8 434.7L6235.7 436.3L6251.5 428.4L6263.3 426.8L6275.9 426.8L6288.6 436.3L6271.2 442.6L6251.5 441.0L6235.7 447.2L6235.7 459.4L6242.0 466.9L6242.0 477.2L6234.9 480.1L6223.9 472.8L6217.6 478.6L6216.8 494.4L6216.8 504.1L6208.1 509.7L6204.9 516.5L6197.1 516.5L6188.4 511.0L6178.9 516.5L6164.7 523.2L6156.8 516.5L6146.6 519.2L6137.1 523.2L6136.3 515.1L6129.2 511.0L6131.6 500.0L6135.5 490.1L6133.1 469.8L6125.3 478.6L6115.8 482.9L6114.2 500.0L6118.2 509.7L6120.5 520.5L6113.4 527.2L6105.5 529.9L6095.3 529.9L6088.2 536.4L6084.2 546.8L6078.7 555.7L6070.0 559.5L6062.9 562.0L6062.1 570.7L6051.9 576.8L6040.8 580.5L6035.3 576.8L6038.5 588.9L6025.1 587.7L6013.2 592.5L6016.4 599.6L6029.0 604.3L6033.7 608.9L6040.8 618.1L6040.8 626.0L6040.1 638.3L6037.7 649.2L6030.6 650.3L6018.8 649.2L6004.6 647.0L5988.8 646.0L5976.9 653.6L5980.1 664.3L5980.9 674.8L5979.3 685.2L5975.4 697.4L5980.9 702.5L5980.9 715.4L5991.9 713.4L5999.8 717.4L6006.1 725.2L6014.0 719.4L6024.3 718.4L6033.7 718.4L6039.3 710.5L6044.8 709.5L6051.9 698.4L6047.9 691.3L6054.3 680.0L6059.8 673.7L6075.6 665.3L6075.6 654.6L6081.9 648.1L6092.1 650.3L6102.4 651.4L6109.5 644.9L6118.9 638.3L6127.6 642.7L6133.1 653.6L6138.7 660.0L6147.3 667.4L6159.2 672.7L6166.3 679.0L6173.4 684.1L6175.0 692.3L6174.2 705.5L6177.3 705.5L6181.3 697.4L6185.2 695.4L6186.0 691.3L6180.5 687.2L6183.6 681.0L6191.5 682.1L6196.3 684.1L6193.1 679.0L6184.4 673.7L6175.8 668.5L6177.3 665.3L6166.3 662.1L6160.0 654.6L6156.8 647.0L6147.3 638.3L6147.3 628.3L6153.7 623.8L6159.2 624.9L6157.6 631.6L6163.1 629.4L6167.9 636.1L6172.6 643.8L6179.7 649.2L6189.2 654.6L6197.1 660.0L6203.4 665.3L6204.2 671.6L6203.4 681.0L6208.1 689.3L6212.8 696.4L6216.8 702.5L6220.7 709.5L6222.3 717.4L6227.8 721.3L6232.6 720.3L6230.2 709.5L6237.3 708.5L6239.7 703.5L6231.8 697.4L6231.0 691.3L6234.1 686.2L6228.6 682.1L6234.1 683.1L6239.7 677.9L6249.9 675.8L6257.8 675.8L6257.8 682.1L6260.2 681.0L6267.3 680.0L6278.3 674.8L6279.9 672.7L6271.2 670.6L6279.1 672.7L6267.3 682.1L6261.0 684.1L6257.0 690.3L6262.5 692.3L6259.4 700.4L6264.9 706.5L6265.7 715.4L6271.2 717.4L6275.9 718.4L6284.6 723.3L6291.7 718.4L6301.2 719.4L6309.1 724.2L6318.5 722.3L6324.9 717.4L6334.3 717.4L6335.1 725.2L6332.7 732.0L6333.5 738.8L6328.8 749.2L6325.6 757.7L6322.5 767.0L6320.5 769.8L6325.6 786.3L6327.2 799.8L6335.9 813.9L6345.4 829.7L6353.3 839.2L6359.6 853.7L6365.9 866.4L6374.6 880.6L6383.2 895.5L6388.0 908.7L6389.5 918.4L6393.5 929.0L6404.5 928.2L6417.2 923.3L6432.9 918.4L6444.8 911.9L6460.5 905.4L6466.1 898.0L6487.4 888.1L6498.4 880.6L6505.5 872.3L6511.8 863.9L6518.1 856.3L6522.1 847.8L6515.8 837.5L6509.5 837.5L6500.0 833.1L6495.3 827.1L6494.5 814.8L6490.5 822.7L6484.2 826.2L6476.3 833.1L6465.3 833.1L6457.4 832.3L6456.6 821.0L6454.2 816.6L6451.1 824.5L6449.5 827.9L6446.3 821.0L6445.6 813.1L6439.2 806.0L6433.7 799.8L6432.1 792.6L6428.2 782.6L6433.7 781.7L6440.8 781.7L6447.9 785.3L6451.9 795.3L6456.6 801.5L6465.3 805.1L6474.7 810.4L6488.2 812.2L6496.8 807.8L6502.4 818.3L6514.2 821.8L6536.3 824.5L6551.3 824.5L6563.1 823.6L6575.7 822.7L6582.0 830.5L6585.2 836.6L6591.5 841.8L6601.0 847.8L6595.4 850.3L6604.9 861.3L6612.0 862.2L6623.1 858.0L6625.4 867.2L6624.6 877.3L6628.6 889.7L6630.9 902.1L6636.5 913.6L6640.4 926.6L6645.9 937.9L6652.2 952.3L6657.8 962.7L6662.5 965.9L6668.0 959.5L6675.1 956.3L6679.9 948.3L6679.9 936.2L6683.8 924.1L6682.2 908.7L6689.3 902.1L6699.6 897.2L6707.5 888.9L6716.9 880.6L6724.8 872.3L6735.9 863.0L6736.7 855.4L6744.5 852.0L6752.4 853.7L6764.3 850.3L6772.2 846.9L6777.7 858.0L6779.3 863.0L6784.8 869.8L6791.9 879.0L6795.8 890.6L6794.2 902.1L6802.9 903.7L6811.6 897.2L6820.3 898.0L6821.1 908.7L6825.0 920.1L6828.2 934.6L6827.4 950.7L6825.8 965.1L6830.5 968.3L6839.2 977.8L6842.4 986.5L6845.5 1001.6L6849.5 1007.9L6860.5 1015.0L6866.8 1019.7L6872.3 1019.0L6868.4 1009.5L6866.0 996.8L6863.7 987.3L6856.6 981.0L6849.5 975.4L6842.4 973.0L6838.4 958.7L6832.9 951.5L6833.7 942.7L6836.1 929.8L6840.8 922.5L6846.3 922.5L6846.3 929.8L6855.0 933.0L6860.5 936.2L6862.9 941.1L6867.6 946.7L6874.7 947.5L6877.1 954.7L6878.7 961.9L6888.1 955.5L6892.9 947.5L6901.5 943.5L6908.6 940.3L6911.8 934.6L6912.6 924.9L6911.0 911.9L6906.3 905.4L6899.2 898.0L6892.1 889.7L6885.0 879.0L6885.0 870.6L6892.1 863.9L6901.5 856.3L6910.2 855.4L6916.5 857.1L6919.7 863.9L6922.0 858.8L6932.3 855.4L6943.3 851.2L6951.2 849.5L6961.5 846.0L6970.2 841.8L6979.6 833.1L6986.7 829.7L6993.8 821.0L6994.6 812.2L7000.2 806.0L7005.7 795.3L7012.0 784.4L7008.0 775.3L7012.0 769.8L7004.9 758.6L7000.9 750.2L6991.5 737.8L6993.8 729.1L7001.7 723.3L7010.4 717.4L7016.7 712.4L7008.8 710.5L6999.4 709.5L6988.3 712.4L6987.5 706.5L6981.2 701.5L6978.1 695.4L6985.2 694.4L6993.1 687.2L7004.1 679.0L7012.0 675.8L7009.6 686.2L7006.5 695.4L7012.8 693.4L7020.7 689.3L7030.9 686.2L7035.7 689.3L7039.6 696.4L7036.4 704.5L7042.0 707.5L7049.1 709.5L7047.5 717.4L7048.3 726.2L7046.7 734.9L7049.9 739.7L7057.0 737.8L7064.8 735.9L7070.4 732.0L7071.2 724.2L7071.2 715.4L7067.2 707.5L7062.5 699.4L7056.2 692.3L7056.2 687.2L7064.8 683.1L7074.3 676.9L7073.5 668.5L7080.6 661.1L7085.4 657.9L7094.0 651.4L7101.1 655.7L7113.8 649.2L7120.1 642.7L7129.5 631.6L7137.4 622.6L7143.7 610.1L7153.2 594.9L7157.9 581.7L7158.7 567.0L7164.2 554.5L7165.8 540.4L7161.1 531.2L7153.2 520.5L7135.8 521.9L7129.5 513.8L7117.7 509.7L7129.5 498.6L7137.4 487.3L7143.7 480.1L7154.8 463.9L7169.0 454.9L7180.0 444.1L7198.2 444.1L7213.2 445.7L7229.7 439.4L7243.9 448.7L7255.8 450.3L7268.4 439.4L7272.3 425.2L7285.7 410.5L7301.5 402.2L7314.1 410.5L7312.6 425.2L7326.8 431.6L7341.0 415.4L7348.1 393.7L7470.3 385.1L7470.3 -71.2ZM3346.8 -71.2L3347.5 397.1L3348.3 408.9L3346.0 423.6L3356.2 431.6L3360.2 437.9L3355.4 445.7L3350.7 453.3L3342.8 459.4L3341.2 472.8L3337.3 487.3L3334.9 492.9L3325.5 494.4L3322.3 502.8L3312.8 502.8L3310.5 491.5L3304.9 480.1L3303.4 468.3L3299.4 459.4L3297.1 447.2L3293.9 437.9L3291.5 447.2L3286.0 450.3L3275.8 462.4L3265.5 465.4L3256.0 453.3L3253.7 442.6L3250.5 430.0L3249.7 415.4L3251.3 397.1L3249.7 -71.2ZM6186.8 -71.2L6187.6 397.1L6188.4 408.9L6186.0 423.6L6196.3 431.6L6200.2 437.9L6195.5 445.7L6190.7 453.3L6182.9 459.4L6181.3 472.8L6177.3 487.3L6175.0 492.9L6165.5 494.4L6162.3 502.8L6152.9 502.8L6150.5 491.5L6145.0 480.1L6143.4 468.3L6139.5 459.4L6137.1 447.2L6133.9 437.9L6131.6 447.2L6126.0 450.3L6115.8 462.4L6105.5 465.4L6096.1 453.3L6093.7 442.6L6090.5 430.0L6089.8 415.4L6091.3 397.1L6089.8 -71.2ZM3165.3 571.9L3177.1 568.2L3184.2 565.8L3195.3 564.5L3204.8 563.3L3220.5 559.5L3221.3 555.7L3217.4 550.6L3223.7 540.4L3219.0 535.1L3212.6 529.9L3208.7 521.9L3204.0 513.8L3199.2 508.3L3196.9 498.6L3190.6 494.4L3184.2 491.5L3189.8 487.3L3193.7 478.6L3196.1 471.3L3183.5 469.8L3179.5 465.4L3186.6 456.4L3174.8 456.4L3170.0 460.9L3166.1 474.2L3165.3 485.8L3166.1 498.6L3170.8 506.9L3170.8 512.4L3182.7 509.7L3183.5 517.8L3187.4 524.5L3185.0 531.2L3175.6 531.2L3173.2 537.7L3177.9 542.9L3170.0 550.6L3177.9 553.2L3185.0 554.5L3182.7 558.3L3174.8 559.5L3166.9 569.5ZM6005.3 571.9L6017.2 568.2L6024.3 565.8L6035.3 564.5L6044.8 563.3L6060.6 559.5L6061.4 555.7L6057.4 550.6L6063.7 540.4L6059.0 535.1L6052.7 529.9L6048.7 521.9L6044.0 513.8L6039.3 508.3L6036.9 498.6L6030.6 494.4L6024.3 491.5L6029.8 487.3L6033.7 478.6L6036.1 471.3L6023.5 469.8L6019.5 465.4L6026.6 456.4L6014.8 456.4L6010.1 460.9L6006.1 474.2L6005.3 485.8L6006.1 498.6L6010.9 506.9L6010.9 512.4L6022.7 509.7L6023.5 517.8L6027.4 524.5L6025.1 531.2L6015.6 531.2L6013.2 537.7L6018.0 542.9L6010.1 550.6L6018.0 553.2L6025.1 554.5L6022.7 558.3L6014.8 559.5L6006.9 569.5ZM3161.4 545.5L3162.9 533.8L3161.4 523.2L3166.1 513.8L3160.6 505.5L3151.9 504.1L3144.8 508.3L3142.4 516.5L3131.4 519.2L3132.2 529.9L3136.9 540.4L3128.2 548.1L3133.8 554.5L3144.8 551.9L3155.1 546.8ZM6001.4 545.5L6003.0 533.8L6001.4 523.2L6006.1 513.8L6000.6 505.5L5991.9 504.1L5984.8 508.3L5982.5 516.5L5971.4 519.2L5972.2 529.9L5976.9 540.4L5968.3 548.1L5973.8 554.5L5984.8 551.9L5995.1 546.8ZM3308.1 704.5L3316.0 703.5L3333.3 702.5L3329.4 713.4L3328.6 718.4L3321.5 714.4L3308.9 709.5ZM6148.1 704.5L6156.0 703.5L6173.4 702.5L6169.4 713.4L6168.6 718.4L6161.5 714.4L6148.9 709.5ZM3275.0 674.8L3282.9 672.7L3287.6 679.0L3286.0 693.4L3281.3 695.4L3276.5 695.4L3276.5 682.1ZM6115.0 674.8L6122.9 672.7L6127.6 679.0L6126.0 693.4L6121.3 695.4L6116.6 695.4L6116.6 682.1ZM3278.1 664.3L3283.6 653.6L3286.0 657.9L3284.4 670.6L3279.7 668.5ZM6118.2 664.3L6123.7 653.6L6126.0 657.9L6124.5 670.6L6119.7 668.5ZM3395.7 732.0L3403.6 730.1L3417.8 732.0L3411.4 734.9L3396.5 733.0ZM6235.7 732.0L6243.6 730.1L6257.8 732.0L6251.5 734.9L6236.5 733.0ZM3465.1 736.8L3469.8 733.0L3483.2 728.1L3477.7 735.9L3470.6 738.8ZM6305.1 736.8L6309.9 733.0L6323.3 728.1L6317.8 735.9L6310.7 738.8ZM3163.7 727.2L3174.8 733.0L3187.4 732.0L3200.0 732.0L3212.6 726.2L3224.5 719.4L3237.9 717.4L3252.1 718.4L3264.7 714.4L3278.9 715.4L3289.2 712.4L3297.8 715.4L3292.3 722.3L3297.8 732.0L3291.5 740.7L3291.5 747.3L3298.6 752.1L3308.9 755.8L3320.7 757.7L3331.0 761.4L3334.1 769.8L3348.3 774.4L3359.4 778.1L3366.5 776.2L3368.8 769.8L3368.1 763.3L3375.2 757.7L3382.3 754.9L3391.7 757.7L3394.1 761.4L3406.7 764.2L3415.4 767.0L3427.2 769.8L3438.3 773.5L3447.7 768.9L3454.8 767.0L3464.3 769.8L3474.6 771.6L3480.5 769.8L3485.6 786.3L3480.9 799.8L3475.3 800.6L3468.2 786.3L3466.7 782.6L3467.5 792.6L3473.0 799.8L3477.7 808.6L3483.2 819.2L3488.0 830.5L3491.9 835.7L3501.4 852.0L3503.7 864.7L3505.3 879.0L3513.2 885.6L3517.9 898.0L3522.7 906.2L3529.8 912.7L3537.7 922.5L3544.8 929.0L3551.9 935.4L3553.4 940.3L3559.0 946.7L3569.2 945.1L3578.7 944.3L3590.5 941.1L3600.8 939.5L3614.2 935.4L3613.4 946.7L3611.0 954.7L3605.5 965.1L3600.0 976.2L3593.7 988.1L3586.6 996.8L3577.1 1007.1L3569.2 1013.4L3558.2 1021.3L3548.7 1030.0L3541.6 1037.1L3536.1 1045.0L3527.4 1052.1L3522.7 1063.2L3519.5 1067.1L3516.4 1080.6L3520.3 1087.7L3520.3 1095.7L3523.5 1109.3L3529.8 1115.7L3529.0 1125.4L3530.6 1144.0L3532.1 1149.7L3524.3 1160.4L3505.3 1171.1L3496.6 1180.2L3488.0 1190.2L3488.8 1208.0L3490.3 1223.4L3486.4 1229.4L3471.4 1237.3L3468.2 1247.8L3469.0 1260.2L3465.9 1266.5L3459.6 1271.9L3454.0 1281.9L3447.7 1290.2L3438.3 1301.4L3427.2 1308.9L3413.0 1315.5L3399.6 1316.5L3388.6 1314.6L3375.9 1319.3L3368.1 1323.2L3358.6 1318.4L3354.6 1313.6L3353.9 1300.4L3347.5 1283.8L3340.4 1265.6L3331.0 1252.2L3327.8 1237.3L3323.9 1212.2L3315.2 1194.4L3305.7 1178.5L3302.6 1165.3L3304.9 1153.8L3308.1 1138.3L3317.6 1127.0L3318.4 1115.7L3313.6 1104.5L3312.0 1094.1L3307.3 1079.0L3307.3 1073.5L3303.4 1065.5L3297.1 1059.2L3287.6 1048.9L3282.9 1037.1L3285.2 1026.8L3285.2 1018.2L3288.4 1007.9L3286.8 1001.6L3281.3 998.4L3275.8 994.5L3267.1 995.3L3257.6 996.0L3253.7 990.5L3247.4 981.0L3238.7 979.4L3224.5 981.0L3214.2 984.2L3202.4 990.5L3194.5 992.1L3185.8 989.7L3174.8 988.9L3163.7 990.5L3151.1 995.3L3142.4 991.3L3134.5 986.5L3124.3 979.4L3118.8 975.4L3111.7 970.7L3106.1 964.3L3105.4 956.3L3095.1 949.1L3090.4 942.7L3083.3 937.9L3079.3 931.4L3077.7 923.3L3074.6 914.4L3072.2 911.9L3077.7 906.2L3080.1 899.6L3081.7 889.7L3083.3 880.6L3080.9 872.3L3077.0 864.7L3075.4 860.5L3077.7 852.0L3082.5 839.2L3088.8 830.5L3093.5 821.0L3096.7 813.9L3106.1 803.3L3114.8 798.9L3124.3 794.4L3131.4 789.0L3134.5 781.7L3133.0 774.4L3133.0 766.1L3138.5 757.7L3145.6 749.2L3156.6 743.5L3160.6 734.0ZM6003.8 727.2L6014.8 733.0L6027.4 732.0L6040.1 732.0L6052.7 726.2L6064.5 719.4L6077.9 717.4L6092.1 718.4L6104.7 714.4L6118.9 715.4L6129.2 712.4L6137.9 715.4L6132.4 722.3L6137.9 732.0L6131.6 740.7L6131.6 747.3L6138.7 752.1L6148.9 755.8L6160.8 757.7L6171.0 761.4L6174.2 769.8L6188.4 774.4L6199.4 778.1L6206.5 776.2L6208.9 769.8L6208.1 763.3L6215.2 757.7L6222.3 754.9L6231.8 757.7L6234.1 761.4L6246.8 764.2L6255.4 767.0L6267.3 769.8L6278.3 773.5L6287.8 768.9L6294.9 767.0L6304.3 769.8L6314.6 771.6L6320.5 769.8L6325.6 786.3L6320.9 799.8L6315.4 800.6L6308.3 786.3L6306.7 782.6L6307.5 792.6L6313.0 799.8L6317.8 808.6L6323.3 819.2L6328.0 830.5L6332.0 835.7L6341.4 852.0L6343.8 864.7L6345.4 879.0L6353.3 885.6L6358.0 898.0L6362.7 906.2L6369.8 912.7L6377.7 922.5L6384.8 929.0L6391.9 935.4L6393.5 940.3L6399.0 946.7L6409.3 945.1L6418.7 944.3L6430.6 941.1L6440.8 939.5L6454.2 935.4L6453.4 946.7L6451.1 954.7L6445.6 965.1L6440.0 976.2L6433.7 988.1L6426.6 996.8L6417.2 1007.1L6409.3 1013.4L6398.2 1021.3L6388.8 1030.0L6381.7 1037.1L6376.1 1045.0L6367.5 1052.1L6362.7 1063.2L6359.6 1067.1L6356.4 1080.6L6360.4 1087.7L6360.4 1095.7L6363.5 1109.3L6369.8 1115.7L6369.0 1125.4L6370.6 1144.0L6372.2 1149.7L6364.3 1160.4L6345.4 1171.1L6336.7 1180.2L6328.0 1190.2L6328.8 1208.0L6330.4 1223.4L6326.4 1229.4L6311.4 1237.3L6308.3 1247.8L6309.1 1260.2L6305.9 1266.5L6299.6 1271.9L6294.1 1281.9L6287.8 1290.2L6278.3 1301.4L6267.3 1308.9L6253.1 1315.5L6239.7 1316.5L6228.6 1314.6L6216.0 1319.3L6208.1 1323.2L6198.6 1318.4L6194.7 1313.6L6193.9 1300.4L6187.6 1283.8L6180.5 1265.6L6171.0 1252.2L6167.9 1237.3L6163.9 1212.2L6155.2 1194.4L6145.8 1178.5L6142.6 1165.3L6145.0 1153.8L6148.1 1138.3L6157.6 1127.0L6158.4 1115.7L6153.7 1104.5L6152.1 1094.1L6147.3 1079.0L6147.3 1073.5L6143.4 1065.5L6137.1 1059.2L6127.6 1048.9L6122.9 1037.1L6125.3 1026.8L6125.3 1018.2L6128.4 1007.9L6126.8 1001.6L6121.3 998.4L6115.8 994.5L6107.1 995.3L6097.6 996.0L6093.7 990.5L6087.4 981.0L6078.7 979.4L6064.5 981.0L6054.3 984.2L6042.4 990.5L6034.5 992.1L6025.9 989.7L6014.8 988.9L6003.8 990.5L5991.1 995.3L5982.5 991.3L5974.6 986.5L5964.3 979.4L5958.8 975.4L5951.7 970.7L5946.2 964.3L5945.4 956.3L5935.1 949.1L5930.4 942.7L5923.3 937.9L5919.4 931.4L5917.8 923.3L5914.6 914.4L5912.3 911.9L5917.8 906.2L5920.1 899.6L5921.7 889.7L5923.3 880.6L5920.9 872.3L5917.0 864.7L5915.4 860.5L5917.8 852.0L5922.5 839.2L5928.8 830.5L5933.6 821.0L5936.7 813.9L5946.2 803.3L5954.9 798.9L5964.3 794.4L5971.4 789.0L5974.6 781.7L5973.0 774.4L5973.0 766.1L5978.5 757.7L5985.6 749.2L5996.7 743.5L6000.6 734.0ZM3599.2 1125.4L3603.9 1135.1L3607.9 1153.0L3605.5 1157.9L3600.8 1171.1L3596.8 1188.6L3589.7 1212.2L3581.8 1232.9L3567.6 1239.0L3558.2 1229.4L3554.2 1218.2L3551.9 1206.3L3556.6 1196.1L3560.5 1185.2L3558.2 1171.1L3560.5 1162.0L3571.6 1157.1L3583.4 1147.3L3588.9 1138.3L3595.3 1128.6ZM6439.2 1125.4L6444.0 1135.1L6447.9 1153.0L6445.6 1157.9L6440.8 1171.1L6436.9 1188.6L6429.8 1212.2L6421.9 1232.9L6407.7 1239.0L6398.2 1229.4L6394.3 1218.2L6391.9 1206.3L6396.6 1196.1L6400.6 1185.2L6398.2 1171.1L6400.6 1162.0L6411.6 1157.1L6423.5 1147.3L6429.0 1138.3L6435.3 1128.6ZM3839.8 957.1L3844.6 952.3L3850.9 962.7L3855.6 972.3L3854.0 979.4L3846.1 983.4L3841.4 978.6L3839.8 966.7ZM6679.9 957.1L6684.6 952.3L6690.9 962.7L6695.6 972.3L6694.1 979.4L6686.2 983.4L6681.4 978.6L6679.9 966.7ZM4314.7 670.6L4324.2 666.4L4328.9 657.9L4340.8 664.3L4350.2 653.6L4358.9 650.3L4354.2 641.6L4346.3 640.5L4333.7 627.1L4327.4 629.4L4326.6 643.8L4325.0 651.4L4317.1 650.3L4313.9 657.9ZM7154.8 670.6L7164.2 666.4L7169.0 657.9L7180.8 664.3L7190.3 653.6L7199.0 650.3L7194.2 641.6L7186.3 640.5L7173.7 627.1L7167.4 629.4L7166.6 643.8L7165.0 651.4L7157.1 650.3L7154.0 657.9ZM4321.8 669.5L4326.6 676.9L4329.7 690.3L4327.4 702.5L4322.6 709.5L4321.8 717.4L4319.5 728.1L4313.9 734.9L4306.8 737.8L4301.3 738.8L4291.1 738.8L4289.5 741.6L4284.8 748.3L4276.9 744.5L4278.4 737.8L4269.0 737.8L4258.7 742.6L4245.3 745.4L4242.9 741.6L4250.0 737.8L4256.4 731.1L4269.0 729.1L4277.7 729.1L4283.2 726.2L4289.5 713.4L4293.4 717.4L4303.7 707.5L4310.8 701.5L4313.9 689.3L4314.7 679.0ZM7161.9 669.5L7166.6 676.9L7169.8 690.3L7167.4 702.5L7162.7 709.5L7161.9 717.4L7159.5 728.1L7154.0 734.9L7146.9 737.8L7141.4 738.8L7131.1 738.8L7129.5 741.6L7124.8 748.3L7116.9 744.5L7118.5 737.8L7109.0 737.8L7098.8 742.6L7085.4 745.4L7083.0 741.6L7090.1 737.8L7096.4 731.1L7109.0 729.1L7117.7 729.1L7123.2 726.2L7129.5 713.4L7133.5 717.4L7143.7 707.5L7150.8 701.5L7154.0 689.3L7154.8 679.0ZM4233.5 749.2L4242.2 745.4L4248.5 751.1L4250.8 758.6L4246.1 768.9L4240.6 771.6L4237.4 768.9L4236.6 760.5L4232.7 753.0ZM7073.5 749.2L7082.2 745.4L7088.5 751.1L7090.9 758.6L7086.1 768.9L7080.6 771.6L7077.5 768.9L7076.7 760.5L7072.7 753.0ZM4254.8 753.9L4257.9 745.4L4269.0 741.6L4272.9 744.5L4269.0 751.1L4260.3 755.8ZM7094.8 753.9L7098.0 745.4L7109.0 741.6L7113.0 744.5L7109.0 751.1L7100.3 755.8ZM4330.5 620.4L4342.3 612.4L4336.8 603.1L4339.2 582.9L4343.1 560.8L4340.8 540.4L4336.8 517.8L4332.1 524.5L4332.1 554.5L4328.9 575.6L4330.5 594.9L4328.9 613.5ZM7170.6 620.4L7182.4 612.4L7176.9 603.1L7179.2 582.9L7183.2 560.8L7180.8 540.4L7176.9 517.8L7172.1 524.5L7172.1 554.5L7169.0 575.6L7170.6 594.9L7169.0 613.5ZM4157.7 843.5L4163.3 852.9L4169.6 840.9L4172.7 826.2L4168.0 823.6L4162.5 829.7L4157.7 836.6ZM6997.8 843.5L7003.3 852.9L7009.6 840.9L7012.8 826.2L7008.0 823.6L7002.5 829.7L6997.8 836.6ZM4067.0 875.6L4072.5 869.8L4082.8 868.1L4086.0 872.3L4081.2 880.6L4074.9 883.9L4067.8 881.4ZM6907.1 875.6L6912.6 869.8L6922.8 868.1L6926.0 872.3L6921.3 880.6L6914.9 883.9L6907.8 881.4ZM4159.3 881.4L4168.8 880.6L4174.3 881.4L4175.9 891.4L4169.6 902.9L4171.2 916.8L4182.2 920.1L4188.5 927.4L4184.6 928.2L4176.7 920.9L4168.8 919.3L4161.7 916.0L4158.5 907.8L4155.4 899.6L4160.1 888.9ZM6999.4 881.4L7008.8 880.6L7014.4 881.4L7015.9 891.4L7009.6 902.9L7011.2 916.8L7022.2 920.1L7028.6 927.4L7024.6 928.2L7016.7 920.9L7008.8 919.3L7001.7 916.0L6998.6 907.8L6995.4 899.6L7000.2 888.9ZM4172.7 974.6L4179.8 969.9L4185.4 966.7L4194.8 959.5L4200.3 952.3L4209.0 972.3L4206.7 981.0L4199.6 985.7L4190.1 979.4L4175.1 976.2ZM7012.8 974.6L7019.9 969.9L7025.4 966.7L7034.9 959.5L7040.4 952.3L7049.1 972.3L7046.7 981.0L7039.6 985.7L7030.1 979.4L7015.1 976.2ZM4171.9 936.2L4180.6 945.9L4183.0 955.5L4193.2 950.7L4201.1 949.1L4203.5 941.1L4196.4 930.6L4190.1 929.8L4183.8 932.2L4175.9 931.4ZM7012.0 936.2L7020.7 945.9L7023.0 955.5L7033.3 950.7L7041.2 949.1L7043.5 941.1L7036.4 930.6L7030.1 929.8L7023.8 932.2L7015.9 931.4ZM4134.9 963.5L4147.5 949.9L4154.6 940.3L4153.0 945.9L4141.2 959.5ZM6974.9 963.5L6987.5 949.9L6994.6 940.3L6993.1 945.9L6981.2 959.5ZM4070.2 1015.8L4075.7 1014.2L4087.5 1010.3L4101.7 1004.7L4109.6 994.5L4121.5 988.1L4129.3 976.2L4135.7 975.4L4142.0 982.6L4151.4 988.1L4143.5 995.3L4138.8 1004.7L4141.2 1012.6L4149.1 1022.9L4138.8 1027.6L4137.2 1036.3L4130.1 1041.8L4128.6 1050.5L4125.4 1060.8L4115.9 1061.6L4113.6 1056.8L4104.1 1055.3L4093.8 1056.8L4086.0 1053.7L4079.6 1052.9L4078.9 1044.2L4073.3 1033.9L4070.2 1026.8L4070.2 1019.7ZM6910.2 1015.8L6915.7 1014.2L6927.6 1010.3L6941.8 1004.7L6949.7 994.5L6961.5 988.1L6969.4 976.2L6975.7 975.4L6982.0 982.6L6991.5 988.1L6983.6 995.3L6978.9 1004.7L6981.2 1012.6L6989.1 1022.9L6978.9 1027.6L6977.3 1036.3L6970.2 1041.8L6968.6 1050.5L6965.4 1060.8L6956.0 1061.6L6953.6 1056.8L6944.1 1055.3L6933.9 1056.8L6926.0 1053.7L6919.7 1052.9L6918.9 1044.2L6913.4 1033.9L6910.2 1026.8L6910.2 1019.7ZM3962.1 985.7L3971.6 988.9L3979.5 988.9L3988.1 998.4L3996.8 1004.7L4004.7 1014.2L4011.0 1016.6L4021.3 1025.3L4027.6 1036.3L4034.7 1043.4L4046.5 1053.7L4045.7 1067.9L4044.1 1075.8L4035.5 1076.6L4026.0 1068.7L4017.3 1061.6L4008.6 1051.3L4002.3 1037.9L3994.4 1027.6L3989.7 1016.6L3980.2 1007.9L3970.0 999.2ZM6802.1 985.7L6811.6 988.9L6819.5 988.9L6828.2 998.4L6836.8 1004.7L6844.7 1014.2L6851.0 1016.6L6861.3 1025.3L6867.6 1036.3L6874.7 1043.4L6886.5 1053.7L6885.8 1067.9L6884.2 1075.8L6875.5 1076.6L6866.0 1068.7L6857.4 1061.6L6848.7 1051.3L6842.4 1037.9L6834.5 1027.6L6829.7 1016.6L6820.3 1007.9L6810.0 999.2ZM4040.2 1083.8L4046.5 1076.6L4054.4 1077.4L4064.7 1079.8L4074.1 1083.8L4083.6 1081.4L4089.9 1083.0L4098.6 1084.6L4105.7 1086.9L4114.4 1091.7L4113.6 1098.1L4101.7 1095.7L4089.9 1095.7L4078.1 1093.3L4066.2 1091.7L4054.4 1089.3L4048.1 1086.9ZM6880.2 1083.8L6886.5 1076.6L6894.4 1077.4L6904.7 1079.8L6914.2 1083.8L6923.6 1081.4L6929.9 1083.0L6938.6 1084.6L6945.7 1086.9L6954.4 1091.7L6953.6 1098.1L6941.8 1095.7L6929.9 1095.7L6918.1 1093.3L6906.3 1091.7L6894.4 1089.3L6888.1 1086.9ZM4118.3 1094.1L4123.0 1096.5L4117.5 1099.7L4113.6 1096.5ZM6958.3 1094.1L6963.1 1096.5L6957.6 1099.7L6953.6 1096.5ZM4125.4 1094.9L4133.3 1094.1L4149.1 1094.9L4149.1 1098.9L4137.2 1101.3L4125.4 1100.5ZM6965.4 1094.9L6973.3 1094.1L6989.1 1094.9L6989.1 1098.9L6977.3 1101.3L6965.4 1100.5ZM4155.4 1096.5L4164.8 1095.7L4180.6 1094.9L4179.0 1099.7L4164.8 1100.5L4155.4 1099.7ZM6995.4 1096.5L7004.9 1095.7L7020.7 1094.9L7019.1 1099.7L7004.9 1100.5L6995.4 1099.7ZM4184.6 1110.9L4192.5 1102.9L4204.3 1096.5L4214.5 1096.5L4200.3 1103.7L4188.5 1112.5ZM7024.6 1110.9L7032.5 1102.9L7044.3 1096.5L7054.6 1096.5L7040.4 1103.7L7028.6 1112.5ZM4149.1 1105.3L4160.9 1104.5L4163.3 1110.9L4151.4 1108.5ZM6989.1 1105.3L7000.9 1104.5L7003.3 1110.9L6991.5 1108.5ZM4152.2 1073.5L4160.1 1074.2L4160.1 1053.7L4165.6 1051.3L4167.2 1062.4L4168.8 1067.9L4173.5 1072.7L4180.6 1066.3L4174.3 1055.3L4167.2 1045.0L4169.6 1037.9L4183.0 1037.9L4179.8 1033.2L4168.8 1026.1L4182.2 1022.9L4193.2 1025.3L4198.0 1018.2L4191.7 1027.6L4180.6 1026.8L4159.3 1027.6L4157.0 1033.9L4155.4 1034.7L4153.0 1042.6L4147.5 1051.3L4150.6 1057.6L4153.8 1064.0ZM6992.3 1073.5L7000.2 1074.2L7000.2 1053.7L7005.7 1051.3L7007.3 1062.4L7008.8 1067.9L7013.6 1072.7L7020.7 1066.3L7014.4 1055.3L7007.3 1045.0L7009.6 1037.9L7023.0 1037.9L7019.9 1033.2L7008.8 1026.1L7022.2 1022.9L7033.3 1025.3L7038.0 1018.2L7031.7 1027.6L7020.7 1026.8L6999.4 1027.6L6997.0 1033.9L6995.4 1034.7L6993.1 1042.6L6987.5 1051.3L6990.7 1057.6L6993.8 1064.0ZM4216.1 1015.0L4220.1 1019.7L4225.6 1018.2L4222.4 1025.3L4220.1 1033.9L4218.5 1025.3L4215.3 1022.1ZM7056.2 1015.0L7060.1 1019.7L7065.6 1018.2L7062.5 1025.3L7060.1 1033.9L7058.5 1025.3L7055.4 1022.1ZM4220.1 1056.0L4231.9 1052.1L4242.2 1056.0L4233.5 1059.2L4221.6 1058.4ZM7060.1 1056.0L7071.9 1052.1L7082.2 1056.0L7073.5 1059.2L7061.7 1058.4ZM4243.7 1040.3L4254.0 1033.2L4267.4 1037.1L4271.3 1048.1L4279.2 1056.0L4291.1 1046.6L4302.9 1043.4L4318.7 1048.9L4330.5 1053.7L4350.2 1060.0L4360.5 1067.9L4362.1 1073.5L4375.5 1077.4L4372.3 1086.2L4379.4 1095.7L4388.1 1102.1L4393.6 1110.1L4400.7 1114.9L4389.7 1112.5L4375.5 1110.1L4364.4 1100.5L4347.9 1091.7L4341.6 1095.7L4340.8 1101.3L4333.7 1103.7L4322.6 1102.1L4313.9 1094.1L4302.1 1096.5L4297.4 1072.7L4283.2 1066.3L4269.8 1061.6L4259.5 1062.4L4251.6 1052.1L4263.5 1048.1L4251.6 1045.8L4246.1 1042.6ZM7083.8 1040.3L7094.0 1033.2L7107.4 1037.1L7111.4 1048.1L7119.3 1056.0L7131.1 1046.6L7142.9 1043.4L7158.7 1048.9L7170.6 1053.7L7190.3 1060.0L7200.5 1067.9L7202.1 1073.5L7215.5 1077.4L7212.4 1086.2L7219.5 1095.7L7228.1 1102.1L7233.7 1110.1L7240.8 1114.9L7229.7 1112.5L7215.5 1110.1L7204.5 1100.5L7187.9 1091.7L7181.6 1095.7L7180.8 1101.3L7173.7 1103.7L7162.7 1102.1L7154.0 1094.1L7142.2 1096.5L7137.4 1072.7L7123.2 1066.3L7109.8 1061.6L7099.6 1062.4L7091.7 1052.1L7103.5 1048.1L7091.7 1045.8L7086.1 1042.6ZM4380.2 1074.2L4393.6 1071.1L4405.5 1063.2L4411.8 1064.0L4406.2 1073.5L4397.6 1079.8L4385.7 1079.0ZM7220.3 1074.2L7233.7 1071.1L7245.5 1063.2L7251.8 1064.0L7246.3 1073.5L7237.6 1079.8L7225.8 1079.0ZM4437.0 1081.4L4448.8 1088.5L4444.9 1090.9L4435.4 1083.8ZM7277.1 1081.4L7288.9 1088.5L7284.9 1090.9L7275.5 1083.8ZM4468.6 1095.7L4476.5 1099.7L4470.1 1103.7ZM7308.6 1095.7L7316.5 1099.7L7310.2 1103.7ZM4105.7 1208.0L4111.2 1206.3L4121.5 1201.2L4130.9 1196.1L4145.1 1193.6L4153.0 1191.1L4164.8 1186.9L4170.4 1178.5L4175.1 1168.6L4183.0 1166.1L4186.9 1159.5L4192.5 1153.0L4200.3 1146.4L4210.6 1139.9L4218.5 1143.2L4224.0 1148.9L4231.1 1147.3L4234.3 1136.7L4240.6 1129.4L4247.7 1127.0L4256.4 1127.0L4256.4 1122.1L4263.5 1123.8L4275.3 1127.0L4283.2 1125.4L4290.3 1127.8L4285.5 1136.7L4280.0 1145.6L4279.2 1149.7L4287.1 1156.3L4297.4 1161.2L4308.4 1169.4L4321.0 1169.4L4325.8 1160.4L4327.4 1145.6L4326.6 1133.4L4329.7 1125.4L4334.5 1114.9L4338.4 1122.1L4342.3 1131.8L4343.9 1144.0L4351.0 1144.0L4356.5 1149.7L4358.1 1162.0L4363.6 1176.1L4367.6 1183.5L4375.5 1189.4L4384.2 1194.4L4389.7 1203.7L4397.6 1212.2L4403.9 1224.3L4414.1 1237.3L4418.9 1246.9L4422.0 1264.7L4418.9 1281.0L4416.5 1293.0L4411.0 1304.2L4403.9 1313.6L4397.6 1327.0L4393.6 1346.6L4381.8 1352.5L4370.0 1357.5L4358.1 1359.6L4346.3 1356.5L4332.9 1358.5L4318.7 1354.5L4310.8 1341.6L4302.9 1329.9L4299.0 1323.2L4295.8 1309.8L4286.3 1321.2L4280.0 1323.2L4275.3 1310.8L4267.4 1304.2L4255.6 1296.7L4243.7 1292.1L4228.0 1293.9L4204.3 1299.5L4188.5 1306.0L4184.6 1314.6L4164.8 1313.6L4153.0 1317.4L4141.2 1325.1L4129.3 1325.1L4117.5 1318.4L4117.5 1310.8L4123.0 1306.0L4123.0 1294.8L4117.5 1278.3L4116.7 1264.7L4109.6 1251.3L4104.9 1240.8L4108.0 1229.4L4104.9 1220.8ZM6945.7 1208.0L6951.2 1206.3L6961.5 1201.2L6971.0 1196.1L6985.2 1193.6L6993.1 1191.1L7004.9 1186.9L7010.4 1178.5L7015.1 1168.6L7023.0 1166.1L7027.0 1159.5L7032.5 1153.0L7040.4 1146.4L7050.6 1139.9L7058.5 1143.2L7064.1 1148.9L7071.2 1147.3L7074.3 1136.7L7080.6 1129.4L7087.7 1127.0L7096.4 1127.0L7096.4 1122.1L7103.5 1123.8L7115.3 1127.0L7123.2 1125.4L7130.3 1127.8L7125.6 1136.7L7120.1 1145.6L7119.3 1149.7L7127.2 1156.3L7137.4 1161.2L7148.5 1169.4L7161.1 1169.4L7165.8 1160.4L7167.4 1145.6L7166.6 1133.4L7169.8 1125.4L7174.5 1114.9L7178.4 1122.1L7182.4 1131.8L7184.0 1144.0L7191.1 1144.0L7196.6 1149.7L7198.2 1162.0L7203.7 1176.1L7207.6 1183.5L7215.5 1189.4L7224.2 1194.4L7229.7 1203.7L7237.6 1212.2L7243.9 1224.3L7254.2 1237.3L7258.9 1246.9L7262.1 1264.7L7258.9 1281.0L7256.5 1293.0L7251.0 1304.2L7243.9 1313.6L7237.6 1327.0L7233.7 1346.6L7221.8 1352.5L7210.0 1357.5L7198.2 1359.6L7186.3 1356.5L7172.9 1358.5L7158.7 1354.5L7150.8 1341.6L7142.9 1329.9L7139.0 1323.2L7135.8 1309.8L7126.4 1321.2L7120.1 1323.2L7115.3 1310.8L7107.4 1304.2L7095.6 1296.7L7083.8 1292.1L7068.0 1293.9L7044.3 1299.5L7028.6 1306.0L7024.6 1314.6L7004.9 1313.6L6993.1 1317.4L6981.2 1325.1L6969.4 1325.1L6957.6 1318.4L6957.6 1310.8L6963.1 1306.0L6963.1 1294.8L6957.6 1278.3L6956.8 1264.7L6949.7 1251.3L6944.9 1240.8L6948.1 1229.4L6944.9 1220.8ZM4572.7 1320.3L4586.9 1332.8L4598.0 1347.6L4618.5 1351.5L4606.6 1369.7L4598.7 1388.4L4588.5 1388.4L4586.9 1369.7L4581.4 1366.6L4587.7 1354.5L4579.0 1329.9ZM7412.7 1320.3L7426.9 1332.8L7438.0 1347.6L7458.5 1351.5L7446.7 1369.7L7438.8 1388.4L7428.5 1388.4L7426.9 1369.7L7421.4 1366.6L7427.7 1354.5L7419.1 1329.9Z" fill="#f6f3ef" stroke="#a8c6ee" stroke-width="2.6" stroke-linejoin="round"/><path d="M2462.4 426.8L2464.8 445.7L2475.0 454.9L2481.3 478.6L2500.3 480.1L2517.6 492.9L2539.7 504.1L2561.0 505.5L2561.8 536.4L2573.6 554.5L2580.7 557.0L2588.6 541.6L2584.7 517.8L2591.0 501.4L2602.8 487.3L2605.2 468.3L2600.5 444.1L2598.1 423.6L2594.9 395.4L2594.9 245.6L2468.7 245.6L2468.7 405.5ZM5302.4 426.8L5304.8 445.7L5315.1 454.9L5321.4 478.6L5340.3 480.1L5357.7 492.9L5379.8 504.1L5401.1 505.5L5401.8 536.4L5413.7 554.5L5420.8 557.0L5428.7 541.6L5424.7 517.8L5431.0 501.4L5442.9 487.3L5445.2 468.3L5440.5 444.1L5438.1 423.6L5435.0 395.4L5435.0 245.6L5308.7 245.6L5308.7 405.5ZM3431.2 668.5L3439.8 672.7L3456.4 673.7L3473.0 664.3L3487.2 664.3L3499.0 671.6L3512.4 675.8L3525.8 674.8L3537.7 669.5L3538.5 657.9L3527.4 650.3L3514.0 639.4L3504.5 635.0L3499.0 629.4L3490.3 630.5L3484.0 633.8L3475.3 637.2L3467.5 628.3L3475.3 621.5L3466.7 619.2L3458.8 613.5L3452.5 614.7L3444.6 628.3L3437.5 637.2L3435.9 646.0L3430.4 653.6L3430.4 661.1ZM6271.2 668.5L6279.9 672.7L6296.5 673.7L6313.0 664.3L6327.2 664.3L6339.1 671.6L6352.5 675.8L6365.9 674.8L6377.7 669.5L6378.5 657.9L6367.5 650.3L6354.0 639.4L6344.6 635.0L6339.1 629.4L6330.4 630.5L6324.1 633.8L6315.4 637.2L6307.5 628.3L6315.4 621.5L6306.7 619.2L6298.8 613.5L6292.5 614.7L6284.6 628.3L6277.5 637.2L6275.9 646.0L6270.4 653.6L6270.4 661.1ZM3485.6 621.5L3488.8 613.5L3499.8 610.1L3514.8 606.6L3511.6 615.8L3506.9 621.5L3508.5 626.0L3499.0 627.1L3490.3 628.3ZM6325.6 621.5L6328.8 613.5L6339.8 610.1L6354.8 606.6L6351.7 615.8L6346.9 621.5L6348.5 626.0L6339.1 627.1L6330.4 628.3ZM3582.6 637.2L3585.0 624.9L3597.6 615.8L3615.0 608.9L3629.2 612.4L3630.0 628.3L3615.0 637.2L3614.2 651.4L3626.0 664.3L3627.6 676.9L3636.3 679.0L3635.5 695.4L3635.5 711.4L3618.9 718.4L3607.1 714.4L3599.2 709.5L3596.0 701.5L3599.2 687.2L3607.1 683.1L3600.0 675.8L3593.7 666.4L3587.4 655.7L3584.2 647.0ZM6422.7 637.2L6425.0 624.9L6437.7 615.8L6455.0 608.9L6469.2 612.4L6470.0 628.3L6455.0 637.2L6454.2 651.4L6466.1 664.3L6467.6 676.9L6476.3 679.0L6475.5 695.4L6475.5 711.4L6459.0 718.4L6447.1 714.4L6439.2 709.5L6436.1 701.5L6439.2 687.2L6447.1 683.1L6440.0 675.8L6433.7 666.4L6427.4 655.7L6424.3 647.0ZM3669.4 614.7L3682.8 621.5L3684.4 636.1L3675.7 643.8L3671.8 635.0L3669.4 623.8ZM6509.5 614.7L6522.9 621.5L6524.4 636.1L6515.8 643.8L6511.8 635.0L6509.5 623.8ZM4028.4 551.9L4038.6 546.8L4054.4 533.8L4068.6 515.1L4075.7 500.0L4072.5 497.2L4062.3 511.0L4049.7 529.9L4034.7 544.2ZM6868.4 551.9L6878.7 546.8L6894.4 533.8L6908.6 515.1L6915.7 500.0L6912.6 497.2L6902.3 511.0L6889.7 529.9L6874.7 544.2ZM3790.1 618.1L3798.0 611.2L3809.8 613.5L3829.6 614.7L3835.1 618.1L3817.7 622.6L3801.9 616.9L3794.1 621.5ZM6630.2 618.1L6638.0 611.2L6649.9 613.5L6669.6 614.7L6675.1 618.1L6657.8 622.6L6642.0 616.9L6634.1 621.5ZM2483.7 611.2L2496.3 613.5L2504.2 608.9L2514.5 596.0L2527.9 588.9L2541.3 599.6L2544.4 613.5L2535.8 612.4L2525.5 615.8L2513.7 610.1L2501.1 610.1ZM5323.7 611.2L5336.4 613.5L5344.2 608.9L5354.5 596.0L5367.9 588.9L5381.3 599.6L5384.5 613.5L5375.8 612.4L5365.5 615.8L5353.7 610.1L5341.1 610.1ZM2519.2 667.4L2525.5 664.3L2530.2 653.6L2528.7 637.2L2536.6 628.3L2541.3 622.6L2530.2 621.5L2521.6 626.0L2519.2 636.1L2516.8 649.2L2517.6 660.0ZM5359.2 667.4L5365.5 664.3L5370.3 653.6L5368.7 637.2L5376.6 628.3L5381.3 622.6L5370.3 621.5L5361.6 626.0L5359.2 636.1L5356.9 649.2L5357.7 660.0ZM2560.2 653.6L2558.6 640.5L2552.3 630.5L2542.9 622.6L2551.5 619.2L2565.7 621.5L2576.0 626.0L2579.2 636.1L2567.3 631.6L2565.7 642.7L2563.4 651.4ZM5400.3 653.6L5398.7 640.5L5392.4 630.5L5382.9 622.6L5391.6 619.2L5405.8 621.5L5416.0 626.0L5419.2 636.1L5407.4 631.6L5405.8 642.7L5403.4 651.4ZM2552.3 667.4L2563.4 669.5L2575.2 664.3L2586.3 655.7L2577.6 655.7L2565.0 661.1L2554.7 663.2ZM5392.4 667.4L5403.4 669.5L5415.3 664.3L5426.3 655.7L5417.6 655.7L5405.0 661.1L5394.7 663.2ZM2580.7 650.3L2591.0 649.2L2608.3 648.1L2608.3 640.5L2598.9 642.7L2583.9 646.0ZM5420.8 650.3L5431.0 649.2L5448.4 648.1L5448.4 640.5L5438.9 642.7L5423.9 646.0ZM2445.8 568.2L2443.5 554.5L2433.2 541.6L2427.7 524.5L2435.6 528.5L2445.0 540.4L2449.8 557.0ZM5285.9 568.2L5283.5 554.5L5273.2 541.6L5267.7 524.5L5275.6 528.5L5285.1 540.4L5289.8 557.0ZM2330.7 459.4L2354.3 442.6L2370.1 445.7L2354.3 451.8L2334.6 462.4ZM5170.7 459.4L5194.4 442.6L5210.1 445.7L5194.4 451.8L5174.6 462.4Z" fill="#c4d8f0" stroke="#a8c6ee" stroke-width="2.5"/><path d="M2237.6 585.3L2459.2 585.3L2459.2 580.5L2464.0 588.9L2492.4 594.9L2504.2 597.2L2512.9 593.7L2541.3 610.1L2546.8 616.9L2560.2 628.3L2559.4 657.9L2587.0 651.4L2606.8 640.5L2621.0 631.6L2646.2 631.6L2652.5 627.1L2664.4 604.3L2673.8 606.6L2675.4 624.9L2681.7 633.8M5077.6 585.3L5299.3 585.3L5299.3 580.5L5304.0 588.9L5332.4 594.9L5344.2 597.2L5352.9 593.7L5381.3 610.1L5386.9 616.9L5400.3 628.3L5399.5 657.9L5427.1 651.4L5446.8 640.5L5461.0 631.6L5486.3 631.6L5492.6 627.1L5504.4 604.3L5513.9 606.6L5515.4 624.9L5521.8 633.8M2097.9 245.6L2097.9 430.0L2113.7 433.2L2125.5 447.2L2141.3 437.9L2157.1 459.4L2176.8 494.4L2184.7 504.1M4938.0 245.6L4938.0 430.0L4953.7 433.2L4965.6 447.2L4981.4 437.9L4997.1 459.4L5016.9 494.4L5024.7 504.1M2286.5 758.6L2305.4 756.8L2334.6 769.8L2356.7 769.8L2370.1 765.2L2385.9 784.4L2397.7 790.8L2410.3 783.5L2425.3 804.2L2443.5 818.3M5126.5 758.6L5145.4 756.8L5174.6 769.8L5196.7 769.8L5210.1 765.2L5225.9 784.4L5237.7 790.8L5250.4 783.5L5265.4 804.2L5283.5 818.3M2482.9 914.4L2482.9 887.3L2492.4 887.3L2492.4 891.8L2506.6 887.3L2514.5 889.7M5322.9 914.4L5322.9 887.3L5332.4 887.3L5332.4 891.8L5346.6 887.3L5354.5 889.7M2505.0 915.2L2520.0 920.1L2539.7 914.4L2553.9 910.3M5345.0 915.2L5360.0 920.1L5379.8 914.4L5394.0 910.3M2534.2 941.9L2550.0 943.5M5374.2 941.9L5390.0 943.5M2556.3 964.3L2558.6 954.7M5396.3 964.3L5398.7 954.7M2599.7 970.7L2596.5 961.9M5439.7 970.7L5436.6 961.9M2642.3 934.6L2638.3 974.6L2677.8 982.6L2675.4 1014.2L2658.0 1020.5L2662.0 1063.2L2630.4 1053.7L2616.2 1033.9L2588.6 1020.5M5482.3 934.6L5478.4 974.6L5517.8 982.6L5515.4 1014.2L5498.1 1020.5L5502.0 1063.2L5470.5 1053.7L5456.3 1033.9L5428.7 1020.5M2662.0 1063.2L2636.0 1101.3L2640.7 1109.3L2653.3 1117.3L2668.3 1129.4L2664.4 1152.2L2655.7 1176.1M5502.0 1063.2L5476.0 1101.3L5480.7 1109.3L5493.4 1117.3L5508.3 1129.4L5504.4 1152.2L5495.7 1176.1M2730.6 958.7L2727.5 969.1L2733.0 990.5L2705.4 998.4L2701.4 1014.2L2677.8 1014.2M5570.7 958.7L5567.5 969.1L5573.0 990.5L5545.4 998.4L5541.5 1014.2L5517.8 1014.2M2760.6 982.6L2752.7 1018.2M5600.6 982.6L5592.8 1018.2M2784.3 984.2L2782.7 1011.8M5624.3 984.2L5622.7 1011.8M2803.2 996.8L2796.1 1011.1L2782.7 1011.8M5643.2 996.8L5636.1 1011.1L5622.7 1011.8M2752.7 1018.2L2776.4 1011.8L2782.7 1011.8M5592.8 1018.2L5616.4 1011.8L5622.7 1011.8M2733.0 990.5L2752.7 1018.2L2736.9 1022.1M5573.0 990.5L5592.8 1018.2L5577.0 1022.1M2668.3 1129.4L2697.5 1107.7L2725.1 1137.5L2735.4 1149.7L2751.1 1162.0L2756.7 1176.1L2751.1 1191.1L2719.6 1195.3L2714.8 1208.0L2689.6 1208.0L2677.8 1214.8L2669.9 1199.5L2664.4 1152.2M5508.3 1129.4L5537.5 1107.7L5565.1 1137.5L5575.4 1149.7L5591.2 1162.0L5596.7 1176.1L5591.2 1191.1L5559.6 1195.3L5554.9 1208.0L5529.6 1208.0L5517.8 1214.8L5509.9 1199.5L5504.4 1152.2M2751.1 1191.1L2756.7 1209.7L2771.6 1212.2L2779.5 1238.2L2748.8 1253.1L2733.0 1235.5L2716.4 1209.7M5591.2 1191.1L5596.7 1209.7L5611.7 1212.2L5619.6 1238.2L5588.8 1253.1L5573.0 1235.5L5556.5 1209.7M2779.5 1238.2L2785.8 1253.1L2768.5 1264.7L2755.9 1280.1L2789.0 1313.6M5619.6 1238.2L5625.9 1253.1L5608.5 1264.7L5595.9 1280.1L5629.0 1313.6M2669.9 1199.5L2671.5 1233.8L2660.4 1264.7L2655.7 1306.0L2647.8 1354.5M5509.9 1199.5L5511.5 1233.8L5500.5 1264.7L5495.7 1306.0L5487.8 1354.5M3196.1 650.3L3215.8 655.7L3235.5 660.0M6036.1 650.3L6055.8 655.7L6075.6 660.0M3140.9 665.3L3159.0 666.4L3155.8 700.4L3151.1 713.4M5980.9 665.3L5999.0 666.4L5995.9 700.4L5991.1 713.4M3230.0 559.5L3243.4 574.4L3256.0 579.3L3275.0 585.3L3270.2 601.9L3263.9 605.4L3257.6 618.1L3265.5 621.5L3270.2 644.9M6070.0 559.5L6083.4 574.4L6096.1 579.3L6115.0 585.3L6110.3 601.9L6104.0 605.4L6097.6 618.1L6105.5 621.5L6110.3 644.9M3256.0 579.3L3258.4 563.3L3257.6 550.6L3265.5 545.5L3267.1 531.2M6096.1 579.3L6098.4 563.3L6097.6 550.6L6105.5 545.5L6107.1 531.2M3278.1 509.7L3288.4 511.0M6118.2 509.7L6128.4 511.0M3322.3 523.2L3325.5 540.4L3327.8 560.8L3308.9 569.5L3319.1 587.7L3312.8 603.1L3285.2 603.1L3270.2 601.9M6162.3 523.2L6165.5 540.4L6167.9 560.8L6148.9 569.5L6159.2 587.7L6152.9 603.1L6125.3 603.1L6110.3 601.9M3263.9 620.4L3277.3 614.7L3293.1 614.7L3306.5 608.9L3318.4 614.7L3318.4 624.9M6104.0 620.4L6117.4 614.7L6133.1 614.7L6146.6 608.9L6158.4 614.7L6158.4 624.9M3327.8 560.8L3340.4 569.5L3358.6 579.3L3387.8 585.3L3399.6 567.0L3396.5 548.1L3395.7 523.2L3390.1 516.5M6167.9 560.8L6180.5 569.5L6198.6 579.3L6227.8 585.3L6239.7 567.0L6236.5 548.1L6235.7 523.2L6230.2 516.5M3308.9 569.5L3328.6 585.3L3344.4 590.1L3360.2 597.2L3387.8 594.9L3390.9 598.4M6148.9 569.5L6168.6 585.3L6184.4 590.1L6200.2 597.2L6227.8 594.9L6231.0 598.4M3318.4 614.7L3340.4 614.7L3337.3 600.7L3344.4 590.1M6158.4 614.7L6180.5 614.7L6177.3 600.7L6184.4 590.1M3340.4 614.7L3358.6 621.5L3370.4 619.2L3379.9 613.5L3390.9 598.4L3406.7 600.7L3420.1 594.9L3432.7 626.0L3443.8 628.3M6180.5 614.7L6198.6 621.5L6210.5 619.2L6219.9 613.5L6231.0 598.4L6246.8 600.7L6260.2 594.9L6272.8 626.0L6283.8 628.3M3370.4 619.2L3387.8 637.2L3407.5 646.0L3428.0 642.7L3435.9 646.0M6210.5 619.2L6227.8 637.2L6247.5 646.0L6268.1 642.7L6275.9 646.0M3387.8 637.2L3390.9 651.4L3387.0 661.1L3372.8 673.7L3368.1 688.2M6227.8 637.2L6231.0 651.4L6227.0 661.1L6212.8 673.7L6208.1 688.2M3387.0 661.1L3391.7 671.6L3415.4 668.5L3431.2 664.3M6227.0 661.1L6231.8 671.6L6255.4 668.5L6271.2 664.3M3415.4 668.5L3417.8 675.8M6255.4 668.5L6257.8 675.8M3332.6 643.8L3362.5 633.8L3360.2 653.6L3356.2 660.0M6172.6 643.8L6202.6 633.8L6200.2 653.6L6196.3 660.0M3360.2 653.6L3372.0 661.1L3387.0 661.1M6200.2 653.6L6212.0 661.1L6227.0 661.1M3387.8 585.3L3399.6 597.2L3406.7 600.7M6227.8 585.3L6239.7 597.2L6246.8 600.7M3396.5 548.1L3415.4 549.4L3450.9 554.5L3458.8 545.5L3482.4 548.1L3506.1 567.0L3525.8 578.1L3525.8 599.6L3512.4 606.6M6236.5 548.1L6255.4 549.4L6290.9 554.5L6298.8 545.5L6322.5 548.1L6346.2 567.0L6365.9 578.1L6365.9 599.6L6352.5 606.6M3395.7 523.2L3411.4 519.2L3423.3 497.2L3432.7 491.5L3428.8 472.8L3427.2 450.3M6235.7 523.2L6251.5 519.2L6263.3 497.2L6272.8 491.5L6268.8 472.8L6267.3 450.3M3390.1 516.5L3378.3 504.1L3375.9 494.4L3407.5 491.5L3423.3 497.2M6230.2 516.5L6218.4 504.1L6216.0 494.4L6247.5 491.5L6263.3 497.2M3376.7 472.8L3403.6 468.3L3411.4 472.8L3425.6 472.8M6216.8 472.8L6243.6 468.3L6251.5 472.8L6265.7 472.8M3448.5 436.3L3431.2 412.2L3446.9 393.7L3446.9 349.1M6288.6 436.3L6271.2 412.2L6287.0 393.7L6287.0 349.1M3304.9 442.6L3308.1 422.0L3307.3 398.8L3308.9 367.4M6145.0 442.6L6148.1 422.0L6147.3 398.8L6148.9 367.4M3281.3 509.7L3288.4 511.0M6121.3 509.7L6128.4 511.0M3417.0 667.4L3431.2 664.3M6257.0 667.4L6271.2 664.3M3494.3 717.4L3514.0 717.4L3535.3 714.4L3544.0 713.4L3563.7 713.4L3560.5 691.3L3553.4 673.7L3538.5 669.5M6334.3 717.4L6354.0 717.4L6375.3 714.4L6384.0 713.4L6403.7 713.4L6400.6 691.3L6393.5 673.7L6378.5 669.5M3493.5 729.1L3499.0 717.4M6333.5 729.1L6339.1 717.4M3491.1 745.4L3497.4 739.7L3516.4 750.2L3520.3 761.4L3502.2 767.9L3510.1 779.0L3498.2 786.3L3486.4 786.3M6331.2 745.4L6337.5 739.7L6356.4 750.2L6360.4 761.4L6342.2 767.9L6350.1 779.0L6338.3 786.3L6326.4 786.3M3544.0 713.4L3533.7 740.7L3517.9 761.4M6384.0 713.4L6373.8 740.7L6358.0 761.4M3517.9 761.4L3541.6 770.7L3562.9 789.0L3577.1 789.9L3588.2 782.6M6358.0 761.4L6381.7 770.7L6403.0 789.0L6417.2 789.9L6428.2 782.6M3563.7 713.4L3573.2 728.1L3570.0 739.7L3574.0 753.9L3586.6 763.3L3588.9 777.1M6403.7 713.4L6413.2 728.1L6410.1 739.7L6414.0 753.9L6426.6 763.3L6429.0 777.1M3498.2 786.3L3510.1 799.8L3537.7 804.2L3562.9 789.0M6338.3 786.3L6350.1 799.8L6377.7 804.2L6403.0 789.0M3547.9 898.8L3557.4 890.6L3581.1 894.7L3622.1 877.3L3648.9 868.9L3645.0 846.0L3625.2 844.3L3617.3 832.3M6388.0 898.8L6397.4 890.6L6421.1 894.7L6462.1 877.3L6488.9 868.9L6485.0 846.0L6465.3 844.3L6457.4 832.3M3652.1 817.5L3655.2 827.1L3648.1 834.9L3645.0 846.0M6492.1 817.5L6495.3 827.1L6488.2 834.9L6485.0 846.0M3622.1 877.3L3629.2 897.2M6462.1 877.3L6469.2 897.2M3560.5 691.3L3574.7 697.4L3588.9 700.4L3596.0 701.5M6400.6 691.3L6414.8 697.4L6429.0 700.4L6436.1 701.5M3553.4 673.7L3565.3 672.7L3577.1 666.4L3577.9 658.9L3565.3 649.2L3541.6 651.4L3525.8 648.1M6393.5 673.7L6405.3 672.7L6417.2 666.4L6417.9 658.9L6405.3 649.2L6381.7 651.4L6365.9 648.1M3635.5 711.4L3652.1 706.5L3675.7 713.4L3691.5 719.4L3693.1 732.0L3688.3 749.2L3690.7 767.9L3697.8 772.6L3703.3 787.2L3691.5 800.6L3696.2 824.5M6475.5 711.4L6492.1 706.5L6515.8 713.4L6531.5 719.4L6533.1 732.0L6528.4 749.2L6530.8 767.9L6537.9 772.6L6543.4 787.2L6531.5 800.6L6536.3 824.5M3691.5 719.4L3703.3 710.5L3723.1 712.4L3734.9 712.4L3746.7 715.4L3758.6 709.5L3770.4 702.5L3782.2 715.4L3798.0 713.4M6531.5 719.4L6543.4 710.5L6563.1 712.4L6574.9 712.4L6586.8 715.4L6598.6 709.5L6610.4 702.5L6622.3 715.4L6638.0 713.4M3703.3 787.2L3719.1 786.3L3730.9 783.5L3738.8 769.8L3750.7 765.2L3758.6 746.4L3772.0 740.7L3774.3 725.2L3798.0 713.4M6543.4 787.2L6559.2 786.3L6571.0 783.5L6578.9 769.8L6590.7 765.2L6598.6 746.4L6612.0 740.7L6614.4 725.2L6638.0 713.4M3798.0 713.4L3805.9 720.3L3817.7 730.1L3829.6 744.5L3833.5 758.6L3829.6 772.6L3841.4 779.0L3849.3 781.7L3865.1 793.5L3880.8 799.8L3904.5 801.5L3906.1 811.3L3917.1 810.4L3936.1 810.4L3955.8 790.8L3979.5 797.1L3983.4 813.1L3979.5 834.9L3987.3 833.1L3995.2 852.0L4007.1 855.4L4015.0 848.6L4022.8 847.8L4038.6 841.8L4052.0 845.2L4062.3 855.4M6638.0 713.4L6645.9 720.3L6657.8 730.1L6669.6 744.5L6673.5 758.6L6669.6 772.6L6681.4 779.0L6689.3 781.7L6705.1 793.5L6720.9 799.8L6744.5 801.5L6746.1 811.3L6757.2 810.4L6776.1 810.4L6795.8 790.8L6819.5 797.1L6823.4 813.1L6819.5 834.9L6827.4 833.1L6835.3 852.0L6847.1 855.4L6855.0 848.6L6862.9 847.8L6878.7 841.8L6892.1 845.2L6902.3 855.4M3906.1 811.3L3906.1 830.5L3912.4 849.5M6746.1 811.3L6746.1 830.5L6752.4 849.5M3940.0 852.0L3941.6 834.9L3951.8 835.7L3956.6 821.8L3961.3 810.4L3977.9 800.6M6780.0 852.0L6781.6 834.9L6791.9 835.7L6796.6 821.8L6801.3 810.4L6817.9 800.6M3764.9 836.6L3770.4 830.5L3762.5 817.5L3758.6 804.2L3766.4 799.8L3778.3 795.3L3794.1 778.1L3798.0 758.6L3805.9 755.8L3817.7 730.1M6604.9 836.6L6610.4 830.5L6602.5 817.5L6598.6 804.2L6606.5 799.8L6618.3 795.3L6634.1 778.1L6638.0 758.6L6645.9 755.8L6657.8 730.1M3952.6 852.0L3987.3 833.1M6792.7 852.0L6827.4 833.1M3987.3 934.6L4000.0 938.7L4009.4 916.8L4019.7 933.0M6827.4 934.6L6840.0 938.7L6849.5 916.8L6859.7 933.0M3995.2 852.0L4000.8 865.6L4008.6 873.1L4003.9 890.6L4015.7 883.9L4035.5 888.1L4042.6 903.7L4044.9 918.4L4024.4 915.2L4019.7 933.0M6835.3 852.0L6840.8 865.6L6848.7 873.1L6843.9 890.6L6855.8 883.9L6875.5 888.1L6882.6 903.7L6885.0 918.4L6864.5 915.2L6859.7 933.0M4044.9 918.4L4050.5 914.4L4059.1 916.8L4058.3 930.6L4046.5 943.5M6885.0 918.4L6890.5 914.4L6899.2 916.8L6898.4 930.6L6886.5 943.5M4007.1 855.4L4024.4 862.2L4030.7 879.0L4050.5 898.0L4059.1 916.8M6847.1 855.4L6864.5 862.2L6870.8 879.0L6890.5 898.0L6899.2 916.8M3582.6 637.2L3598.4 615.8L3604.7 597.2L3612.6 563.3L3644.2 565.8L3667.8 560.8L3695.4 560.8L3723.1 515.1L3762.5 505.5L3786.2 519.2L3794.1 531.2L3813.8 521.9L3833.5 553.2L3857.2 563.3L3880.8 581.7L3899.0 584.1M6422.7 637.2L6438.5 615.8L6444.8 597.2L6452.7 563.3L6484.2 565.8L6507.9 560.8L6535.5 560.8L6563.1 515.1L6602.5 505.5L6626.2 519.2L6634.1 531.2L6653.8 521.9L6673.5 553.2L6697.2 563.3L6720.9 581.7L6739.0 584.1M3651.3 632.7L3651.3 671.6L3659.9 672.7L3671.8 656.8L3683.6 661.1L3691.5 672.7L3702.5 686.2L3716.7 693.4L3734.9 701.5M6491.3 632.7L6491.3 671.6L6500.0 672.7L6511.8 656.8L6523.7 661.1L6531.5 672.7L6542.6 686.2L6556.8 693.4L6574.9 701.5M3652.1 632.7L3672.6 626.0L3691.5 639.4L3699.4 647.0L3722.3 646.0L3732.5 664.3L3750.7 679.0L3770.4 661.1L3790.1 660.0L3796.4 651.4L3809.8 653.6L3839.8 654.6M6492.1 632.7L6512.6 626.0L6531.5 639.4L6539.4 647.0L6562.3 646.0L6572.6 664.3L6590.7 679.0L6610.4 661.1L6630.2 660.0L6636.5 651.4L6649.9 653.6L6679.9 654.6M3843.8 631.6L3860.3 627.1L3865.9 606.6L3886.4 606.6L3899.0 584.1M6683.8 631.6L6700.4 627.1L6705.9 606.6L6726.4 606.6L6739.0 584.1M3839.8 654.6L3843.8 631.6M6679.9 654.6L6683.8 631.6M3790.1 660.0L3786.2 685.2L3770.4 682.1L3758.6 683.1L3769.6 700.4L3790.1 690.3L3798.0 713.4M6630.2 660.0L6626.2 685.2L6610.4 682.1L6598.6 683.1L6609.6 700.4L6630.2 690.3L6638.0 713.4M3899.0 584.1L3916.3 579.3L3928.2 567.0L3953.4 567.0L3983.4 548.1L3987.3 554.5L4015.0 567.0L4026.8 569.5L4052.8 569.5L4066.2 580.5L4092.3 580.5L4113.6 570.7L4129.3 575.6L4153.0 546.8L4164.8 531.2L4184.6 528.5L4204.3 537.7L4216.9 576.8L4240.6 586.5L4263.5 596.0L4275.3 592.5L4261.1 628.3L4243.7 632.7L4245.3 654.6L4240.6 660.0M6739.0 584.1L6756.4 579.3L6768.2 567.0L6793.5 567.0L6823.4 548.1L6827.4 554.5L6855.0 567.0L6866.8 569.5L6892.9 569.5L6906.3 580.5L6932.3 580.5L6953.6 570.7L6969.4 575.6L6993.1 546.8L7004.9 531.2L7024.6 528.5L7044.3 537.7L7057.0 576.8L7080.6 586.5L7103.5 596.0L7115.3 592.5L7101.1 628.3L7083.8 632.7L7085.4 654.6L7080.6 660.0M3899.0 584.1L3920.3 598.4L3928.2 610.1L3922.7 622.6L3947.9 632.7L3970.0 656.8L3999.2 657.9L4038.6 668.5L4054.4 658.9L4082.0 657.9L4093.8 646.0L4089.9 630.5L4107.3 632.7L4125.4 623.8L4141.2 612.4L4155.4 610.1L4150.6 601.9L4136.4 600.7L4129.3 575.6M6739.0 584.1L6760.3 598.4L6768.2 610.1L6762.7 622.6L6787.9 632.7L6810.0 656.8L6839.2 657.9L6878.7 668.5L6894.4 658.9L6922.0 657.9L6933.9 646.0L6929.9 630.5L6947.3 632.7L6965.4 623.8L6981.2 612.4L6995.4 610.1L6990.7 601.9L6976.5 600.7L6969.4 575.6M3843.8 631.6L3847.7 651.4L3842.2 663.2L3817.7 674.8L3798.0 682.1L3790.1 690.3M6683.8 631.6L6687.7 651.4L6682.2 663.2L6657.8 674.8L6638.0 682.1L6630.2 690.3M3833.5 758.6L3841.4 730.1L3824.0 730.1M6673.5 758.6L6681.4 730.1L6664.1 730.1M4190.9 686.2L4205.9 670.6L4220.1 664.3L4231.9 660.0L4240.6 660.0M7030.9 686.2L7045.9 670.6L7060.1 664.3L7071.9 660.0L7080.6 660.0M4205.1 707.5L4213.0 702.5L4223.2 699.4M7045.1 707.5L7053.0 702.5L7063.3 699.4M3194.5 734.0L3196.9 753.9L3194.5 761.4L3181.9 766.1L3180.3 775.3L3166.9 785.3L3141.6 796.2L3141.6 806.0L3162.9 826.2L3172.4 826.2L3176.4 857.1L3162.9 858.8L3119.6 860.5M6034.5 734.0L6036.9 753.9L6034.5 761.4L6021.9 766.1L6020.3 775.3L6006.9 785.3L5981.7 796.2L5981.7 806.0L6003.0 826.2L6012.4 826.2L6016.4 857.1L6003.0 858.8L5959.6 860.5M3141.6 806.0L3106.1 803.3M5981.7 806.0L5946.2 803.3M3141.6 806.0L3115.6 817.5L3115.6 839.2L3107.7 858.0L3076.2 858.0M5981.7 806.0L5955.6 817.5L5955.6 839.2L5947.8 858.0L5916.2 858.0M3119.6 860.5L3119.6 907.0L3113.2 911.9L3115.6 922.5L3118.8 931.4L3128.2 936.2L3145.6 942.7L3144.8 949.1L3150.3 963.5L3147.2 964.3L3143.2 970.7L3151.1 995.3M5959.6 860.5L5959.6 907.0L5953.3 911.9L5955.6 922.5L5958.8 931.4L5968.3 936.2L5985.6 942.7L5984.8 949.1L5990.4 963.5L5987.2 964.3L5983.3 970.7L5991.1 995.3M3172.4 826.2L3219.7 860.5L3237.9 877.3L3243.4 875.6L3244.2 897.2L3238.7 906.2L3219.7 907.8L3207.9 911.1L3194.5 916.0L3177.1 933.0L3169.3 948.3L3166.9 947.5L3145.6 942.7M6012.4 826.2L6059.8 860.5L6077.9 877.3L6083.4 875.6L6084.2 897.2L6078.7 906.2L6059.8 907.8L6047.9 911.1L6034.5 916.0L6017.2 933.0L6009.3 948.3L6006.9 947.5L5985.6 942.7M3285.2 779.0L3289.2 826.2L3291.5 831.4L3301.0 832.3L3316.8 842.6L3335.7 840.0L3399.6 873.1L3399.6 904.6L3387.8 918.4L3387.8 929.8L3395.7 943.5L3386.2 945.9L3372.0 956.3L3359.4 959.5L3350.7 967.5L3332.6 970.7L3324.7 981.0L3326.2 990.5L3336.5 1012.6L3337.3 1016.6M6125.3 779.0L6129.2 826.2L6131.6 831.4L6141.0 832.3L6156.8 842.6L6175.8 840.0L6239.7 873.1L6239.7 904.6L6227.8 918.4L6227.8 929.8L6235.7 943.5L6226.2 945.9L6212.0 956.3L6199.4 959.5L6190.7 967.5L6172.6 970.7L6164.7 981.0L6166.3 990.5L6176.5 1012.6L6177.3 1016.6M3285.2 779.0L3282.1 762.4L3301.0 752.1M6125.3 779.0L6122.1 762.4L6141.0 752.1M3274.2 717.4L3276.5 732.0L3269.4 744.5L3285.2 779.0M6114.2 717.4L6116.6 732.0L6109.5 744.5L6125.3 779.0M3301.0 832.3L3301.0 839.2L3269.4 860.5L3243.4 875.6M6141.0 832.3L6141.0 839.2L6109.5 860.5L6083.4 875.6M3244.2 897.2L3267.1 926.6L3289.2 924.9L3316.8 923.3L3320.7 930.6L3324.7 927.4L3315.2 920.9L3332.6 863.0L3335.7 840.0M6084.2 897.2L6107.1 926.6L6129.2 924.9L6156.8 923.3L6160.8 930.6L6164.7 927.4L6155.2 920.9L6172.6 863.0L6175.8 840.0M3231.6 980.2L3232.4 958.7L3238.7 937.0L3238.7 930.6L3244.2 922.5L3267.1 926.6M6071.6 980.2L6072.4 958.7L6078.7 937.0L6078.7 930.6L6084.2 922.5L6107.1 926.6M3219.7 907.8L3211.9 911.1L3218.2 924.1L3215.8 942.7L3210.3 942.7L3207.9 968.3L3219.7 981.8M6059.8 907.8L6051.9 911.1L6058.2 924.1L6055.8 942.7L6050.3 942.7L6047.9 968.3L6059.8 981.8M3407.5 767.0L3407.5 852.0L3501.4 852.0M6247.5 767.0L6247.5 852.0L6341.4 852.0M3407.5 852.0L3399.6 873.1M6247.5 852.0L6239.7 873.1M3399.6 904.6L3391.7 904.6L3387.0 918.4L3387.8 929.8M6239.7 904.6L6231.8 904.6L6227.0 918.4L6227.8 929.8M3399.6 868.9L3458.8 853.7L3478.5 852.0M6239.7 868.9L6298.8 853.7L6318.5 852.0M3395.7 943.5L3403.6 960.3L3423.3 990.5L3454.8 1000.8L3478.5 996.8L3490.3 988.9L3494.3 968.3L3506.1 934.6L3499.0 916.0L3510.1 888.9L3514.0 885.6M6235.7 943.5L6243.6 960.3L6263.3 990.5L6294.9 1000.8L6318.5 996.8L6330.4 988.9L6334.3 968.3L6346.2 934.6L6339.1 916.0L6350.1 888.9L6354.0 885.6M3423.3 990.5L3399.6 988.1L3388.6 995.3L3364.1 989.7L3340.4 1003.2L3337.3 1016.6M6263.3 990.5L6239.7 988.1L6228.6 995.3L6204.2 989.7L6180.5 1003.2L6177.3 1016.6M3490.3 988.9L3533.7 998.4L3541.6 996.8L3557.4 991.3L3587.4 966.7L3557.4 958.7L3547.9 942.7L3545.6 930.6M6330.4 988.9L6373.8 998.4L6381.7 996.8L6397.4 991.3L6427.4 966.7L6397.4 958.7L6388.0 942.7L6385.6 930.6M3533.7 998.4L3533.7 1043.4M6373.8 998.4L6373.8 1043.4M3478.5 996.8L3486.4 1017.4L3478.5 1037.9L3506.1 1053.7L3519.5 1067.1M6318.5 996.8L6326.4 1017.4L6318.5 1037.9L6346.2 1053.7L6359.6 1067.1M3443.0 1041.0L3450.9 1037.9L3478.5 1037.9M6283.0 1041.0L6290.9 1037.9L6318.5 1037.9M3443.0 1041.0L3440.6 1053.7L3450.9 1065.5L3440.6 1077.4L3450.9 1096.5L3469.8 1104.5L3483.2 1121.3L3529.8 1113.3M6283.0 1041.0L6280.7 1053.7L6290.9 1065.5L6280.7 1077.4L6290.9 1096.5L6309.9 1104.5L6323.3 1121.3L6369.8 1113.3M3337.3 1016.6L3356.2 1002.4L3368.1 990.5L3391.7 994.5L3423.3 990.5M6177.3 1016.6L6196.3 1002.4L6208.1 990.5L6231.8 994.5L6263.3 990.5M3285.2 1011.8L3299.4 1012.6L3336.5 1014.2L3337.3 1016.6M6125.3 1011.8L6139.5 1012.6L6176.5 1014.2L6177.3 1016.6M3299.4 1012.6L3298.6 1060.0L3312.8 1069.5L3336.5 1075.8L3372.0 1085.4L3383.8 1105.3L3401.2 1117.3L3399.6 1133.4L3383.8 1133.4L3383.8 1160.4L3395.7 1174.4L3409.1 1172.7L3450.1 1154.6L3470.6 1141.6L3473.0 1115.7L3469.8 1104.5M6139.5 1012.6L6138.7 1060.0L6152.9 1069.5L6176.5 1075.8L6212.0 1085.4L6223.9 1105.3L6241.2 1117.3L6239.7 1133.4L6223.9 1133.4L6223.9 1160.4L6235.7 1174.4L6249.1 1172.7L6290.1 1154.6L6310.7 1141.6L6313.0 1115.7L6309.9 1104.5M3304.9 1168.6L3316.8 1166.1L3356.2 1169.4L3375.9 1174.4L3409.1 1172.7M6145.0 1168.6L6156.8 1166.1L6196.3 1169.4L6216.0 1174.4L6249.1 1172.7M3368.1 1173.6L3368.1 1208.0L3368.1 1232.1L3367.3 1263.8L3340.4 1265.6M6208.1 1173.6L6208.1 1208.0L6208.1 1232.1L6207.3 1263.8L6180.5 1265.6M3368.1 1208.0L3375.9 1208.0L3383.8 1225.1L3413.8 1238.2L3425.6 1220.0L3441.4 1209.7L3457.2 1211.4M6208.1 1208.0L6216.0 1208.0L6223.9 1225.1L6253.9 1238.2L6265.7 1220.0L6281.5 1209.7L6297.2 1211.4M3409.1 1172.7L3424.9 1191.1L3439.1 1208.0M6249.1 1172.7L6264.9 1191.1L6279.1 1208.0M3457.2 1211.4L3469.8 1249.6M6297.2 1211.4L6309.9 1249.6M3450.1 1154.6L3466.7 1199.5L3457.2 1211.4M6290.1 1154.6L6306.7 1199.5L6297.2 1211.4M4113.6 993.7L4123.8 996.8L4137.2 996.8L4141.2 993.7M6953.6 993.7L6963.9 996.8L6977.3 996.8L6981.2 993.7M4322.6 1050.5L4322.6 1102.1M7162.7 1050.5L7162.7 1102.1" fill="none" stroke="#a3a3b8" stroke-width="2" stroke-linejoin="round"/><path d="M2097.9 434.7L2462.4 434.7M4938.0 434.7L5302.4 434.7M2263.6 434.7L2263.6 524.5L2279.4 541.6L2295.2 563.3L2310.1 585.3M5103.6 434.7L5103.6 524.5L5119.4 541.6L5135.2 563.3L5150.2 585.3M2342.5 585.3L2342.5 434.7M5182.5 585.3L5182.5 434.7M2405.6 585.3L2409.5 434.7M5245.6 585.3L5249.6 434.7M2459.2 585.3L2459.2 537.7L2508.2 482.9M5299.3 585.3L5299.3 537.7L5348.2 482.9M2583.1 554.5L2583.1 608.9L2622.5 628.3M5423.1 554.5L5423.1 608.9L5462.6 628.3M2759.8 554.5L2705.4 548.1L2681.7 508.3L2701.4 430.0M5599.9 554.5L5545.4 548.1L5521.8 508.3L5541.5 430.0M2342.5 434.7L2405.6 367.4M5182.5 434.7L5245.6 367.4M2405.6 434.7L2462.4 434.7M5245.6 434.7L5302.4 434.7M2287.3 585.3L2287.3 620.4L2288.1 642.7L2287.3 664.3M5127.3 585.3L5127.3 620.4L5128.1 642.7L5127.3 664.3M2230.5 664.3L2334.6 664.3M5070.5 664.3L5174.6 664.3M2263.6 664.3L2263.6 695.4L2306.2 734.9M5103.6 664.3L5103.6 695.4L5146.2 734.9M2306.2 734.9L2304.6 758.6M5146.2 734.9L5144.7 758.6M2310.9 664.3L2310.9 715.4L2350.4 715.4M5151.0 664.3L5151.0 715.4L5190.4 715.4M2334.6 631.6L2334.6 674.8L2310.9 674.8M5174.6 631.6L5174.6 674.8L5151.0 674.8M2295.2 585.3L2295.2 626.0L2307.0 637.2L2334.6 637.2M5135.2 585.3L5135.2 626.0L5147.0 637.2L5174.6 637.2M2389.8 585.3L2389.8 674.8L2405.6 674.8L2405.6 715.4L2464.0 715.4M5229.9 585.3L5229.9 674.8L5245.6 674.8L5245.6 715.4L5304.0 715.4M2334.6 674.8L2389.8 674.8M5174.6 674.8L5229.9 674.8M2350.4 674.8L2350.4 769.8M5190.4 674.8L5190.4 769.8M2397.7 715.4L2397.7 763.3L2369.3 763.3M5237.7 715.4L5237.7 763.3L5209.3 763.3M2389.8 631.6L2449.0 626.0M5229.9 631.6L5289.0 626.0M2389.8 653.6L2449.0 653.6M5229.9 653.6L5289.0 653.6M2449.0 585.3L2449.0 658.9L2454.5 685.2L2458.5 685.2L2464.0 715.4L2464.8 748.3L2468.7 753.9L2468.7 783.5M5289.0 585.3L5289.0 658.9L5294.5 685.2L5298.5 685.2L5304.0 715.4L5304.8 748.3L5308.7 753.9L5308.7 783.5M2405.6 685.2L2458.5 685.2M5245.6 685.2L5298.5 685.2M2397.7 720.3L2464.0 720.3M5237.7 720.3L5304.0 720.3M2421.4 720.3L2421.4 739.7L2464.8 748.3M5261.4 720.3L5261.4 739.7L5304.8 748.3M2490.8 648.1L2449.0 648.1M5330.8 648.1L5289.0 648.1M2488.4 679.0L2454.5 679.0M5328.5 679.0L5294.5 679.0M2504.2 720.3L2464.0 720.3M5344.2 720.3L5304.0 720.3M2492.4 753.9L2468.7 753.9M5332.4 753.9L5308.7 753.9M2496.3 734.9L2492.4 753.9L2488.4 772.6L2503.4 772.6L2503.4 779.9M5336.4 734.9L5332.4 753.9L5328.5 772.6L5343.5 772.6L5343.5 779.9M2516.0 775.3L2514.5 734.9L2492.4 734.9M5356.1 775.3L5354.5 734.9L5332.4 734.9M2539.7 772.6L2535.0 734.9L2514.5 734.9M5379.8 772.6L5375.0 734.9L5354.5 734.9M2520.0 667.4L2520.0 705.5L2516.0 710.5L2504.2 715.4M5360.0 667.4L5360.0 705.5L5356.1 710.5L5344.2 715.4M2541.3 667.4L2541.3 694.4M5381.3 667.4L5381.3 694.4M2575.2 664.3L2575.2 688.2L2612.3 688.2M5415.3 664.3L5415.3 688.2L5452.3 688.2M2541.3 667.4L2575.2 665.3M5381.3 667.4L5415.3 665.3M2558.6 703.5L2565.7 692.3L2575.2 688.2M5398.7 703.5L5405.8 692.3L5415.3 688.2M2613.9 688.2L2613.9 700.4L2617.8 700.4M5453.9 688.2L5453.9 700.4L5457.9 700.4M2545.2 734.9L2610.7 720.3M5385.3 734.9L5450.8 720.3M2554.7 734.9L2545.2 734.9L2535.0 734.9M5394.7 734.9L5385.3 734.9L5375.0 734.9M2571.3 763.3L2555.5 734.9M5411.3 763.3L5395.5 734.9M2540.5 775.3L2539.7 772.6L2567.3 775.3M5380.5 775.3L5379.8 772.6L5407.4 775.3M2519.2 773.5L2540.5 775.3M5359.2 773.5L5380.5 775.3M2580.7 661.1L2616.2 664.3L2621.0 671.6L2630.4 673.7L2632.0 656.8L2643.8 664.3L2658.8 664.3M5420.8 661.1L5456.3 664.3L5461.0 671.6L5470.5 673.7L5472.1 656.8L5483.9 664.3L5498.9 664.3M2632.0 656.8L2632.0 631.6M5472.1 656.8L5472.1 631.6M2646.2 631.6L2649.4 653.6L2652.5 652.5M5486.3 631.6L5489.4 653.6L5492.6 652.5M2496.3 613.5L2496.3 631.6L2490.0 648.1M5336.4 613.5L5336.4 631.6L5330.0 648.1M2521.6 626.0L2500.3 614.7M5361.6 626.0L5340.3 614.7M2559.4 667.4L2512.1 705.5M5399.5 667.4L5352.1 705.5M4228.0 1148.9L4228.0 1293.9M7068.0 1148.9L7068.0 1293.9M4299.0 1160.4L4299.0 1242.5L4322.6 1242.5L4322.6 1354.5M7139.0 1160.4L7139.0 1242.5L7162.7 1242.5L7162.7 1354.5M4228.0 1242.5L4299.0 1242.5M7068.0 1242.5L7139.0 1242.5M4322.6 1269.2L4393.6 1265.6L4422.0 1262.0M7162.7 1269.2L7233.7 1265.6L7262.1 1262.0M2815.8 1101.3L2815.8 1212.2M5655.9 1101.3L5655.9 1212.2M2752.7 1105.3L2847.4 1105.3M5592.8 1105.3L5687.4 1105.3M2847.4 1105.3L2886.8 1105.3L2902.6 1077.4M5687.4 1105.3L5726.9 1105.3L5742.6 1077.4M2755.9 1157.9L2815.8 1157.9M5595.9 1157.9L5655.9 1157.9M2792.2 1212.2L2859.2 1212.2M5632.2 1212.2L5699.3 1212.2" fill="none" stroke="#b0b0c2" stroke-width="1.5" stroke-dasharray="7 3 2 3"/><text x="2094.6" y="446.3" text-anchor="middle" font-size="23.5" font-style="italic" letter-spacing="2.6" fill="#86afe4" stroke="#eef4fc" stroke-opacity=".8" stroke-width="4" paint-order="stroke" stroke-linejoin="round">f of</text><text x="2082.3" y="472.0" text-anchor="middle" font-size="23.5" font-style="italic" letter-spacing="2.6" fill="#86afe4" stroke="#eef4fc" stroke-opacity=".8" stroke-width="4" paint-order="stroke" stroke-linejoin="round">ska</text><text x="2534.9" y="446.3" text-anchor="middle" font-size="23.5" font-style="italic" letter-spacing="2.6" fill="#86afe4" stroke="#eef4fc" stroke-opacity=".8" stroke-width="4" paint-order="stroke" stroke-linejoin="round">Hudson</text><text x="2534.9" y="473.2" text-anchor="middle" font-size="23.5" font-style="italic" letter-spacing="2.6" fill="#86afe4" stroke="#eef4fc" stroke-opacity=".8" stroke-width="4" paint-order="stroke" stroke-linejoin="round">Bay</text><text x="2779.6" y="475.7" text-anchor="middle" font-size="23.5" font-style="italic" letter-spacing="2.6" fill="#86afe4" stroke="#eef4fc" stroke-opacity=".8" stroke-width="4" paint-order="stroke" stroke-linejoin="round">Labrador</text><text x="2779.6" y="502.6" text-anchor="middle" font-size="23.5" font-style="italic" letter-spacing="2.6" fill="#86afe4" stroke="#eef4fc" stroke-opacity=".8" stroke-width="4" paint-order="stroke" stroke-linejoin="round">Sea</text><text x="2895.8" y="681.2" text-anchor="middle" font-size="23.5" font-style="italic" letter-spacing="2.6" fill="#86afe4" stroke="#eef4fc" stroke-opacity=".8" stroke-width="4" paint-order="stroke" stroke-linejoin="round">Norda</text><text x="2895.8" y="708.1" text-anchor="middle" font-size="23.5" font-style="italic" letter-spacing="2.6" fill="#86afe4" stroke="#eef4fc" stroke-opacity=".8" stroke-width="4" paint-order="stroke" stroke-linejoin="round">Atlantiko</text><text x="2910.5" y="915.9" text-anchor="middle" font-size="30" font-style="italic" letter-spacing="3.2" fill="#86afe4" stroke="#eef4fc" stroke-opacity=".8" stroke-width="4" paint-order="stroke" stroke-linejoin="round">Atlantic</text><text x="2910.5" y="950.2" text-anchor="middle" font-size="30" font-style="italic" letter-spacing="3.2" fill="#86afe4" stroke="#eef4fc" stroke-opacity=".8" stroke-width="4" paint-order="stroke" stroke-linejoin="round">Ocean</text><text x="2259.7" y="1029.7" text-anchor="middle" font-size="30" font-style="italic" letter-spacing="3.2" fill="#86afe4" stroke="#eef4fc" stroke-opacity=".8" stroke-width="4" paint-order="stroke" stroke-linejoin="round">Pacific</text><text x="2259.7" y="1063.9" text-anchor="middle" font-size="30" font-style="italic" letter-spacing="3.2" fill="#86afe4" stroke="#eef4fc" stroke-opacity=".8" stroke-width="4" paint-order="stroke" stroke-linejoin="round">Ocean</text><text x="3761.8" y="1104.3" text-anchor="middle" font-size="30" font-style="italic" letter-spacing="3.2" fill="#86afe4" stroke="#eef4fc" stroke-opacity=".8" stroke-width="4" paint-order="stroke" stroke-linejoin="round">Indian</text><text x="3761.8" y="1137.3" text-anchor="middle" font-size="30" font-style="italic" letter-spacing="3.2" fill="#86afe4" stroke="#eef4fc" stroke-opacity=".8" stroke-width="4" paint-order="stroke" stroke-linejoin="round">Ocean</text><text x="3920.9" y="905.0" text-anchor="middle" font-size="23.5" font-style="italic" letter-spacing="2.6" fill="#86afe4" stroke="#eef4fc" stroke-opacity=".8" stroke-width="4" paint-order="stroke" stroke-linejoin="round">Bay of</text><text x="3920.9" y="933.2" text-anchor="middle" font-size="23.5" font-style="italic" letter-spacing="2.6" fill="#86afe4" stroke="#eef4fc" stroke-opacity=".8" stroke-width="4" paint-order="stroke" stroke-linejoin="round">Bengal</text><text x="4433.4" y="1187.6" text-anchor="middle" font-size="23.5" font-style="italic" letter-spacing="2.6" fill="#86afe4" stroke="#eef4fc" stroke-opacity=".8" stroke-width="4" paint-order="stroke" stroke-linejoin="round">Coral</text><text x="4433.4" y="1212.1" text-anchor="middle" font-size="23.5" font-style="italic" letter-spacing="2.6" fill="#86afe4" stroke="#eef4fc" stroke-opacity=".8" stroke-width="4" paint-order="stroke" stroke-linejoin="round">Sea</text><text x="4388.1" y="505.0" text-anchor="middle" font-size="23.5" font-style="italic" letter-spacing="2.6" fill="#86afe4" stroke="#eef4fc" stroke-opacity=".8" stroke-width="4" paint-order="stroke" stroke-linejoin="round">Sea of</text><text x="4388.1" y="529.5" text-anchor="middle" font-size="23.5" font-style="italic" letter-spacing="2.6" fill="#86afe4" stroke="#eef4fc" stroke-opacity=".8" stroke-width="4" paint-order="stroke" stroke-linejoin="round">Okhotsk</text><text x="4709.8" y="793.6" text-anchor="middle" font-size="30" font-style="italic" letter-spacing="3.2" fill="#86afe4" stroke="#eef4fc" stroke-opacity=".8" stroke-width="4" paint-order="stroke" stroke-linejoin="round">Pacific</text><text x="4709.8" y="819.3" text-anchor="middle" font-size="30" font-style="italic" letter-spacing="3.2" fill="#86afe4" stroke="#eef4fc" stroke-opacity=".8" stroke-width="4" paint-order="stroke" stroke-linejoin="round">Ocean</text><text x="5091.5" y="1029.7" text-anchor="middle" font-size="30" font-style="italic" letter-spacing="3.2" fill="#86afe4" stroke="#eef4fc" stroke-opacity=".8" stroke-width="4" paint-order="stroke" stroke-linejoin="round">Pac</text><text x="5091.5" y="1062.7" text-anchor="middle" font-size="30" font-style="italic" letter-spacing="3.2" fill="#86afe4" stroke="#eef4fc" stroke-opacity=".8" stroke-width="4" paint-order="stroke" stroke-linejoin="round">Oc</text><g font-size="22.5" font-weight="bold" fill="#2e3243" stroke="#fff" stroke-opacity=".85" stroke-width="4.5" paint-order="stroke" stroke-linejoin="round" text-anchor="middle"><text x="2412.6" y="665.5">UNITED</text><text x="2418.7" y="696.1">STATES OF</text><text x="2424.8" y="724.3">AMERICA</text><text x="2424.8" y="853.9">MEXICO</text><text x="2574.1" y="850.3">CUBA</text><text x="2504.3" y="912.6">GUATEMALA</text><text x="2571.6" y="968.9">PANAMA</text><text x="2630.3" y="1014.2">COLOMBIA</text><text x="2769.8" y="1004.4">SURINAME</text><text x="2620.6" y="1091.2">PERU</text><text x="2791.8" y="1118.1">BRAZIL</text><text x="2700.1" y="1173.2">BOLIVIA</text><text x="2749.0" y="1225.8">PARAGUAY</text><text x="3283.5" y="435.6">NORWAY</text><text x="3185.7" y="505.3">UNITED</text><text x="3189.4" y="534.7">KINGDOM</text><text x="3372.8" y="555.5">POLAND</text><text x="3219.9" y="619.1">FRANCE</text><text x="3427.9" y="628.8">ROMANIA</text><text x="3164.9" y="699.8">SPAIN</text><text x="3287.2" y="663.1">ITALY</text><text x="3446.2" y="663.1">BULGARIA</text><text x="3391.2" y="702.2">GREECE</text><text x="3489.1" y="702.2">TURKEY</text><text x="3287.2" y="753.6">TUNISIA</text><text x="3152.7" y="778.1">MOROCCO</text><text x="3354.5" y="817.2">LIBYA</text><text x="3442.6" y="822.1">EGYPT</text><text x="3558.8" y="761.0">IRAQ</text><text x="3639.5" y="764.6">IRAN</text><text x="3546.5" y="813.6">SAUDI</text><text x="3546.5" y="841.7">ARABIA</text><text x="3725.1" y="614.2">KAZAKHSTAN</text><text x="3801.0" y="676.6">KYRGYZSTAN</text><text x="4029.7" y="619.1">MONGOLIA</text><text x="4035.8" y="741.4">CHINA</text><text x="4216.9" y="712.0">SOUTH</text><text x="4210.8" y="741.4">KOREA</text><text x="4161.8" y="842.9">TAIWAN</text><text x="3770.4" y="785.4">PAKISTAN</text><text x="3831.6" y="855.1">INDIA</text><text x="3660.3" y="867.4">OMAN</text><text x="3588.1" y="905.3">YEMEN</text><text x="3847.5" y="977.5">SRI LANKA</text><text x="4027.3" y="873.5">LAOS</text><text x="4082.3" y="932.2">VIETNAM</text><text x="4100.7" y="1017.8">MALAYSIA</text><text x="3193.0" y="905.3">MALI</text><text x="3284.8" y="894.3">NIGER</text><text x="3360.6" y="912.6">CHAD</text><text x="3116.0" y="955.5">SIERRA</text><text x="3116.0" y="982.4">LEONE</text><text x="3275.0" y="961.6">NIGERIA</text><text x="3516.0" y="954.2">ETHIOPIA</text><text x="3293.3" y="1010.5">EQUATORIAL</text><text x="3293.3" y="1037.4">GUINEA</text><text x="3513.5" y="1025.2">KENYA</text><text x="3491.5" y="1088.8">TANZANIA</text><text x="3427.9" y="1154.8">ZAMBIA</text><text x="3577.1" y="1189.1">MADAGASCAR</text><text x="3409.5" y="1258.8">SOUTH</text><text x="3409.5" y="1286.9">AFRICA</text><text x="4347.8" y="1068.0">PAPUA NEW</text><text x="4347.8" y="1096.1">GUINEA</text><text x="4494.6" y="1101.0">SOLOMON</text><text x="4494.6" y="1127.9">ISLANDS</text><text x="4693.9" y="1109.6">TOKELAU</text><text x="4275.6" y="1238.0">AUSTRALIA</text></g><g fill="#5aa999" fill-opacity=".86" stroke="#2f7568" stroke-opacity=".6" stroke-width="2.4"><circle cx="2309.1" cy="498.0" r="11.3"/><circle cx="2393.3" cy="562.8" r="11.3"/><circle cx="2289.7" cy="618.3" r="11.3"/><circle cx="2337.0" cy="623.4" r="11.3"/><circle cx="2356.4" cy="623.4" r="11.3"/><circle cx="2293.6" cy="645.5" r="11.3"/><circle cx="2351.8" cy="668.0" r="11.3"/><circle cx="2281.1" cy="672.7" r="11.3"/><circle cx="2266.4" cy="690.1" r="11.3"/><circle cx="2361.5" cy="703.7" r="11.3"/><circle cx="2371.2" cy="732.9" r="11.3"/><circle cx="2377.8" cy="754.2" r="11.3"/><circle cx="2408.1" cy="748.4" r="11.3"/><circle cx="2406.1" cy="767.8" r="11.3"/><circle cx="2375.1" cy="793.0" r="11.3"/><circle cx="2441.1" cy="816.3" r="11.3"/><circle cx="2443.0" cy="802.7" r="11.3"/><circle cx="2483.8" cy="734.8" r="11.3"/><circle cx="2487.7" cy="756.1" r="11.3"/><circle cx="2499.3" cy="760.0" r="11.3"/><circle cx="2495.4" cy="775.6" r="11.3"/><circle cx="2503.2" cy="781.4" r="11.3"/><circle cx="2534.2" cy="771.7" r="11.3"/><circle cx="2545.9" cy="779.4" r="11.3"/><circle cx="2565.3" cy="777.5" r="11.3"/><circle cx="2600.2" cy="824.1" r="11.3"/><circle cx="2641.0" cy="851.3" r="11.3"/><circle cx="2654.6" cy="870.7" r="11.3"/><circle cx="2703.1" cy="880.4" r="11.3"/><circle cx="2716.7" cy="890.1" r="11.3"/><circle cx="2445.0" cy="595.0" r="11.3"/><circle cx="2446.9" cy="610.6" r="11.3"/><circle cx="2452.7" cy="630.0" r="11.3"/><circle cx="2468.2" cy="637.7" r="11.3"/><circle cx="2478.0" cy="610.6" r="11.3"/><circle cx="2487.7" cy="606.7" r="11.3"/><circle cx="2503.2" cy="628.0" r="11.3"/><circle cx="2518.7" cy="635.8" r="11.3"/><circle cx="2545.9" cy="612.5" r="11.3"/><circle cx="2567.2" cy="616.4" r="11.3"/><circle cx="2547.8" cy="633.9" r="11.3"/><circle cx="2571.1" cy="639.7" r="11.3"/><circle cx="2604.1" cy="651.3" r="11.3"/><circle cx="2623.5" cy="622.2" r="11.3"/><circle cx="2631.3" cy="614.5" r="11.3"/><circle cx="2650.7" cy="647.4" r="11.3"/><circle cx="2642.9" cy="666.9" r="11.3"/><circle cx="2623.5" cy="655.2" r="11.3"/><circle cx="2608.0" cy="670.7" r="11.3"/><circle cx="2448.8" cy="674.6" r="11.3"/><circle cx="2472.1" cy="666.9" r="11.3"/><circle cx="2481.8" cy="655.2" r="11.3"/><circle cx="2491.5" cy="678.5" r="11.3"/><circle cx="2503.2" cy="686.3" r="11.3"/><circle cx="2483.8" cy="694.0" r="11.3"/><circle cx="2507.1" cy="709.6" r="11.3"/><circle cx="2518.7" cy="729.0" r="11.3"/><circle cx="2530.4" cy="740.6" r="11.3"/><circle cx="2542.0" cy="748.4" r="11.3"/><circle cx="2573.1" cy="748.4" r="11.3"/><circle cx="2588.6" cy="740.6" r="11.3"/><circle cx="2596.4" cy="732.9" r="11.3"/><circle cx="2553.7" cy="721.2" r="11.3"/><circle cx="2534.2" cy="709.6" r="11.3"/><circle cx="2565.3" cy="709.6" r="11.3"/><circle cx="2576.9" cy="701.8" r="11.3"/><circle cx="2545.9" cy="694.0" r="11.3"/><circle cx="2526.5" cy="678.5" r="11.3"/><circle cx="2553.7" cy="670.7" r="11.3"/><circle cx="2576.9" cy="670.7" r="11.3"/><circle cx="2588.6" cy="690.1" r="11.3"/><circle cx="2608.0" cy="694.0" r="11.3"/><circle cx="2635.2" cy="694.0" r="11.3"/><circle cx="2650.7" cy="651.3" r="11.3"/><circle cx="2658.5" cy="643.6" r="11.3"/><circle cx="2433.3" cy="787.2" r="11.3"/><circle cx="2429.4" cy="763.9" r="11.3"/><circle cx="2448.8" cy="732.9" r="11.3"/><circle cx="2429.4" cy="709.6" r="11.3"/><circle cx="2417.8" cy="729.0" r="11.3"/><circle cx="2456.6" cy="721.2" r="11.3"/><circle cx="2231.4" cy="606.7" r="11.3"/><circle cx="2243.1" cy="624.2" r="11.3"/><circle cx="2254.7" cy="697.9" r="11.3"/><circle cx="2266.4" cy="717.3" r="11.3"/><circle cx="2293.6" cy="744.5" r="11.3"/><circle cx="2305.2" cy="756.1" r="11.3"/><circle cx="2320.7" cy="736.7" r="11.3"/><circle cx="2293.6" cy="763.9" r="11.3"/><circle cx="2561.4" cy="810.5" r="11.3"/><circle cx="2569.2" cy="822.1" r="11.3"/><circle cx="2580.8" cy="771.7" r="11.3"/><circle cx="2518.7" cy="771.7" r="11.3"/><circle cx="2472.1" cy="628.0" r="11.3"/><circle cx="2487.7" cy="639.7" r="11.3"/><circle cx="2499.3" cy="666.9" r="11.3"/><circle cx="2511.0" cy="694.0" r="11.3"/><circle cx="2534.2" cy="663.0" r="11.3"/><circle cx="2588.6" cy="670.7" r="11.3"/><circle cx="2557.5" cy="701.8" r="11.3"/><circle cx="2580.8" cy="729.0" r="11.3"/><circle cx="2468.2" cy="686.3" r="11.3"/><circle cx="2514.8" cy="748.4" r="11.3"/><circle cx="2604.1" cy="740.6" r="11.3"/><circle cx="2639.1" cy="639.7" r="11.3"/><circle cx="2460.5" cy="740.6" r="11.3"/><circle cx="2441.1" cy="748.4" r="11.3"/><circle cx="3398.4" cy="410.6" r="11.3"/><circle cx="3408.1" cy="422.3" r="11.3"/><circle cx="3408.1" cy="433.9" r="11.3"/><circle cx="3406.1" cy="445.6" r="11.3"/><circle cx="3390.6" cy="428.1" r="11.3"/><circle cx="3371.2" cy="430.1" r="11.3"/><circle cx="3357.6" cy="432.0" r="11.3"/><circle cx="3448.8" cy="435.9" r="11.3"/><circle cx="3252.8" cy="432.0" r="11.3"/><circle cx="3287.7" cy="476.6" r="11.3"/><circle cx="3307.1" cy="498.0" r="11.3"/><circle cx="3320.7" cy="494.1" r="11.3"/><circle cx="3285.8" cy="505.8" r="11.3"/><circle cx="3369.3" cy="515.5" r="11.3"/><circle cx="3390.6" cy="519.3" r="11.3"/><circle cx="3394.5" cy="532.9" r="11.3"/><circle cx="3353.7" cy="532.9" r="11.3"/><circle cx="3431.4" cy="534.9" r="11.3"/><circle cx="3417.8" cy="565.1" r="11.3"/><circle cx="3435.3" cy="569.8" r="11.3"/><circle cx="3483.8" cy="531.0" r="11.3"/><circle cx="3495.4" cy="521.3" r="11.3"/><circle cx="3493.5" cy="480.5" r="11.3"/><circle cx="3623.5" cy="496.8" r="11.3"/><circle cx="3652.6" cy="510.8" r="11.3"/><circle cx="3788.5" cy="507.7" r="11.3"/><circle cx="3879.7" cy="486.3" r="11.3"/><circle cx="3941.9" cy="494.1" r="11.3"/><circle cx="3786.6" cy="575.6" r="11.3"/><circle cx="3714.8" cy="674.6" r="11.3"/><circle cx="3553.7" cy="647.4" r="11.3"/><circle cx="3561.4" cy="760.0" r="11.3"/><circle cx="3511.0" cy="732.9" r="11.3"/><circle cx="3479.9" cy="717.3" r="11.3"/><circle cx="3452.7" cy="802.7" r="11.3"/><circle cx="3454.7" cy="787.2" r="11.3"/><circle cx="3617.7" cy="822.1" r="11.3"/><circle cx="3646.8" cy="822.1" r="11.3"/><circle cx="3635.2" cy="833.8" r="11.3"/><circle cx="3672.1" cy="835.7" r="11.3"/><circle cx="3660.4" cy="859.0" r="11.3"/><circle cx="3786.6" cy="746.4" r="11.3"/><circle cx="3794.3" cy="756.1" r="11.3"/><circle cx="3811.8" cy="775.6" r="11.3"/><circle cx="3782.7" cy="841.5" r="11.3"/><circle cx="3784.6" cy="857.1" r="11.3"/><circle cx="3769.1" cy="861.0" r="11.3"/><circle cx="3887.5" cy="864.8" r="11.3"/><circle cx="3344.0" cy="826.0" r="11.3"/><circle cx="3252.8" cy="763.9" r="11.3"/><circle cx="3206.2" cy="754.2" r="11.3"/><circle cx="3314.9" cy="750.3" r="11.3"/><circle cx="3330.4" cy="760.0" r="11.3"/><circle cx="3380.9" cy="754.2" r="11.3"/><circle cx="3083.9" cy="884.2" r="11.3"/><circle cx="3179.0" cy="890.1" r="11.3"/><circle cx="3132.5" cy="791.1" r="11.3"/><circle cx="3179.0" cy="492.2" r="11.3"/><circle cx="3190.7" cy="490.2" r="11.3"/><circle cx="3163.5" cy="513.5" r="11.3"/><circle cx="3202.3" cy="509.6" r="11.3"/><circle cx="3184.9" cy="525.2" r="11.3"/><circle cx="3177.1" cy="550.4" r="11.3"/><circle cx="3182.9" cy="564.0" r="11.3"/><circle cx="3181.0" cy="593.1" r="11.3"/><circle cx="3194.6" cy="600.9" r="11.3"/><circle cx="3212.0" cy="593.1" r="11.3"/><circle cx="3215.9" cy="581.5" r="11.3"/><circle cx="3204.3" cy="631.9" r="11.3"/><circle cx="3204.3" cy="651.3" r="11.3"/><circle cx="3231.4" cy="651.3" r="11.3"/><circle cx="3254.7" cy="647.4" r="11.3"/><circle cx="3262.5" cy="631.9" r="11.3"/><circle cx="3250.9" cy="616.4" r="11.3"/><circle cx="3254.7" cy="589.2" r="11.3"/><circle cx="3270.3" cy="581.5" r="11.3"/><circle cx="3301.3" cy="585.3" r="11.3"/><circle cx="3316.9" cy="593.1" r="11.3"/><circle cx="3344.0" cy="597.0" r="11.3"/><circle cx="3367.3" cy="569.8" r="11.3"/><circle cx="3318.8" cy="542.6" r="11.3"/><circle cx="3289.7" cy="538.8" r="11.3"/><circle cx="3278.0" cy="527.1" r="11.3"/><circle cx="3262.5" cy="527.1" r="11.3"/><circle cx="3223.7" cy="538.8" r="11.3"/><circle cx="3276.1" cy="670.7" r="11.3"/><circle cx="3287.7" cy="686.3" r="11.3"/><circle cx="3301.3" cy="670.7" r="11.3"/><circle cx="3316.9" cy="678.5" r="11.3"/><circle cx="3344.0" cy="686.3" r="11.3"/><circle cx="3212.0" cy="682.4" r="11.3"/><circle cx="3204.3" cy="697.9" r="11.3"/><circle cx="3142.2" cy="686.3" r="11.3"/><circle cx="3149.9" cy="694.0" r="11.3"/><circle cx="3136.3" cy="697.9" r="11.3"/><circle cx="3140.2" cy="711.5" r="11.3"/><circle cx="3161.6" cy="715.4" r="11.3"/><circle cx="3181.0" cy="732.9" r="11.3"/><circle cx="3200.4" cy="732.9" r="11.3"/><circle cx="3215.9" cy="721.2" r="11.3"/><circle cx="3239.2" cy="717.3" r="11.3"/><circle cx="3260.6" cy="727.0" r="11.3"/><circle cx="3278.0" cy="713.4" r="11.3"/><circle cx="3293.6" cy="715.4" r="11.3"/><circle cx="3192.6" cy="740.6" r="11.3"/><circle cx="3371.2" cy="624.2" r="11.3"/><circle cx="3355.7" cy="630.0" r="11.3"/><circle cx="3429.4" cy="670.7" r="11.3"/><circle cx="3425.5" cy="684.3" r="11.3"/><circle cx="3196.5" cy="616.4" r="11.3"/><circle cx="3223.7" cy="631.9" r="11.3"/><circle cx="3239.2" cy="608.6" r="11.3"/><circle cx="3278.0" cy="631.9" r="11.3"/><circle cx="3293.6" cy="600.9" r="11.3"/><circle cx="3324.6" cy="608.6" r="11.3"/><circle cx="3332.4" cy="562.0" r="11.3"/><circle cx="3231.4" cy="515.5" r="11.3"/><circle cx="3247.0" cy="581.5" r="11.3"/><circle cx="3305.2" cy="573.7" r="11.3"/><circle cx="3351.8" cy="581.5" r="11.3"/><circle cx="3219.8" cy="569.8" r="11.3"/><circle cx="3200.4" cy="565.9" r="11.3"/><circle cx="3169.3" cy="581.5" r="11.3"/><circle cx="3184.9" cy="639.7" r="11.3"/><circle cx="3215.9" cy="655.2" r="11.3"/><circle cx="3235.3" cy="666.9" r="11.3"/><circle cx="3285.8" cy="655.2" r="11.3"/><circle cx="3254.7" cy="670.7" r="11.3"/><circle cx="3270.3" cy="701.8" r="11.3"/><circle cx="3309.1" cy="694.0" r="11.3"/><circle cx="3332.4" cy="701.8" r="11.3"/><circle cx="3363.4" cy="686.3" r="11.3"/><circle cx="3161.6" cy="701.8" r="11.3"/><circle cx="3223.7" cy="701.8" r="11.3"/><circle cx="3247.0" cy="709.6" r="11.3"/><circle cx="3192.6" cy="701.8" r="11.3"/><circle cx="3165.5" cy="616.4" r="11.3"/><circle cx="4039.3" cy="620.3" r="11.3"/><circle cx="4336.3" cy="608.6" r="11.3"/><circle cx="4250.9" cy="642.8" r="11.3"/><circle cx="4169.3" cy="694.0" r="11.3"/><circle cx="4012.1" cy="719.3" r="11.3"/><circle cx="4136.3" cy="734.8" r="11.3"/><circle cx="4062.6" cy="762.0" r="11.3"/><circle cx="4050.9" cy="785.3" r="11.3"/><circle cx="4153.8" cy="795.0" r="11.3"/><circle cx="4019.9" cy="825.2" r="11.3"/><circle cx="4080.0" cy="822.1" r="11.3"/><circle cx="4095.6" cy="829.9" r="11.3"/><circle cx="4129.7" cy="837.7" r="11.3"/><circle cx="4082.0" cy="855.1" r="11.3"/><circle cx="4029.6" cy="857.1" r="11.3"/><circle cx="3998.5" cy="864.8" r="11.3"/><circle cx="4206.2" cy="732.9" r="11.3"/><circle cx="4239.2" cy="748.4" r="11.3"/><circle cx="4287.7" cy="719.3" r="11.3"/><circle cx="4320.7" cy="701.8" r="11.3"/><circle cx="4309.1" cy="713.4" r="11.3"/><circle cx="4293.6" cy="732.9" r="11.3"/><circle cx="4757.5" cy="402.9" r="11.3"/><circle cx="2642.9" cy="860.0" r="11.3"/><circle cx="2635.2" cy="982.3" r="11.3"/><circle cx="2608.0" cy="1001.7" r="11.3"/><circle cx="2771.0" cy="997.8" r="11.3"/><circle cx="2738.0" cy="1129.8" r="11.3"/><circle cx="2908.9" cy="1131.7" r="11.3"/><circle cx="2936.0" cy="1085.2" r="11.3"/><circle cx="2804.0" cy="1170.6" r="11.3"/><circle cx="2821.5" cy="1162.8" r="11.3"/><circle cx="2875.9" cy="1182.2" r="11.3"/><circle cx="2887.5" cy="1186.1" r="11.3"/><circle cx="2802.1" cy="1217.1" r="11.3"/><circle cx="2827.3" cy="1256.0" r="11.3"/><circle cx="2705.0" cy="1283.1" r="11.3"/><circle cx="3199.2" cy="931.0" r="11.3"/><circle cx="3120.8" cy="961.7" r="11.3"/><circle cx="3125.9" cy="980.3" r="11.3"/><circle cx="3195.7" cy="965.6" r="11.3"/><circle cx="3228.7" cy="953.9" r="11.3"/><circle cx="3274.1" cy="949.3" r="11.3"/><circle cx="3268.3" cy="957.0" r="11.3"/><circle cx="3307.9" cy="959.0" r="11.3"/><circle cx="3221.7" cy="980.3" r="11.3"/><circle cx="3179.4" cy="987.3" r="11.3"/><circle cx="3285.8" cy="1025.0" r="11.3"/><circle cx="3303.3" cy="1036.6" r="11.3"/><circle cx="3307.1" cy="1072.7" r="11.3"/><circle cx="3315.7" cy="1099.1" r="11.3"/><circle cx="3356.8" cy="1127.9" r="11.3"/><circle cx="3408.9" cy="1028.9" r="11.3"/><circle cx="3460.5" cy="990.8" r="11.3"/><circle cx="3463.2" cy="1020.3" r="11.3"/><circle cx="3447.7" cy="1044.4" r="11.3"/><circle cx="3470.2" cy="1049.1" r="11.3"/><circle cx="3511.0" cy="1019.9" r="11.3"/><circle cx="3520.7" cy="1082.4" r="11.3"/><circle cx="3528.4" cy="1110.4" r="11.3"/><circle cx="3550.5" cy="937.6" r="11.3"/><circle cx="3590.5" cy="909.7" r="11.3"/><circle cx="3478.0" cy="1136.4" r="11.3"/><circle cx="3472.1" cy="1139.5" r="11.3"/><circle cx="3447.7" cy="1190.0" r="11.3"/><circle cx="3346.0" cy="1207.4" r="11.3"/><circle cx="3346.0" cy="1211.3" r="11.3"/><circle cx="3429.4" cy="1221.0" r="11.3"/><circle cx="3446.9" cy="1215.2" r="11.3"/><circle cx="3443.0" cy="1223.0" r="11.3"/><circle cx="3454.7" cy="1234.6" r="11.3"/><circle cx="3458.5" cy="1246.3" r="11.3"/><circle cx="3462.4" cy="1265.7" r="11.3"/><circle cx="3454.7" cy="1275.4" r="11.3"/><circle cx="3648.8" cy="1198.9" r="11.3"/><circle cx="3664.3" cy="1192.7" r="11.3"/><circle cx="3710.9" cy="1187.3" r="11.3"/><circle cx="3794.3" cy="907.4" r="11.3"/><circle cx="3817.6" cy="960.9" r="11.3"/><circle cx="3813.7" cy="941.5" r="11.3"/><circle cx="3425.5" cy="1238.5" r="11.3"/><circle cx="4006.3" cy="910.5" r="11.3"/><circle cx="4037.3" cy="926.0" r="11.3"/><circle cx="4072.3" cy="931.8" r="11.3"/><circle cx="4043.2" cy="951.2" r="11.3"/><circle cx="4027.6" cy="1063.8" r="11.3"/><circle cx="4082.0" cy="1079.3" r="11.3"/><circle cx="4351.8" cy="922.1" r="11.3"/><circle cx="4804.0" cy="860.0" r="11.3"/><circle cx="4703.1" cy="1142.6" r="11.3"/><circle cx="4522.6" cy="1209.4" r="11.3"/><circle cx="4417.8" cy="1254.0" r="11.3"/><circle cx="4417.8" cy="1265.7" r="11.3"/><circle cx="4029.6" cy="1013.3" r="11.3"/><circle cx="3179.8" cy="495.6" r="11.3"/><circle cx="3195.1" cy="526.0" r="11.3"/><circle cx="3176.0" cy="567.9" r="11.3"/><circle cx="3198.9" cy="556.5" r="11.3"/><circle cx="3191.3" cy="602.1" r="11.3"/><circle cx="3206.5" cy="628.7" r="11.3"/><circle cx="3221.7" cy="645.8" r="11.3"/><circle cx="3248.3" cy="647.7" r="11.3"/><circle cx="3257.8" cy="651.5" r="11.3"/><circle cx="3261.6" cy="624.9" r="11.3"/><circle cx="3255.9" cy="579.3" r="11.3"/><circle cx="3286.3" cy="586.9" r="11.3"/><circle cx="3305.3" cy="594.5" r="11.3"/><circle cx="3320.5" cy="594.5" r="11.3"/><circle cx="3331.9" cy="600.2" r="11.3"/><circle cx="3351.0" cy="586.9" r="11.3"/><circle cx="3322.4" cy="541.3" r="11.3"/><circle cx="3335.7" cy="560.3" r="11.3"/><circle cx="3290.1" cy="526.0" r="11.3"/><circle cx="3267.3" cy="539.4" r="11.3"/><circle cx="3280.6" cy="567.9" r="11.3"/><circle cx="3347.1" cy="573.6" r="11.3"/><circle cx="3390.9" cy="531.7" r="11.3"/><circle cx="3396.6" cy="516.5" r="11.3"/><circle cx="3491.6" cy="520.3" r="11.3"/><circle cx="3278.7" cy="674.3" r="11.3"/><circle cx="3320.5" cy="668.6" r="11.3"/><circle cx="3328.1" cy="678.1" r="11.3"/><circle cx="3366.2" cy="621.1" r="11.3"/><circle cx="3375.7" cy="640.1" r="11.3"/><circle cx="3406.1" cy="624.9" r="11.3"/><circle cx="3415.6" cy="621.1" r="11.3"/><circle cx="5081.0" cy="625.0" r="11.3"/><circle cx="4804.0" cy="857.0" r="11.3"/><circle cx="5085.0" cy="715.0" r="11.3"/></g><g fill="#de2f20" fill-opacity=".88" stroke="#781a12" stroke-opacity=".9" stroke-width="2.4"><circle cx="2247.0" cy="600.9" r="11.3"/><circle cx="2268.3" cy="621.0" r="11.3"/><circle cx="2240.0" cy="641.6" r="11.3"/><circle cx="2328.5" cy="672.7" r="11.3"/><circle cx="2245.0" cy="699.9" r="11.3"/><circle cx="2250.9" cy="711.5" r="11.3"/><circle cx="2303.3" cy="723.1" r="11.3"/><circle cx="2278.0" cy="742.6" r="11.3"/><circle cx="2287.7" cy="754.2" r="11.3"/><circle cx="2328.5" cy="746.4" r="11.3"/><circle cx="2384.8" cy="670.7" r="11.3"/><circle cx="2382.8" cy="688.2" r="11.3"/><circle cx="2445.0" cy="573.7" r="11.3"/><circle cx="2448.8" cy="647.4" r="11.3"/><circle cx="2439.1" cy="707.6" r="11.3"/><circle cx="2448.8" cy="752.3" r="11.3"/><circle cx="2441.1" cy="775.6" r="11.3"/><circle cx="2460.5" cy="781.4" r="11.3"/><circle cx="2516.8" cy="661.0" r="11.3"/><circle cx="2551.7" cy="661.0" r="11.3"/><circle cx="2582.8" cy="645.5" r="11.3"/><circle cx="2596.4" cy="651.3" r="11.3"/><circle cx="2588.6" cy="655.2" r="11.3"/><circle cx="2627.4" cy="624.2" r="11.3"/><circle cx="2613.8" cy="628.0" r="11.3"/><circle cx="2627.4" cy="674.6" r="11.3"/><circle cx="2600.2" cy="694.0" r="11.3"/><circle cx="2623.5" cy="690.1" r="11.3"/><circle cx="2580.8" cy="678.5" r="11.3"/><circle cx="2557.5" cy="684.3" r="11.3"/><circle cx="2545.9" cy="744.5" r="11.3"/><circle cx="2576.9" cy="721.2" r="11.3"/><circle cx="2592.5" cy="717.3" r="11.3"/><circle cx="2553.7" cy="729.0" r="11.3"/><circle cx="2578.9" cy="756.1" r="11.3"/><circle cx="2576.9" cy="791.1" r="11.3"/><circle cx="2580.8" cy="814.4" r="11.3"/><circle cx="2578.9" cy="818.3" r="11.3"/><circle cx="2365.4" cy="829.9" r="11.3"/><circle cx="2396.4" cy="820.2" r="11.3"/><circle cx="2404.2" cy="851.3" r="11.3"/><circle cx="2394.5" cy="862.9" r="11.3"/><circle cx="2429.4" cy="872.6" r="11.3"/><circle cx="2448.8" cy="892.0" r="11.3"/><circle cx="2606.1" cy="884.2" r="11.3"/><circle cx="2573.1" cy="670.7" r="11.3"/><circle cx="2606.1" cy="705.7" r="11.3"/><circle cx="2627.4" cy="678.5" r="11.3"/><circle cx="2615.8" cy="686.3" r="11.3"/><circle cx="2518.7" cy="655.2" r="11.3"/><circle cx="2569.2" cy="666.9" r="11.3"/><circle cx="2611.9" cy="709.6" r="11.3"/><circle cx="3295.5" cy="435.9" r="11.3"/><circle cx="3293.6" cy="447.5" r="11.3"/><circle cx="3353.7" cy="445.6" r="11.3"/><circle cx="3340.1" cy="439.8" r="11.3"/><circle cx="3458.5" cy="457.2" r="11.3"/><circle cx="3435.3" cy="468.1" r="11.3"/><circle cx="3408.1" cy="478.6" r="11.3"/><circle cx="3400.3" cy="494.1" r="11.3"/><circle cx="3400.3" cy="515.5" r="11.3"/><circle cx="3429.4" cy="523.2" r="11.3"/><circle cx="3526.5" cy="470.8" r="11.3"/><circle cx="3534.2" cy="468.9" r="11.3"/><circle cx="3503.2" cy="488.3" r="11.3"/><circle cx="3524.5" cy="513.5" r="11.3"/><circle cx="3557.5" cy="488.3" r="11.3"/><circle cx="3555.6" cy="503.0" r="11.3"/><circle cx="3598.3" cy="496.0" r="11.3"/><circle cx="3611.9" cy="407.5" r="11.3"/><circle cx="3654.6" cy="465.0" r="11.3"/><circle cx="3687.6" cy="442.5" r="11.3"/><circle cx="3726.4" cy="501.9" r="11.3"/><circle cx="3695.3" cy="499.9" r="11.3"/><circle cx="3697.3" cy="505.8" r="11.3"/><circle cx="3600.2" cy="517.4" r="11.3"/><circle cx="3613.8" cy="522.4" r="11.3"/><circle cx="3637.1" cy="523.2" r="11.3"/><circle cx="3675.9" cy="529.0" r="11.3"/><circle cx="3573.1" cy="554.3" r="11.3"/><circle cx="3606.1" cy="532.9" r="11.3"/><circle cx="3932.1" cy="525.2" r="11.3"/><circle cx="3745.8" cy="597.0" r="11.3"/><circle cx="3901.1" cy="644.3" r="11.3"/><circle cx="3798.2" cy="653.3" r="11.3"/><circle cx="3817.6" cy="650.6" r="11.3"/><circle cx="3802.1" cy="674.6" r="11.3"/><circle cx="3755.5" cy="670.7" r="11.3"/><circle cx="3450.8" cy="566.7" r="11.3"/><circle cx="3464.4" cy="579.5" r="11.3"/><circle cx="3487.7" cy="591.2" r="11.3"/><circle cx="3499.3" cy="565.9" r="11.3"/><circle cx="3497.4" cy="573.7" r="11.3"/><circle cx="3522.6" cy="560.1" r="11.3"/><circle cx="3520.7" cy="589.2" r="11.3"/><circle cx="3524.5" cy="606.7" r="11.3"/><circle cx="3518.7" cy="631.1" r="11.3"/><circle cx="3406.1" cy="585.3" r="11.3"/><circle cx="3419.7" cy="598.9" r="11.3"/><circle cx="3437.2" cy="608.6" r="11.3"/><circle cx="3454.7" cy="614.5" r="11.3"/><circle cx="3468.2" cy="612.5" r="11.3"/><circle cx="3408.1" cy="620.3" r="11.3"/><circle cx="3417.8" cy="637.7" r="11.3"/><circle cx="3433.3" cy="647.4" r="11.3"/><circle cx="3394.5" cy="657.2" r="11.3"/><circle cx="3394.5" cy="666.9" r="11.3"/><circle cx="3439.1" cy="670.7" r="11.3"/><circle cx="3441.1" cy="682.4" r="11.3"/><circle cx="3460.5" cy="672.7" r="11.3"/><circle cx="3495.4" cy="670.7" r="11.3"/><circle cx="3553.7" cy="663.0" r="11.3"/><circle cx="3565.3" cy="666.9" r="11.3"/><circle cx="3565.3" cy="684.3" r="11.3"/><circle cx="3516.8" cy="713.4" r="11.3"/><circle cx="3615.8" cy="727.0" r="11.3"/><circle cx="3586.6" cy="787.2" r="11.3"/><circle cx="3557.5" cy="753.0" r="11.3"/><circle cx="3487.7" cy="715.4" r="11.3"/><circle cx="3452.7" cy="715.4" r="11.3"/><circle cx="3435.3" cy="713.4" r="11.3"/><circle cx="3425.5" cy="701.0" r="11.3"/><circle cx="3398.4" cy="705.7" r="11.3"/><circle cx="3384.8" cy="715.4" r="11.3"/><circle cx="3489.6" cy="744.5" r="11.3"/><circle cx="3483.8" cy="763.9" r="11.3"/><circle cx="3495.4" cy="762.0" r="11.3"/><circle cx="3446.9" cy="769.7" r="11.3"/><circle cx="3458.5" cy="779.4" r="11.3"/><circle cx="3464.4" cy="775.6" r="11.3"/><circle cx="3565.3" cy="824.1" r="11.3"/><circle cx="3580.8" cy="828.0" r="11.3"/><circle cx="3520.7" cy="855.1" r="11.3"/><circle cx="3524.5" cy="857.1" r="11.3"/><circle cx="3763.3" cy="781.4" r="11.3"/><circle cx="3784.6" cy="767.8" r="11.3"/><circle cx="3798.2" cy="763.9" r="11.3"/><circle cx="3819.6" cy="793.0" r="11.3"/><circle cx="3747.8" cy="802.7" r="11.3"/><circle cx="3786.6" cy="814.4" r="11.3"/><circle cx="3740.0" cy="826.0" r="11.3"/><circle cx="3763.3" cy="841.5" r="11.3"/><circle cx="3844.8" cy="812.4" r="11.3"/><circle cx="3864.2" cy="822.1" r="11.3"/><circle cx="3873.9" cy="798.8" r="11.3"/><circle cx="3930.2" cy="783.3" r="11.3"/><circle cx="3924.4" cy="835.7" r="11.3"/><circle cx="3906.9" cy="845.4" r="11.3"/><circle cx="3817.6" cy="866.8" r="11.3"/><circle cx="3829.3" cy="888.1" r="11.3"/><circle cx="3786.6" cy="876.5" r="11.3"/><circle cx="3792.4" cy="880.4" r="11.3"/><circle cx="3856.4" cy="894.0" r="11.3"/><circle cx="3161.6" cy="531.0" r="11.3"/><circle cx="3146.0" cy="529.0" r="11.3"/><circle cx="3194.6" cy="540.7" r="11.3"/><circle cx="3212.0" cy="542.6" r="11.3"/><circle cx="3214.0" cy="560.1" r="11.3"/><circle cx="3208.2" cy="552.3" r="11.3"/><circle cx="3233.4" cy="564.0" r="11.3"/><circle cx="3247.0" cy="562.0" r="11.3"/><circle cx="3260.6" cy="564.0" r="11.3"/><circle cx="3250.9" cy="542.6" r="11.3"/><circle cx="3254.7" cy="540.7" r="11.3"/><circle cx="3285.8" cy="556.2" r="11.3"/><circle cx="3309.1" cy="558.2" r="11.3"/><circle cx="3324.6" cy="571.7" r="11.3"/><circle cx="3334.3" cy="577.6" r="11.3"/><circle cx="3346.0" cy="575.6" r="11.3"/><circle cx="3278.0" cy="571.7" r="11.3"/><circle cx="3229.5" cy="585.3" r="11.3"/><circle cx="3231.4" cy="600.9" r="11.3"/><circle cx="3237.3" cy="622.2" r="11.3"/><circle cx="3215.9" cy="610.6" r="11.3"/><circle cx="3272.2" cy="606.7" r="11.3"/><circle cx="3278.0" cy="604.7" r="11.3"/><circle cx="3289.7" cy="622.2" r="11.3"/><circle cx="3305.2" cy="624.2" r="11.3"/><circle cx="3297.4" cy="641.6" r="11.3"/><circle cx="3309.1" cy="651.3" r="11.3"/><circle cx="3305.2" cy="647.4" r="11.3"/><circle cx="3309.1" cy="666.9" r="11.3"/><circle cx="3324.6" cy="655.2" r="11.3"/><circle cx="3330.4" cy="678.5" r="11.3"/><circle cx="3344.0" cy="676.6" r="11.3"/><circle cx="3324.6" cy="725.1" r="11.3"/><circle cx="3281.9" cy="744.5" r="11.3"/><circle cx="3289.7" cy="727.0" r="11.3"/><circle cx="3361.5" cy="602.8" r="11.3"/><circle cx="3373.1" cy="597.0" r="11.3"/><circle cx="3365.4" cy="618.3" r="11.3"/><circle cx="3373.1" cy="633.9" r="11.3"/><circle cx="3336.3" cy="624.2" r="11.3"/><circle cx="3332.4" cy="630.0" r="11.3"/><circle cx="3355.7" cy="552.3" r="11.3"/><circle cx="3377.0" cy="544.6" r="11.3"/><circle cx="3219.8" cy="672.7" r="11.3"/><circle cx="3181.0" cy="678.5" r="11.3"/><circle cx="3181.0" cy="709.6" r="11.3"/><circle cx="3151.9" cy="747.6" r="11.3"/><circle cx="3171.3" cy="762.0" r="11.3"/><circle cx="3140.2" cy="769.7" r="11.3"/><circle cx="3134.4" cy="777.5" r="11.3"/><circle cx="3375.1" cy="666.9" r="11.3"/><circle cx="3355.7" cy="666.9" r="11.3"/><circle cx="4106.4" cy="547.3" r="11.3"/><circle cx="4215.9" cy="569.8" r="11.3"/><circle cx="4276.1" cy="591.2" r="11.3"/><circle cx="4209.3" cy="623.0" r="11.3"/><circle cx="4199.2" cy="643.6" r="11.3"/><circle cx="4184.1" cy="666.1" r="11.3"/><circle cx="4250.1" cy="653.3" r="11.3"/><circle cx="4128.6" cy="685.5" r="11.3"/><circle cx="4134.4" cy="694.8" r="11.3"/><circle cx="4049.0" cy="699.9" r="11.3"/><circle cx="4097.5" cy="707.6" r="11.3"/><circle cx="4169.3" cy="709.6" r="11.3"/><circle cx="4159.6" cy="724.3" r="11.3"/><circle cx="4210.1" cy="709.6" r="11.3"/><circle cx="4215.9" cy="725.1" r="11.3"/><circle cx="4227.6" cy="732.9" r="11.3"/><circle cx="4028.8" cy="724.3" r="11.3"/><circle cx="4039.3" cy="734.8" r="11.3"/><circle cx="4068.4" cy="741.4" r="11.3"/><circle cx="4056.8" cy="740.6" r="11.3"/><circle cx="4107.2" cy="736.0" r="11.3"/><circle cx="4107.2" cy="742.6" r="11.3"/><circle cx="4134.4" cy="763.9" r="11.3"/><circle cx="4146.0" cy="762.0" r="11.3"/><circle cx="4159.6" cy="775.6" r="11.3"/><circle cx="4169.3" cy="771.7" r="11.3"/><circle cx="4171.3" cy="783.3" r="11.3"/><circle cx="4167.4" cy="795.0" r="11.3"/><circle cx="4111.1" cy="774.8" r="11.3"/><circle cx="4138.3" cy="775.6" r="11.3"/><circle cx="4031.5" cy="774.8" r="11.3"/><circle cx="4102.2" cy="796.9" r="11.3"/><circle cx="4124.7" cy="794.2" r="11.3"/><circle cx="4052.9" cy="811.3" r="11.3"/><circle cx="4064.5" cy="844.7" r="11.3"/><circle cx="4102.6" cy="840.8" r="11.3"/><circle cx="4111.1" cy="849.3" r="11.3"/><circle cx="4140.2" cy="829.9" r="11.3"/><circle cx="4161.6" cy="828.0" r="11.3"/><circle cx="4173.2" cy="824.1" r="11.3"/><circle cx="4159.6" cy="845.4" r="11.3"/><circle cx="4276.1" cy="736.0" r="11.3"/><circle cx="4301.3" cy="734.8" r="11.3"/><circle cx="4313.0" cy="727.0" r="11.3"/><circle cx="4045.1" cy="859.0" r="11.3"/><circle cx="4047.1" cy="882.3" r="11.3"/><circle cx="3992.7" cy="877.3" r="11.3"/><circle cx="4049.0" cy="895.9" r="11.3"/><circle cx="4064.5" cy="895.9" r="11.3"/><circle cx="4215.9" cy="732.9" r="11.3"/><circle cx="4204.3" cy="717.3" r="11.3"/><circle cx="2439.1" cy="877.5" r="11.3"/><circle cx="2499.3" cy="904.6" r="11.3"/><circle cx="2518.7" cy="904.6" r="11.3"/><circle cx="2524.5" cy="918.2" r="11.3"/><circle cx="2549.8" cy="949.3" r="11.3"/><circle cx="2580.8" cy="957.0" r="11.3"/><circle cx="2584.7" cy="959.0" r="11.3"/><circle cx="2615.8" cy="978.4" r="11.3"/><circle cx="2627.4" cy="992.0" r="11.3"/><circle cx="2592.5" cy="1030.8" r="11.3"/><circle cx="2582.8" cy="1046.3" r="11.3"/><circle cx="2720.6" cy="1042.5" r="11.3"/><circle cx="2813.7" cy="1077.4" r="11.3"/><circle cx="2831.2" cy="1109.6" r="11.3"/><circle cx="2670.1" cy="1116.2" r="11.3"/><circle cx="2604.1" cy="1124.0" r="11.3"/><circle cx="2687.6" cy="1166.7" r="11.3"/><circle cx="2699.2" cy="1164.7" r="11.3"/><circle cx="2798.2" cy="1151.1" r="11.3"/><circle cx="2833.2" cy="1153.1" r="11.3"/><circle cx="2842.9" cy="1162.8" r="11.3"/><circle cx="2666.2" cy="949.3" r="11.3"/><circle cx="2674.0" cy="941.5" r="11.3"/><circle cx="2685.6" cy="947.3" r="11.3"/><circle cx="2701.2" cy="949.3" r="11.3"/><circle cx="2712.8" cy="951.2" r="11.3"/><circle cx="2681.8" cy="966.8" r="11.3"/><circle cx="2691.5" cy="964.8" r="11.3"/><circle cx="2707.0" cy="960.9" r="11.3"/><circle cx="2905.0" cy="1058.0" r="11.3"/><circle cx="2903.0" cy="1085.2" r="11.3"/><circle cx="2918.6" cy="1081.3" r="11.3"/><circle cx="2922.4" cy="1085.2" r="11.3"/><circle cx="2936.0" cy="1092.9" r="11.3"/><circle cx="2903.0" cy="1112.3" r="11.3"/><circle cx="2918.6" cy="1116.2" r="11.3"/><circle cx="2914.7" cy="1110.4" r="11.3"/><circle cx="2837.0" cy="1182.2" r="11.3"/><circle cx="2833.2" cy="1197.7" r="11.3"/><circle cx="2817.6" cy="1209.4" r="11.3"/><circle cx="2839.0" cy="1213.3" r="11.3"/><circle cx="2844.8" cy="1223.0" r="11.3"/><circle cx="2864.2" cy="1190.0" r="11.3"/><circle cx="2856.4" cy="1190.0" r="11.3"/><circle cx="2883.6" cy="1199.7" r="11.3"/><circle cx="2872.0" cy="1214.0" r="11.3"/><circle cx="2757.5" cy="1235.8" r="11.3"/><circle cx="2806.0" cy="1236.6" r="11.3"/><circle cx="2821.5" cy="1236.6" r="11.3"/><circle cx="2747.8" cy="1281.2" r="11.3"/><circle cx="3172.1" cy="965.6" r="11.3"/><circle cx="3254.7" cy="979.6" r="11.3"/><circle cx="3265.6" cy="981.1" r="11.3"/><circle cx="3511.0" cy="966.0" r="11.3"/><circle cx="3649.5" cy="1065.7" r="11.3"/><circle cx="3433.3" cy="1242.4" r="11.3"/><circle cx="3782.7" cy="875.5" r="11.3"/><circle cx="3943.8" cy="929.9" r="11.3"/><circle cx="3800.2" cy="926.8" r="11.3"/><circle cx="3821.5" cy="926.0" r="11.3"/><circle cx="3842.9" cy="925.2" r="11.3"/><circle cx="3980.7" cy="1001.7" r="11.3"/><circle cx="4045.1" cy="863.9" r="11.3"/><circle cx="4047.1" cy="900.8" r="11.3"/><circle cx="4062.6" cy="902.7" r="11.3"/><circle cx="4002.4" cy="918.2" r="11.3"/><circle cx="4008.2" cy="927.9" r="11.3"/><circle cx="4050.9" cy="943.5" r="11.3"/><circle cx="3998.5" cy="954.3" r="11.3"/><circle cx="4164.7" cy="913.2" r="11.3"/><circle cx="4006.3" cy="992.0" r="11.3"/><circle cx="4016.0" cy="1009.5" r="11.3"/><circle cx="4029.6" cy="1019.2" r="11.3"/><circle cx="4089.8" cy="1011.4" r="11.3"/><circle cx="4097.5" cy="1009.5" r="11.3"/><circle cx="4109.2" cy="993.9" r="11.3"/><circle cx="4181.0" cy="1025.0" r="11.3"/><circle cx="4151.9" cy="1069.6" r="11.3"/><circle cx="4050.9" cy="1075.5" r="11.3"/><circle cx="4058.7" cy="1085.2" r="11.3"/><circle cx="4070.3" cy="1081.3" r="11.3"/><circle cx="4080.0" cy="1089.0" r="11.3"/><circle cx="4087.8" cy="1089.0" r="11.3"/><circle cx="4099.5" cy="1085.9" r="11.3"/><circle cx="5079.0" cy="582.0" r="11.3"/><circle cx="5083.0" cy="601.0" r="11.3"/><circle cx="5077.0" cy="641.0" r="11.3"/><circle cx="5083.0" cy="708.0" r="11.3"/><circle cx="5080.0" cy="700.0" r="11.3"/></g><g fill="#b13c30" fill-opacity=".95" stroke="#6e2018" stroke-opacity=".9" stroke-width="2.4"><circle cx="2241.2" cy="581.5" r="11.3"/><circle cx="2337.0" cy="760.0" r="11.3"/><circle cx="2464.4" cy="696.0" r="11.3"/><circle cx="2542.0" cy="692.1" r="11.3"/><circle cx="2526.5" cy="719.3" r="11.3"/><circle cx="2561.4" cy="802.7" r="11.3"/><circle cx="2421.7" cy="818.3" r="11.3"/><circle cx="2658.5" cy="878.4" r="11.3"/><circle cx="3412.0" cy="511.6" r="11.3"/><circle cx="3509.0" cy="498.0" r="11.3"/><circle cx="3569.2" cy="532.9" r="11.3"/><circle cx="3588.6" cy="548.5" r="11.3"/><circle cx="3464.4" cy="591.2" r="11.3"/><circle cx="3435.3" cy="639.7" r="11.3"/><circle cx="3553.7" cy="699.9" r="11.3"/><circle cx="3604.1" cy="680.4" r="11.3"/><circle cx="3472.1" cy="730.9" r="11.3"/><circle cx="3340.1" cy="692.1" r="11.3"/><circle cx="3316.9" cy="703.7" r="11.3"/><circle cx="3247.0" cy="645.5" r="11.3"/><circle cx="3190.7" cy="653.3" r="11.3"/><circle cx="3169.3" cy="729.0" r="11.3"/><circle cx="4076.9" cy="677.7" r="11.3"/><circle cx="4134.4" cy="741.4" r="11.3"/><circle cx="4161.6" cy="804.7" r="11.3"/><circle cx="4080.0" cy="866.8" r="11.3"/><circle cx="2497.4" cy="914.3" r="11.3"/><circle cx="2829.3" cy="1040.5" r="11.3"/><circle cx="3101.4" cy="917.5" r="11.3"/><circle cx="3447.7" cy="909.3" r="11.3"/><circle cx="3209.3" cy="985.4" r="11.3"/><circle cx="3237.3" cy="978.4" r="11.3"/><circle cx="3306.0" cy="981.5" r="11.3"/><circle cx="3468.2" cy="1026.1" r="11.3"/><circle cx="3501.2" cy="1039.3" r="11.3"/><circle cx="3447.7" cy="1148.0" r="11.3"/><circle cx="3582.0" cy="1190.0" r="11.3"/><circle cx="3400.3" cy="1267.6" r="11.3"/><circle cx="3811.8" cy="946.2" r="11.3"/><circle cx="3827.3" cy="950.1" r="11.3"/><circle cx="3988.8" cy="1001.7" r="11.3"/></g><rect x="4425" y="450" width="650" height="360" rx="10" fill="rgba(40,55,100,.30)" filter="url(#sh)"/></g></svg>
<div class="a" style="left:2007px;top:423px;width:64px;height:128px;background:#fff;border-radius:7px;box-shadow:0 2px 6px rgba(0,0,0,.18),0 6px 14px rgba(30,50,90,.12);"></div>
<div class="a" style="left:2007px;top:567px;width:64px;height:64px;background:#fff;border-radius:7px;box-shadow:0 2px 6px rgba(0,0,0,.18),0 6px 14px rgba(30,50,90,.12);"></div>
<div class="a" style="left:2007px;top:647px;width:64px;height:64px;background:#fff;border-radius:7px;box-shadow:0 2px 6px rgba(0,0,0,.18),0 6px 14px rgba(30,50,90,.12);"></div>
<svg style="left:2024px;top:440px" width="32" height="96" viewBox="0 0 32 96"><circle cx="16" cy="16" r="15" fill="#343741"/><path d="M16 7.5v17M7.5 16h17" stroke="#fff" stroke-width="2.4"/><circle cx="16" cy="80" r="15" fill="#343741"/><path d="M7.5 80h17" stroke="#fff" stroke-width="2.6"/></svg>
<svg style="left:2023px;top:583px" width="32" height="32" viewBox="0 0 32 32" fill="none" stroke="#343741" stroke-width="2"><path d="M7 12a10 10 0 0 1 5-5M20 7a10 10 0 0 1 5 5M25 20a10 10 0 0 1-5 5M12 25a10 10 0 0 1-5-5"/><path d="M16 0v8M16 24v8M0 16h8M24 16h8"/><circle cx="16" cy="16" r="2" fill="#343741"/></svg>
<svg style="left:2022px;top:662px" width="34" height="34" viewBox="0 0 34 34" fill="none" stroke="#343741" stroke-width="2.2" stroke-linejoin="round"><path d="M9 3a7 7 0 0 0-5 10l3 3 4-1 14 14a3.5 3.5 0 0 0 5-5L16 10l1-4-3-3a7 7 0 0 0-6 0l4 4-1 4-4 1-4-4"/><circle cx="26" cy="26" r="1.2" fill="#343741"/></svg>
<div class="a" style="left:4429px;top:423px;width:640px;height:350px;background:#fff;border-radius:9px;box-shadow:0 3px 8px rgba(0,0,0,.12);"></div>
<div class="t" style="left:4463.0px;top:445.3px;font-size:23.3px;color:#1a1c21;font-weight:bold;">LAYERS</div>
<svg style="left:5020px;top:442px" width="32" height="28" viewBox="0 0 32 28" fill="none" stroke="#343741" stroke-width="2.2"><path d="M1 3h17M1 14h28M1 25h17M21 6l8 8-8 8"/></svg>
<div class="a" style="left:4431px;top:489px;width:636px;height:2px;background:#f1f3f7;"></div>
<div class="a" style="left:4431px;top:571px;width:636px;height:2px;background:#f1f3f7;"></div>
<div class="a" style="left:4431px;top:652px;width:636px;height:2px;background:#f1f3f7;"></div>
<div class="a" style="left:4431px;top:735px;width:636px;height:2px;background:#f1f3f7;"></div>
<div class="a" style="left:4449px;top:515px;width:32px;height:32px;background:#e2362b;border:2.5px solid #7a1c14;border-radius:50%;"></div>
<div class="a" style="left:4449px;top:597px;width:32px;height:32px;background:#56a797;border:2.5px solid #2f7467;border-radius:50%;"></div>
<div class="t" style="left:4498.0px;top:515.6px;font-size:30px;color:#343741;">vpc flow action reject</div>
<div class="t" style="left:4498.0px;top:596.6px;font-size:30px;color:#343741;">vpc flow action accept</div>
<svg style="left:4790px;top:520px" width="24" height="24" viewBox="0 0 24 24" fill="none" stroke="#98a2b3" stroke-width="2" stroke-dasharray="26 4"><circle cx="12" cy="12" r="10"/><path d="M5 5l14 14"/></svg>
<svg style="left:4806px;top:602px" width="24" height="24" viewBox="0 0 24 24" fill="none" stroke="#98a2b3" stroke-width="2" stroke-dasharray="26 4"><circle cx="12" cy="12" r="10"/><path d="M5 5l14 14"/></svg>
<svg style="left:4450px;top:681px" width="30" height="30" viewBox="0 0 30 30" fill="none" stroke="#343741" stroke-width="2.2"><rect x="1.5" y="1.5" width="6" height="6"/><rect x="12" y="1.5" width="6" height="6"/><rect x="22.5" y="1.5" width="6" height="6"/><rect x="1.5" y="12" width="6" height="6"/><rect x="12" y="12" width="6" height="6"/><rect x="22.5" y="12" width="6" height="6"/><rect x="1.5" y="22.5" width="6" height="6"/><rect x="12" y="22.5" width="6" height="6"/><rect x="22.5" y="22.5" width="6" height="6"/></svg>
<div class="t" style="left:4498.0px;top:678.6px;font-size:30px;color:#343741;">Road map</div>
<div class="t" style="right:43.0px;top:1230.9px;font-size:21.4px;color:#343741;font-weight:bold;-webkit-text-stroke:0;text-shadow:0 0 3px #fff,0 0 3px #fff,0 0 2px #fff;">Elastic Maps Service, MapTiler, OpenMapTiles, OpenStreetMap contributors</div>

</body></html>
